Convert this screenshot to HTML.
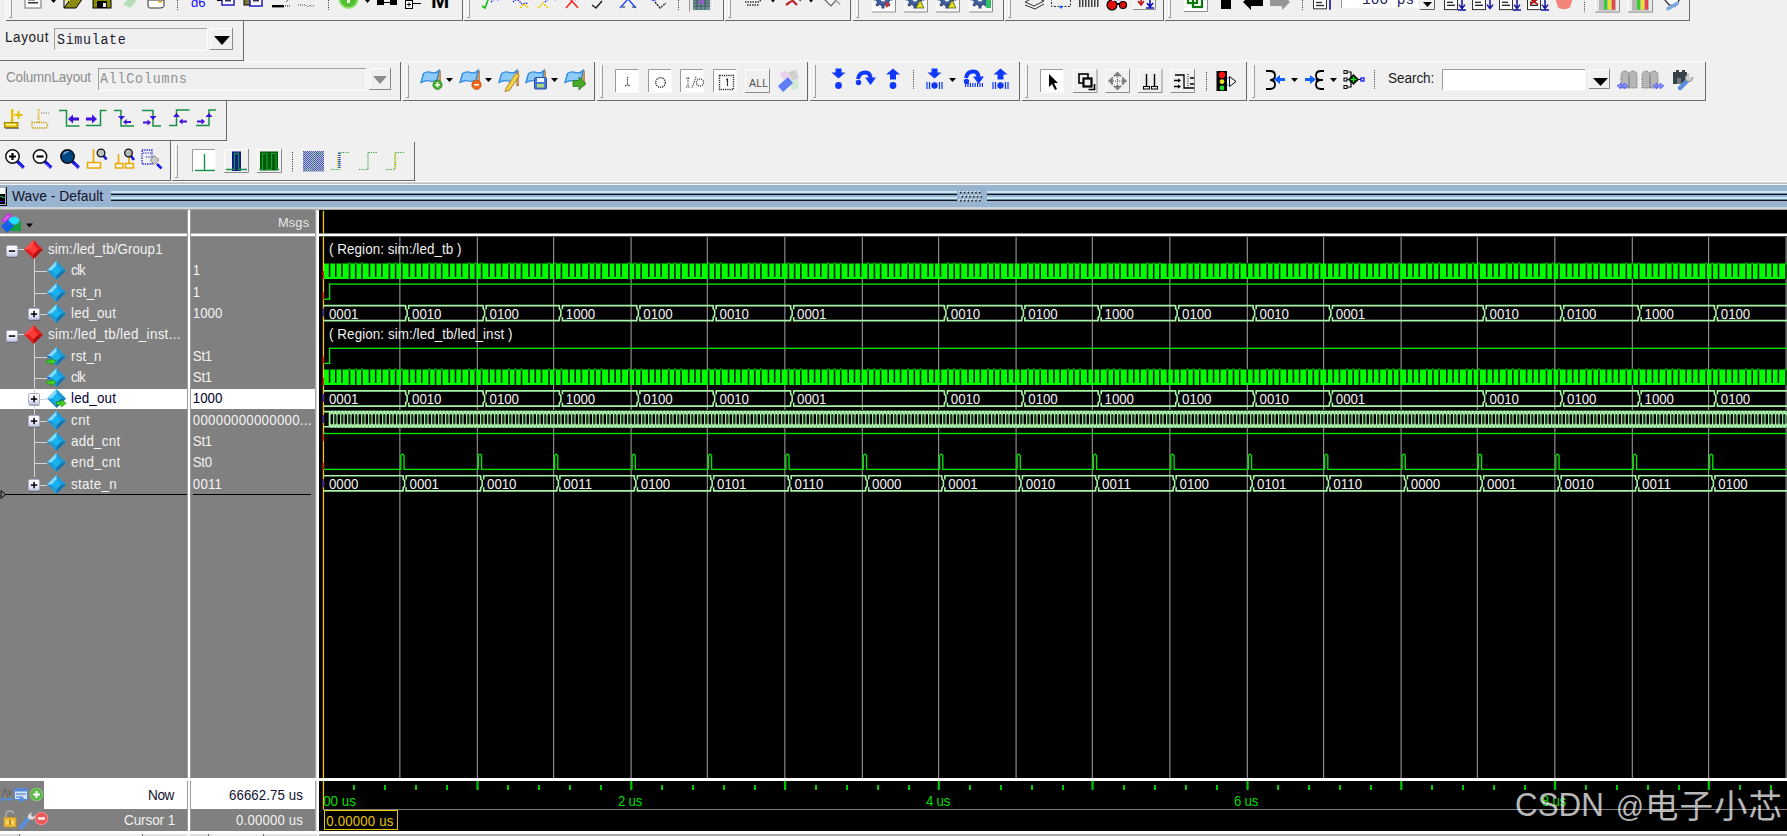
<!DOCTYPE html>
<html><head><meta charset="utf-8"><title>ModelSim Wave</title>
<style>
html,body{margin:0;padding:0;}
body{width:1787px;height:836px;overflow:hidden;background:#f0f0f0;position:relative;font-family:"Liberation Sans",sans-serif;}
#root{position:absolute;left:0;top:0;width:1787px;height:836px;overflow:hidden;}
#root div,#root span,#root svg{position:absolute;display:block;}
.t{white-space:pre;}
</style></head><body><div id="root">
<div style="left:6px;top:20px;width:457px;height:1px;background:#6a6a6a;"></div>
<div style="left:462px;top:-20px;width:1px;height:41px;background:#6a6a6a;"></div>
<div style="left:6px;top:-20px;width:1px;height:40px;background:#fff;"></div>
<div style="left:9px;top:0px;width:1px;height:18px;background:#fff;"></div>
<div style="left:10px;top:0px;width:1px;height:18px;background:#f0f0f0;"></div>
<div style="left:11px;top:0px;width:1px;height:18px;background:#a0a0a0;"></div>
<div style="left:9px;top:17px;width:3px;height:1px;background:#a0a0a0;"></div>
<div style="left:464px;top:20px;width:260px;height:1px;background:#6a6a6a;"></div>
<div style="left:723px;top:-20px;width:1px;height:41px;background:#6a6a6a;"></div>
<div style="left:464px;top:-20px;width:1px;height:40px;background:#fff;"></div>
<div style="left:467px;top:0px;width:1px;height:18px;background:#fff;"></div>
<div style="left:468px;top:0px;width:1px;height:18px;background:#f0f0f0;"></div>
<div style="left:469px;top:0px;width:1px;height:18px;background:#a0a0a0;"></div>
<div style="left:467px;top:17px;width:3px;height:1px;background:#a0a0a0;"></div>
<div style="left:725px;top:20px;width:126px;height:1px;background:#6a6a6a;"></div>
<div style="left:850px;top:-20px;width:1px;height:41px;background:#6a6a6a;"></div>
<div style="left:725px;top:-20px;width:1px;height:40px;background:#fff;"></div>
<div style="left:728px;top:0px;width:1px;height:18px;background:#fff;"></div>
<div style="left:729px;top:0px;width:1px;height:18px;background:#f0f0f0;"></div>
<div style="left:730px;top:0px;width:1px;height:18px;background:#a0a0a0;"></div>
<div style="left:728px;top:17px;width:3px;height:1px;background:#a0a0a0;"></div>
<div style="left:853px;top:20px;width:151px;height:1px;background:#6a6a6a;"></div>
<div style="left:1003px;top:-20px;width:1px;height:41px;background:#6a6a6a;"></div>
<div style="left:853px;top:-20px;width:1px;height:40px;background:#fff;"></div>
<div style="left:856px;top:0px;width:1px;height:18px;background:#fff;"></div>
<div style="left:857px;top:0px;width:1px;height:18px;background:#f0f0f0;"></div>
<div style="left:858px;top:0px;width:1px;height:18px;background:#a0a0a0;"></div>
<div style="left:856px;top:17px;width:3px;height:1px;background:#a0a0a0;"></div>
<div style="left:1005px;top:20px;width:159px;height:1px;background:#6a6a6a;"></div>
<div style="left:1163px;top:-20px;width:1px;height:41px;background:#6a6a6a;"></div>
<div style="left:1005px;top:-20px;width:1px;height:40px;background:#fff;"></div>
<div style="left:1008px;top:0px;width:1px;height:18px;background:#fff;"></div>
<div style="left:1009px;top:0px;width:1px;height:18px;background:#f0f0f0;"></div>
<div style="left:1010px;top:0px;width:1px;height:18px;background:#a0a0a0;"></div>
<div style="left:1008px;top:17px;width:3px;height:1px;background:#a0a0a0;"></div>
<div style="left:1165px;top:20px;width:525px;height:1px;background:#6a6a6a;"></div>
<div style="left:1689px;top:-20px;width:1px;height:41px;background:#6a6a6a;"></div>
<div style="left:1165px;top:-20px;width:1px;height:40px;background:#fff;"></div>
<div style="left:1168px;top:0px;width:1px;height:18px;background:#fff;"></div>
<div style="left:1169px;top:0px;width:1px;height:18px;background:#f0f0f0;"></div>
<div style="left:1170px;top:0px;width:1px;height:18px;background:#a0a0a0;"></div>
<div style="left:1168px;top:17px;width:3px;height:1px;background:#a0a0a0;"></div>
<div style="left:0px;top:60px;width:244px;height:1px;background:#6a6a6a;"></div>
<div style="left:243px;top:21px;width:1px;height:40px;background:#6a6a6a;"></div>
<div style="left:0px;top:100px;width:401px;height:1px;background:#6a6a6a;"></div>
<div style="left:400px;top:61px;width:1px;height:40px;background:#6a6a6a;"></div>
<div style="left:403px;top:100px;width:192px;height:1px;background:#6a6a6a;"></div>
<div style="left:594px;top:62px;width:1px;height:39px;background:#6a6a6a;"></div>
<div style="left:403px;top:62px;width:1px;height:38px;background:#fff;"></div>
<div style="left:406px;top:65px;width:1px;height:33px;background:#fff;"></div>
<div style="left:407px;top:65px;width:1px;height:33px;background:#f0f0f0;"></div>
<div style="left:408px;top:65px;width:1px;height:33px;background:#a0a0a0;"></div>
<div style="left:406px;top:97px;width:3px;height:1px;background:#a0a0a0;"></div>
<div style="left:597px;top:100px;width:211px;height:1px;background:#6a6a6a;"></div>
<div style="left:807px;top:62px;width:1px;height:39px;background:#6a6a6a;"></div>
<div style="left:597px;top:62px;width:1px;height:38px;background:#fff;"></div>
<div style="left:600px;top:65px;width:1px;height:33px;background:#fff;"></div>
<div style="left:601px;top:65px;width:1px;height:33px;background:#f0f0f0;"></div>
<div style="left:602px;top:65px;width:1px;height:33px;background:#a0a0a0;"></div>
<div style="left:600px;top:97px;width:3px;height:1px;background:#a0a0a0;"></div>
<div style="left:810px;top:100px;width:210px;height:1px;background:#6a6a6a;"></div>
<div style="left:1019px;top:62px;width:1px;height:39px;background:#6a6a6a;"></div>
<div style="left:810px;top:62px;width:1px;height:38px;background:#fff;"></div>
<div style="left:813px;top:65px;width:1px;height:33px;background:#fff;"></div>
<div style="left:814px;top:65px;width:1px;height:33px;background:#f0f0f0;"></div>
<div style="left:815px;top:65px;width:1px;height:33px;background:#a0a0a0;"></div>
<div style="left:813px;top:97px;width:3px;height:1px;background:#a0a0a0;"></div>
<div style="left:1022px;top:100px;width:225px;height:1px;background:#6a6a6a;"></div>
<div style="left:1246px;top:62px;width:1px;height:39px;background:#6a6a6a;"></div>
<div style="left:1022px;top:62px;width:1px;height:38px;background:#fff;"></div>
<div style="left:1025px;top:65px;width:1px;height:33px;background:#fff;"></div>
<div style="left:1026px;top:65px;width:1px;height:33px;background:#f0f0f0;"></div>
<div style="left:1027px;top:65px;width:1px;height:33px;background:#a0a0a0;"></div>
<div style="left:1025px;top:97px;width:3px;height:1px;background:#a0a0a0;"></div>
<div style="left:1249px;top:100px;width:457px;height:1px;background:#6a6a6a;"></div>
<div style="left:1705px;top:62px;width:1px;height:39px;background:#6a6a6a;"></div>
<div style="left:1249px;top:62px;width:1px;height:38px;background:#fff;"></div>
<div style="left:1252px;top:65px;width:1px;height:33px;background:#fff;"></div>
<div style="left:1253px;top:65px;width:1px;height:33px;background:#f0f0f0;"></div>
<div style="left:1254px;top:65px;width:1px;height:33px;background:#a0a0a0;"></div>
<div style="left:1252px;top:97px;width:3px;height:1px;background:#a0a0a0;"></div>
<div style="left:244px;top:61px;width:1462px;height:1px;background:#fbfbfb;"></div>
<div style="left:0px;top:140px;width:227px;height:1px;background:#6a6a6a;"></div>
<div style="left:226px;top:101px;width:1px;height:40px;background:#6a6a6a;"></div>
<div style="left:0px;top:180px;width:171px;height:1px;background:#6a6a6a;"></div>
<div style="left:170px;top:141px;width:1px;height:40px;background:#6a6a6a;"></div>
<div style="left:172px;top:180px;width:243px;height:1px;background:#6a6a6a;"></div>
<div style="left:414px;top:142px;width:1px;height:39px;background:#6a6a6a;"></div>
<div style="left:172px;top:142px;width:1px;height:38px;background:#fff;"></div>
<div style="left:175px;top:145px;width:1px;height:33px;background:#fff;"></div>
<div style="left:176px;top:145px;width:1px;height:33px;background:#f0f0f0;"></div>
<div style="left:177px;top:145px;width:1px;height:33px;background:#a0a0a0;"></div>
<div style="left:175px;top:177px;width:3px;height:1px;background:#a0a0a0;"></div>
<span id="layout" class="t" style="left:5px;top:31.17px;font:13.5px/1 'Liberation Sans',sans-serif;color:#1a1a1a;letter-spacing:0.569px;transform:scale(1.0,1.07);transform-origin:0 11.43px;">Layout</span>
<div style="left:54px;top:28px;width:154px;height:23px;background:#f0f0f0;"></div>
<div style="left:54px;top:28px;width:154px;height:1px;background:#a0a0a0;"></div>
<div style="left:54px;top:28px;width:1px;height:23px;background:#a0a0a0;"></div>
<div style="left:54px;top:50px;width:154px;height:1px;background:#fff;"></div>
<div style="left:207px;top:28px;width:1px;height:23px;background:#fff;"></div>
<span id="simulate" class="t" style="left:57px;top:33.76px;font:13.3px/1 'Liberation Mono',monospace;color:#202030;letter-spacing:0.699px;transform:scale(1.0,1.1);transform-origin:0 11.04px;">Simulate</span>
<div style="left:210px;top:28px;width:23px;height:22px;background:#f0f0f0;"></div>
<div style="left:210px;top:28px;width:23px;height:1px;background:#fff;"></div>
<div style="left:210px;top:28px;width:1px;height:22px;background:#fff;"></div>
<div style="left:210px;top:49px;width:23px;height:1px;background:#8a8a8a;"></div>
<div style="left:232px;top:28px;width:1px;height:22px;background:#8a8a8a;"></div>
<svg style="left:214px;top:36px" width="16" height="9"><path d="M0 0H16L8.0 9Z" fill="#000"/></svg>
<span id="collayout" class="t" style="left:6px;top:70.77px;font:13.5px/1 'Liberation Sans',sans-serif;color:#8c8c8c;letter-spacing:-0.181px;transform:scale(1.0,1.07);transform-origin:0 11.43px;">ColumnLayout</span>
<div style="left:98px;top:68px;width:269px;height:23px;background:#f0f0f0;"></div>
<div style="left:98px;top:68px;width:269px;height:1px;background:#a0a0a0;"></div>
<div style="left:98px;top:68px;width:1px;height:23px;background:#a0a0a0;"></div>
<div style="left:98px;top:90px;width:269px;height:1px;background:#fff;"></div>
<div style="left:366px;top:68px;width:1px;height:23px;background:#fff;"></div>
<span id="allcols" class="t" style="left:100px;top:73.26px;font:13.3px/1 'Liberation Mono',monospace;color:#909090;letter-spacing:0.799px;transform:scale(1.0,1.1);transform-origin:0 11.04px;">AllColumns</span>
<div style="left:369px;top:68px;width:22px;height:22px;background:#f0f0f0;"></div>
<div style="left:369px;top:68px;width:22px;height:1px;background:#fff;"></div>
<div style="left:369px;top:68px;width:1px;height:22px;background:#fff;"></div>
<div style="left:369px;top:89px;width:22px;height:1px;background:#8a8a8a;"></div>
<div style="left:390px;top:68px;width:1px;height:22px;background:#8a8a8a;"></div>
<svg style="left:373px;top:76px" width="14" height="8"><path d="M0 0H14L7.0 8Z" fill="#8a8a8a"/></svg>
<div style="left:0px;top:181px;width:1787px;height:1px;background:#ffffff;"></div>
<div style="left:0px;top:182px;width:1787px;height:1px;background:#d0d0d0;"></div>
<div style="left:0px;top:183px;width:1787px;height:1px;background:#c0c0c0;"></div>
<div style="left:0px;top:184px;width:1787px;height:1px;background:#f4f4f4;"></div>
<div style="left:0px;top:185px;width:1787px;height:22px;background:#99b4d1;"></div>
<div style="left:0px;top:207px;width:1787px;height:1px;background:#cdd5df;"></div>
<div style="left:0px;top:208px;width:1787px;height:1px;background:#d6d6d6;"></div>
<div style="left:0px;top:209px;width:1787px;height:1px;background:#a4a4a4;"></div>
<div style="left:111px;top:191px;width:846px;height:2px;background:#c4e7f3;"></div>
<div style="left:111px;top:193px;width:846px;height:1px;background:#6f8aa0;"></div>
<div style="left:111px;top:194px;width:846px;height:1px;background:#101418;"></div>
<div style="left:111px;top:197px;width:846px;height:2px;background:#c4e7f3;"></div>
<div style="left:111px;top:199px;width:846px;height:1px;background:#6f8aa0;"></div>
<div style="left:111px;top:200px;width:846px;height:1px;background:#101418;"></div>
<div style="left:987px;top:191px;width:800px;height:2px;background:#c4e7f3;"></div>
<div style="left:987px;top:193px;width:800px;height:1px;background:#6f8aa0;"></div>
<div style="left:987px;top:194px;width:800px;height:1px;background:#101418;"></div>
<div style="left:987px;top:197px;width:800px;height:2px;background:#c4e7f3;"></div>
<div style="left:987px;top:199px;width:800px;height:1px;background:#6f8aa0;"></div>
<div style="left:987px;top:200px;width:800px;height:1px;background:#101418;"></div>
<svg style="left:0;top:0" width="1787" height="210"><rect x="960.0" y="192" width="1.5" height="1.5" fill="#222"/><rect x="959.0" y="191" width="1.2" height="1.2" fill="#fff"/><rect x="963.8" y="192" width="1.5" height="1.5" fill="#222"/><rect x="962.8" y="191" width="1.2" height="1.2" fill="#fff"/><rect x="967.6" y="192" width="1.5" height="1.5" fill="#222"/><rect x="966.6" y="191" width="1.2" height="1.2" fill="#fff"/><rect x="971.4" y="192" width="1.5" height="1.5" fill="#222"/><rect x="970.4" y="191" width="1.2" height="1.2" fill="#fff"/><rect x="975.2" y="192" width="1.5" height="1.5" fill="#222"/><rect x="974.2" y="191" width="1.2" height="1.2" fill="#fff"/><rect x="979.0" y="192" width="1.5" height="1.5" fill="#222"/><rect x="978.0" y="191" width="1.2" height="1.2" fill="#fff"/><rect x="961.5" y="196" width="1.5" height="1.5" fill="#222"/><rect x="960.5" y="195" width="1.2" height="1.2" fill="#fff"/><rect x="965.3" y="196" width="1.5" height="1.5" fill="#222"/><rect x="964.3" y="195" width="1.2" height="1.2" fill="#fff"/><rect x="969.1" y="196" width="1.5" height="1.5" fill="#222"/><rect x="968.1" y="195" width="1.2" height="1.2" fill="#fff"/><rect x="972.9" y="196" width="1.5" height="1.5" fill="#222"/><rect x="971.9" y="195" width="1.2" height="1.2" fill="#fff"/><rect x="976.7" y="196" width="1.5" height="1.5" fill="#222"/><rect x="975.7" y="195" width="1.2" height="1.2" fill="#fff"/><rect x="980.5" y="196" width="1.5" height="1.5" fill="#222"/><rect x="979.5" y="195" width="1.2" height="1.2" fill="#fff"/><rect x="960.0" y="200" width="1.5" height="1.5" fill="#222"/><rect x="959.0" y="199" width="1.2" height="1.2" fill="#fff"/><rect x="963.8" y="200" width="1.5" height="1.5" fill="#222"/><rect x="962.8" y="199" width="1.2" height="1.2" fill="#fff"/><rect x="967.6" y="200" width="1.5" height="1.5" fill="#222"/><rect x="966.6" y="199" width="1.2" height="1.2" fill="#fff"/><rect x="971.4" y="200" width="1.5" height="1.5" fill="#222"/><rect x="970.4" y="199" width="1.2" height="1.2" fill="#fff"/><rect x="975.2" y="200" width="1.5" height="1.5" fill="#222"/><rect x="974.2" y="199" width="1.2" height="1.2" fill="#fff"/><rect x="979.0" y="200" width="1.5" height="1.5" fill="#222"/><rect x="978.0" y="199" width="1.2" height="1.2" fill="#fff"/></svg>
<span id="wavedef" class="t" style="left:12px;top:190.22px;font:13.8px/1 'Liberation Sans',sans-serif;color:#10132a;letter-spacing:0.030px;transform:scale(1.0,1.07);transform-origin:0 11.68px;">Wave - Default</span>
<div style="left:0px;top:187px;width:7px;height:19px;background:#101010;"></div>
<div style="left:0px;top:187px;width:6px;height:18px;background:#b0b0b0;"></div>
<div style="left:0px;top:188px;width:5px;height:6px;background:#fafafa;"></div>
<div style="left:0px;top:194px;width:5px;height:10px;background:#000;"></div>
<div style="left:0px;top:196px;width:3px;height:1px;background:#10a048;"></div>
<div style="left:2px;top:197px;width:3px;height:1px;background:#10a048;"></div>
<div style="left:0px;top:201px;width:5px;height:1px;background:#4010c0;"></div>
<div style="left:0px;top:210px;width:188px;height:621px;background:#808080;"></div>
<div style="left:191px;top:210px;width:124px;height:621px;background:#808080;"></div>
<div style="left:187px;top:210px;width:1px;height:621px;background:#9c9c9c;"></div>
<div style="left:188px;top:210px;width:2px;height:626px;background:#fff;"></div>
<div style="left:190px;top:210px;width:1px;height:626px;background:#9a9a9a;"></div>
<div style="left:315px;top:210px;width:1px;height:626px;background:#a8a8a8;"></div>
<div style="left:316px;top:210px;width:1px;height:626px;background:#dcdcdc;"></div>
<div style="left:317px;top:210px;width:2px;height:626px;background:#fff;"></div>
<div style="left:319px;top:210px;width:1468px;height:621px;background:#000;"></div>
<div style="left:0px;top:233px;width:187px;height:1px;background:#c0c0c0;"></div>
<div style="left:0px;top:234px;width:187px;height:2px;background:#fff;"></div>
<div style="left:0px;top:236px;width:187px;height:1px;background:#989898;"></div>
<div style="left:191px;top:233px;width:124px;height:1px;background:#c0c0c0;"></div>
<div style="left:191px;top:234px;width:124px;height:2px;background:#fff;"></div>
<div style="left:191px;top:236px;width:124px;height:1px;background:#989898;"></div>
<div style="left:319px;top:233px;width:1468px;height:1px;background:#8a8a8a;"></div>
<div style="left:319px;top:234px;width:1468px;height:2px;background:#fff;"></div>
<div style="left:319px;top:236px;width:1468px;height:1px;background:#484848;"></div>
<div style="left:0px;top:778px;width:1787px;height:3px;background:#fff;"></div>
<div style="left:44px;top:781px;width:143px;height:28px;background:#fff;"></div>
<div style="left:191px;top:781px;width:124px;height:28px;background:#fff;"></div>
<div style="left:0px;top:831px;width:1787px;height:3px;background:#fff;"></div>
<div style="left:0px;top:834px;width:19px;height:2px;background:#dcdcdc;"></div>
<div style="left:19px;top:834px;width:1px;height:2px;background:#707070;"></div>
<div style="left:20px;top:834px;width:122px;height:2px;background:#f0f0f0;"></div>
<div style="left:142px;top:834px;width:1px;height:2px;background:#707070;"></div>
<div style="left:143px;top:834px;width:44px;height:2px;background:#e4e4e4;"></div>
<div style="left:190px;top:834px;width:18px;height:2px;background:#dcdcdc;"></div>
<div style="left:208px;top:834px;width:1px;height:2px;background:#707070;"></div>
<div style="left:209px;top:834px;width:3px;height:2px;background:#e4e4e4;"></div>
<div style="left:212px;top:834px;width:51px;height:2px;background:#f0f0f0;"></div>
<div style="left:263px;top:834px;width:1px;height:2px;background:#707070;"></div>
<div style="left:264px;top:834px;width:52px;height:2px;background:#e4e4e4;"></div>
<div style="left:319px;top:834px;width:1468px;height:2px;background:#a8a8a8;"></div>
<div style="left:0px;top:389px;width:187px;height:20px;background:#fff;"></div>
<div style="left:191px;top:389px;width:124px;height:20px;background:#fff;"></div>
<div style="left:4px;top:494px;width:183px;height:1px;background:#000;"></div>
<div style="left:193px;top:494px;width:118px;height:1px;background:#000;"></div>
<svg style="left:0;top:490px" width="7" height="9"><path d="M1 0.5L5.5 4.5L1 8.5Z" fill="#808080" stroke="#000" stroke-width="1"/></svg>
<span id="msgs" class="t" style="left:278px;top:216.76px;font:12.8px/1 'Liberation Sans',sans-serif;color:#eaeaea;letter-spacing:0.157px;transform:scale(1.0,1.07);transform-origin:0 10.84px;">Msgs</span>
<div style="left:34px;top:258px;width:1px;height:49px;background:#d4d4d4;"></div>
<div style="left:34px;top:343px;width:1px;height:134px;background:#d4d4d4;"></div>
<div style="left:17px;top:249px;width:8px;height:1px;background:#d4d4d4;"></div>
<svg style="left:5.5px;top:244.5px" width="14" height="14"><defs><linearGradient id="eg5_244" x1="0" y1="0" x2="0" y2="1"><stop offset="0" stop-color="#fff"/><stop offset=".5" stop-color="#f4f4fc"/><stop offset="1" stop-color="#c0c4e4"/></linearGradient></defs><rect x="0.5" y="0.5" width="11" height="11" rx="1.5" fill="url(#eg5_244)" stroke="#a8acc4"/><rect x="1" y="12" width="11" height="1" fill="#505060" opacity=".45"/><rect x="2.800" y="5.300" width="6.400" height="1.500" fill="#000"/></svg>
<svg style="left:23.0px;top:238.5px" width="21.0" height="21.0"><path d="M10.5 1.0L20.0 10.5L10.5 20.0L1.0 10.5Z" fill="#e02020"/><path d="M10.5 1.0L1.0 10.5L5.75 10.5L10.5 5.75Z" fill="#ff5050"/><path d="M10.5 20.0L20.0 10.5L15.25 10.5L10.5 15.25Z" fill="#b01010"/><path d="M10.5 5.75L15.25 10.5L10.5 15.25L5.75 10.5Z" fill="#ff3838"/></svg>
<span id="n0" class="t" style="left:48px;top:242.66px;font:13.4px/1 'Liberation Sans',sans-serif;color:#f2f2f2;letter-spacing:0.086px;transform:scale(1.0,1.07);transform-origin:0 11.34px;">sim:/led_tb/Group1</span>
<div style="left:35px;top:271px;width:12px;height:1px;background:#d4d4d4;"></div>
<svg style="left:45.5px;top:259.5px" width="21.0" height="21.0"><path d="M10.5 1.0L20.0 10.5L10.5 20.0L1.0 10.5Z" fill="#1e9ad6"/><path d="M10.5 1.0L1.0 10.5L5.75 10.5L10.5 5.75Z" fill="#7fdcff"/><path d="M10.5 20.0L20.0 10.5L15.25 10.5L10.5 15.25Z" fill="#1577b0"/><path d="M10.5 5.75L15.25 10.5L10.5 15.25L5.75 10.5Z" fill="#19b4f0"/></svg>
<span id="n1" class="t" style="left:71px;top:263.66px;font:13.4px/1 'Liberation Sans',sans-serif;color:#f2f2f2;letter-spacing:-0.819px;transform:scale(1.0,1.07);transform-origin:0 11.34px;">clk</span>
<span id="v1" class="t" style="left:192.8px;top:263.74px;font:13.3px/1 'Liberation Sans',sans-serif;color:#f2f2f2;letter-spacing:-1.125px;transform:scale(1.0,1.07);transform-origin:0 11.26px;">1</span>
<div style="left:35px;top:293px;width:12px;height:1px;background:#d4d4d4;"></div>
<svg style="left:45.5px;top:281.5px" width="21.0" height="21.0"><path d="M10.5 1.0L20.0 10.5L10.5 20.0L1.0 10.5Z" fill="#1e9ad6"/><path d="M10.5 1.0L1.0 10.5L5.75 10.5L10.5 5.75Z" fill="#7fdcff"/><path d="M10.5 20.0L20.0 10.5L15.25 10.5L10.5 15.25Z" fill="#1577b0"/><path d="M10.5 5.75L15.25 10.5L10.5 15.25L5.75 10.5Z" fill="#19b4f0"/></svg>
<span id="n2" class="t" style="left:71px;top:285.66px;font:13.4px/1 'Liberation Sans',sans-serif;color:#f2f2f2;letter-spacing:0.196px;transform:scale(1.0,1.07);transform-origin:0 11.34px;">rst_n</span>
<span id="v2" class="t" style="left:192.8px;top:285.74px;font:13.3px/1 'Liberation Sans',sans-serif;color:#f2f2f2;letter-spacing:-1.125px;transform:scale(1.0,1.07);transform-origin:0 11.26px;">1</span>
<div style="left:40px;top:314px;width:7px;height:1px;background:#d4d4d4;"></div>
<svg style="left:28.4px;top:307.5px" width="14" height="14"><defs><linearGradient id="eg28_307" x1="0" y1="0" x2="0" y2="1"><stop offset="0" stop-color="#fff"/><stop offset=".5" stop-color="#f4f4fc"/><stop offset="1" stop-color="#c0c4e4"/></linearGradient></defs><rect x="0.5" y="0.5" width="11" height="11" rx="1.5" fill="url(#eg28_307)" stroke="#a8acc4"/><rect x="1" y="12" width="11" height="1" fill="#505060" opacity=".45"/><rect x="2.800" y="5.300" width="6.400" height="1.500" fill="#000"/><rect x="5.300" y="2.800" width="1.500" height="6.400" fill="#000"/></svg>
<svg style="left:45.5px;top:302.5px" width="21.0" height="21.0"><path d="M10.5 1.0L20.0 10.5L10.5 20.0L1.0 10.5Z" fill="#1e9ad6"/><path d="M10.5 1.0L1.0 10.5L5.75 10.5L10.5 5.75Z" fill="#7fdcff"/><path d="M10.5 20.0L20.0 10.5L15.25 10.5L10.5 15.25Z" fill="#1577b0"/><path d="M10.5 5.75L15.25 10.5L10.5 15.25L5.75 10.5Z" fill="#19b4f0"/></svg>
<span id="n3" class="t" style="left:71px;top:306.66px;font:13.4px/1 'Liberation Sans',sans-serif;color:#f2f2f2;letter-spacing:0.160px;transform:scale(1.0,1.07);transform-origin:0 11.34px;">led_out</span>
<span id="v3" class="t" style="left:192.8px;top:306.74px;font:13.3px/1 'Liberation Sans',sans-serif;color:#f2f2f2;letter-spacing:-0.025px;transform:scale(1.0,1.07);transform-origin:0 11.26px;">1000</span>
<div style="left:17px;top:334px;width:8px;height:1px;background:#d4d4d4;"></div>
<svg style="left:5.5px;top:329.5px" width="14" height="14"><defs><linearGradient id="eg5_329" x1="0" y1="0" x2="0" y2="1"><stop offset="0" stop-color="#fff"/><stop offset=".5" stop-color="#f4f4fc"/><stop offset="1" stop-color="#c0c4e4"/></linearGradient></defs><rect x="0.5" y="0.5" width="11" height="11" rx="1.5" fill="url(#eg5_329)" stroke="#a8acc4"/><rect x="1" y="12" width="11" height="1" fill="#505060" opacity=".45"/><rect x="2.800" y="5.300" width="6.400" height="1.500" fill="#000"/></svg>
<svg style="left:23.0px;top:323.5px" width="21.0" height="21.0"><path d="M10.5 1.0L20.0 10.5L10.5 20.0L1.0 10.5Z" fill="#e02020"/><path d="M10.5 1.0L1.0 10.5L5.75 10.5L10.5 5.75Z" fill="#ff5050"/><path d="M10.5 20.0L20.0 10.5L15.25 10.5L10.5 15.25Z" fill="#b01010"/><path d="M10.5 5.75L15.25 10.5L10.5 15.25L5.75 10.5Z" fill="#ff3838"/></svg>
<span id="n4" class="t" style="left:48px;top:327.66px;font:13.4px/1 'Liberation Sans',sans-serif;color:#f2f2f2;letter-spacing:0.301px;transform:scale(1.0,1.07);transform-origin:0 11.34px;">sim:/led_tb/led_inst...</span>
<div style="left:35px;top:357px;width:12px;height:1px;background:#d4d4d4;"></div>
<svg style="left:45.5px;top:345.5px" width="21.0" height="21.0"><path d="M10.5 1.0L20.0 10.5L10.5 20.0L1.0 10.5Z" fill="#1e9ad6"/><path d="M10.5 1.0L1.0 10.5L5.75 10.5L10.5 5.75Z" fill="#7fdcff"/><path d="M10.5 20.0L20.0 10.5L15.25 10.5L10.5 15.25Z" fill="#1577b0"/><path d="M10.5 5.75L15.25 10.5L10.5 15.25L5.75 10.5Z" fill="#19b4f0"/><path d="M0.8 14.1H5.3V11.9L10 15.6L5.3 19.3V17.1H0.8Z" fill="#44d424" stroke="#208010" stroke-width=".6"/><rect x="1.5" y="10.0" width="3" height="1.6" fill="#1060d0"/></svg>
<span id="n5" class="t" style="left:71px;top:349.66px;font:13.4px/1 'Liberation Sans',sans-serif;color:#f2f2f2;letter-spacing:0.196px;transform:scale(1.0,1.07);transform-origin:0 11.34px;">rst_n</span>
<span id="v5" class="t" style="left:192.8px;top:349.74px;font:13.3px/1 'Liberation Sans',sans-serif;color:#f2f2f2;letter-spacing:-0.269px;transform:scale(1.0,1.07);transform-origin:0 11.26px;">St1</span>
<div style="left:35px;top:378px;width:12px;height:1px;background:#d4d4d4;"></div>
<svg style="left:45.5px;top:366.5px" width="21.0" height="21.0"><path d="M10.5 1.0L20.0 10.5L10.5 20.0L1.0 10.5Z" fill="#1e9ad6"/><path d="M10.5 1.0L1.0 10.5L5.75 10.5L10.5 5.75Z" fill="#7fdcff"/><path d="M10.5 20.0L20.0 10.5L15.25 10.5L10.5 15.25Z" fill="#1577b0"/><path d="M10.5 5.75L15.25 10.5L10.5 15.25L5.75 10.5Z" fill="#19b4f0"/><path d="M0.8 14.1H5.3V11.9L10 15.6L5.3 19.3V17.1H0.8Z" fill="#44d424" stroke="#208010" stroke-width=".6"/><rect x="1.5" y="10.0" width="3" height="1.6" fill="#1060d0"/></svg>
<span id="n6" class="t" style="left:71px;top:370.66px;font:13.4px/1 'Liberation Sans',sans-serif;color:#f2f2f2;letter-spacing:-0.819px;transform:scale(1.0,1.07);transform-origin:0 11.34px;">clk</span>
<span id="v6" class="t" style="left:192.8px;top:370.74px;font:13.3px/1 'Liberation Sans',sans-serif;color:#f2f2f2;letter-spacing:-0.269px;transform:scale(1.0,1.07);transform-origin:0 11.26px;">St1</span>
<div style="left:40px;top:399px;width:7px;height:1px;background:#d4d4d4;"></div>
<svg style="left:28.4px;top:392.5px" width="14" height="14"><defs><linearGradient id="eg28_392" x1="0" y1="0" x2="0" y2="1"><stop offset="0" stop-color="#fff"/><stop offset=".5" stop-color="#f4f4fc"/><stop offset="1" stop-color="#c0c4e4"/></linearGradient></defs><rect x="0.5" y="0.5" width="11" height="11" rx="1.5" fill="url(#eg28_392)" stroke="#a8acc4"/><rect x="1" y="12" width="11" height="1" fill="#505060" opacity=".45"/><rect x="2.800" y="5.300" width="6.400" height="1.500" fill="#000"/><rect x="5.300" y="2.800" width="1.500" height="6.400" fill="#000"/></svg>
<svg style="left:45.5px;top:387.5px" width="21.0" height="21.0"><path d="M10.5 1.0L20.0 10.5L10.5 20.0L1.0 10.5Z" fill="#1e9ad6"/><path d="M10.5 1.0L1.0 10.5L5.75 10.5L10.5 5.75Z" fill="#7fdcff"/><path d="M10.5 20.0L20.0 10.5L15.25 10.5L10.5 15.25Z" fill="#1577b0"/><path d="M10.5 5.75L15.25 10.5L10.5 15.25L5.75 10.5Z" fill="#19b4f0"/><path d="M10.5 13.7H15.2V11.5L20.1 15.3L15.2 19.1V16.9H10.5Z" fill="#44d424" stroke="#208010" stroke-width=".6"/></svg>
<span id="n7" class="t" style="left:71px;top:391.66px;font:13.4px/1 'Liberation Sans',sans-serif;color:#000030;letter-spacing:0.160px;transform:scale(1.0,1.07);transform-origin:0 11.34px;">led_out</span>
<span id="v7" class="t" style="left:192.8px;top:391.74px;font:13.3px/1 'Liberation Sans',sans-serif;color:#000030;letter-spacing:-0.025px;transform:scale(1.0,1.07);transform-origin:0 11.26px;">1000</span>
<div style="left:40px;top:421px;width:7px;height:1px;background:#d4d4d4;"></div>
<svg style="left:28.4px;top:414.5px" width="14" height="14"><defs><linearGradient id="eg28_414" x1="0" y1="0" x2="0" y2="1"><stop offset="0" stop-color="#fff"/><stop offset=".5" stop-color="#f4f4fc"/><stop offset="1" stop-color="#c0c4e4"/></linearGradient></defs><rect x="0.5" y="0.5" width="11" height="11" rx="1.5" fill="url(#eg28_414)" stroke="#a8acc4"/><rect x="1" y="12" width="11" height="1" fill="#505060" opacity=".45"/><rect x="2.800" y="5.300" width="6.400" height="1.500" fill="#000"/><rect x="5.300" y="2.800" width="1.500" height="6.400" fill="#000"/></svg>
<svg style="left:45.5px;top:409.5px" width="21.0" height="21.0"><path d="M10.5 1.0L20.0 10.5L10.5 20.0L1.0 10.5Z" fill="#1e9ad6"/><path d="M10.5 1.0L1.0 10.5L5.75 10.5L10.5 5.75Z" fill="#7fdcff"/><path d="M10.5 20.0L20.0 10.5L15.25 10.5L10.5 15.25Z" fill="#1577b0"/><path d="M10.5 5.75L15.25 10.5L10.5 15.25L5.75 10.5Z" fill="#19b4f0"/></svg>
<span id="n8" class="t" style="left:71px;top:413.66px;font:13.4px/1 'Liberation Sans',sans-serif;color:#f2f2f2;letter-spacing:0.484px;transform:scale(1.0,1.07);transform-origin:0 11.34px;">cnt</span>
<span id="v8" class="t" style="left:192.8px;top:413.74px;font:13.3px/1 'Liberation Sans',sans-serif;color:#f2f2f2;letter-spacing:0.250px;transform:scale(1.0,1.07);transform-origin:0 11.26px;">00000000000000...</span>
<div style="left:35px;top:442px;width:12px;height:1px;background:#d4d4d4;"></div>
<svg style="left:45.5px;top:430.5px" width="21.0" height="21.0"><path d="M10.5 1.0L20.0 10.5L10.5 20.0L1.0 10.5Z" fill="#1e9ad6"/><path d="M10.5 1.0L1.0 10.5L5.75 10.5L10.5 5.75Z" fill="#7fdcff"/><path d="M10.5 20.0L20.0 10.5L15.25 10.5L10.5 15.25Z" fill="#1577b0"/><path d="M10.5 5.75L15.25 10.5L10.5 15.25L5.75 10.5Z" fill="#19b4f0"/></svg>
<span id="n9" class="t" style="left:71px;top:434.66px;font:13.4px/1 'Liberation Sans',sans-serif;color:#f2f2f2;letter-spacing:0.253px;transform:scale(1.0,1.07);transform-origin:0 11.34px;">add_cnt</span>
<span id="v9" class="t" style="left:192.8px;top:434.74px;font:13.3px/1 'Liberation Sans',sans-serif;color:#f2f2f2;letter-spacing:-0.269px;transform:scale(1.0,1.07);transform-origin:0 11.26px;">St1</span>
<div style="left:35px;top:463px;width:12px;height:1px;background:#d4d4d4;"></div>
<svg style="left:45.5px;top:451.5px" width="21.0" height="21.0"><path d="M10.5 1.0L20.0 10.5L10.5 20.0L1.0 10.5Z" fill="#1e9ad6"/><path d="M10.5 1.0L1.0 10.5L5.75 10.5L10.5 5.75Z" fill="#7fdcff"/><path d="M10.5 20.0L20.0 10.5L15.25 10.5L10.5 15.25Z" fill="#1577b0"/><path d="M10.5 5.75L15.25 10.5L10.5 15.25L5.75 10.5Z" fill="#19b4f0"/></svg>
<span id="n10" class="t" style="left:71px;top:455.66px;font:13.4px/1 'Liberation Sans',sans-serif;color:#f2f2f2;letter-spacing:0.253px;transform:scale(1.0,1.07);transform-origin:0 11.34px;">end_cnt</span>
<span id="v10" class="t" style="left:192.8px;top:455.74px;font:13.3px/1 'Liberation Sans',sans-serif;color:#f2f2f2;letter-spacing:-0.331px;transform:scale(1.0,1.07);transform-origin:0 11.26px;">St0</span>
<div style="left:40px;top:485px;width:7px;height:1px;background:#d4d4d4;"></div>
<svg style="left:28.4px;top:478.5px" width="14" height="14"><defs><linearGradient id="eg28_478" x1="0" y1="0" x2="0" y2="1"><stop offset="0" stop-color="#fff"/><stop offset=".5" stop-color="#f4f4fc"/><stop offset="1" stop-color="#c0c4e4"/></linearGradient></defs><rect x="0.5" y="0.5" width="11" height="11" rx="1.5" fill="url(#eg28_478)" stroke="#a8acc4"/><rect x="1" y="12" width="11" height="1" fill="#505060" opacity=".45"/><rect x="2.800" y="5.300" width="6.400" height="1.500" fill="#000"/><rect x="5.300" y="2.800" width="1.500" height="6.400" fill="#000"/></svg>
<svg style="left:45.5px;top:473.5px" width="21.0" height="21.0"><path d="M10.5 1.0L20.0 10.5L10.5 20.0L1.0 10.5Z" fill="#1e9ad6"/><path d="M10.5 1.0L1.0 10.5L5.75 10.5L10.5 5.75Z" fill="#7fdcff"/><path d="M10.5 20.0L20.0 10.5L15.25 10.5L10.5 15.25Z" fill="#1577b0"/><path d="M10.5 5.75L15.25 10.5L10.5 15.25L5.75 10.5Z" fill="#19b4f0"/></svg>
<span id="n11" class="t" style="left:71px;top:477.66px;font:13.4px/1 'Liberation Sans',sans-serif;color:#f2f2f2;letter-spacing:0.312px;transform:scale(1.0,1.07);transform-origin:0 11.34px;">state_n</span>
<span id="v11" class="t" style="left:192.8px;top:477.74px;font:13.3px/1 'Liberation Sans',sans-serif;color:#f2f2f2;letter-spacing:0.208px;transform:scale(1.0,1.07);transform-origin:0 11.26px;">0011</span>
<svg style="left:0;top:212px" width="34" height="22"><path d="M1 9L8 1L13 4L6 11Z" fill="#c030e0"/><path d="M3 8L8 3L10 4L5 9Z" fill="#e060f0"/><rect x="9" y="9" width="12" height="10" fill="#10a040"/><ellipse cx="14" cy="8.5" rx="5.5" ry="4" fill="#20e0ff" stroke="#7090a0" stroke-width=".7"/><path d="M1 14L8 8L14 14L7 21Z" fill="#1060e8"/><path d="M26 11.500H33L29.500 15.500Z" fill="#000"/></svg>
<span id="now" class="t" style="left:148px;top:789.09px;font:13.6px/1 'Liberation Sans',sans-serif;color:#101030;letter-spacing:-0.400px;transform:scale(1.0,1.07);transform-origin:0 11.51px;">Now</span>
<span id="nowv" class="t" style="left:229px;top:789.43px;font:13.2px/1 'Liberation Sans',sans-serif;color:#101030;letter-spacing:0.116px;transform:scale(1.0,1.07);transform-origin:0 11.17px;">66662.75 us</span>
<span id="cur1" class="t" style="left:124px;top:814.09px;font:13.6px/1 'Liberation Sans',sans-serif;color:#f0f0f0;letter-spacing:-0.131px;transform:scale(1.0,1.07);transform-origin:0 11.51px;">Cursor 1</span>
<span id="cur1v" class="t" style="left:236px;top:814.43px;font:13.2px/1 'Liberation Sans',sans-serif;color:#f0f0f0;letter-spacing:0.189px;transform:scale(1.0,1.07);transform-origin:0 11.17px;">0.00000 us</span>
<svg style="left:0;top:784px" width="50" height="48" viewBox="0 784 50 48"><path d="M2 797l3 -8l3 8M8 790l2 5l2 -5" fill="none" stroke="#606060" stroke-width="1.3" opacity=".8"/><path d="M1 799.500h11M1 799.500l2.500 -2M1 799.500l2.500 2M12 799.500l-2.500 -2M12 799.500l-2.500 2" stroke="#4890e8" stroke-width="1.2" fill="none"/><rect x="14.500" y="788.500" width="13" height="11" fill="#d8e4f4" stroke="#5888d0"/><rect x="15" y="789" width="12" height="2.500" fill="#5888d0"/><path d="M16 794h10M16 797h7" stroke="#7098d8" stroke-width="1.400"/><circle cx="21.500" cy="799.500" r="2.500" fill="#5890e0"/><circle cx="36.500" cy="794.500" r="6.300" fill="#58b848" stroke="#88d078" stroke-width="1"/><path d="M33 794.500h7M36.500 791v7" stroke="#fff" stroke-width="2"/><path d="M6 818v-3.500q0 -3.500 4 -3.500q3 0 3.500 2.500" fill="none" stroke="#a8a8a8" stroke-width="1.800"/><rect x="4" y="817.500" width="12" height="9.500" fill="#e8b838" stroke="#c89820" stroke-width=".8"/><rect x="6" y="820.500" width="8" height="4" fill="#f8d870"/><rect x="9" y="820" width="2" height="5" fill="#b88818"/><path d="M21 827.500l8 -9.500" stroke="#5890e8" stroke-width="3.600" stroke-linecap="round"/><path d="M28 818.500q-1 -4.500 4 -6l-1 3l2 1.500l2.500 -2q0 5 -5.500 4.500Z" fill="#e0e0e0" stroke="#b0b0b0" stroke-width=".6"/><circle cx="41.500" cy="818.500" r="6.300" fill="#f05858" stroke="#f89090" stroke-width="1"/><rect x="38" y="817.300" width="7" height="2.400" fill="#fff"/></svg>
<span id="la0" class="t" style="left:329px;top:307.64px;font:13.3px/1 'Liberation Sans',sans-serif;color:#f4f4f4;letter-spacing:-0.043px;transform:scale(1.0,1.1);transform-origin:0 11.26px;">0001</span>
<span id="la1" class="t" style="left:412.04999999999995px;top:307.64px;font:13.3px/1 'Liberation Sans',sans-serif;color:#f4f4f4;letter-spacing:-0.043px;transform:scale(1.0,1.1);transform-origin:0 11.26px;">0010</span>
<span id="la2" class="t" style="left:489.54999999999995px;top:307.64px;font:13.3px/1 'Liberation Sans',sans-serif;color:#f4f4f4;letter-spacing:-0.043px;transform:scale(1.0,1.1);transform-origin:0 11.26px;">0100</span>
<span id="la3" class="t" style="left:565.8px;top:307.64px;font:13.3px/1 'Liberation Sans',sans-serif;color:#f4f4f4;letter-spacing:-0.043px;transform:scale(1.0,1.1);transform-origin:0 11.26px;">1000</span>
<span id="la4" class="t" style="left:643.3px;top:307.64px;font:13.3px/1 'Liberation Sans',sans-serif;color:#f4f4f4;letter-spacing:-0.043px;transform:scale(1.0,1.1);transform-origin:0 11.26px;">0100</span>
<span id="la5" class="t" style="left:719.55px;top:307.64px;font:13.3px/1 'Liberation Sans',sans-serif;color:#f4f4f4;letter-spacing:-0.043px;transform:scale(1.0,1.1);transform-origin:0 11.26px;">0010</span>
<span id="la6" class="t" style="left:797.05px;top:307.64px;font:13.3px/1 'Liberation Sans',sans-serif;color:#f4f4f4;letter-spacing:-0.043px;transform:scale(1.0,1.1);transform-origin:0 11.26px;">0001</span>
<span id="la7" class="t" style="left:950.8px;top:307.64px;font:13.3px/1 'Liberation Sans',sans-serif;color:#f4f4f4;letter-spacing:-0.043px;transform:scale(1.0,1.1);transform-origin:0 11.26px;">0010</span>
<span id="la8" class="t" style="left:1028.3px;top:307.64px;font:13.3px/1 'Liberation Sans',sans-serif;color:#f4f4f4;letter-spacing:-0.043px;transform:scale(1.0,1.1);transform-origin:0 11.26px;">0100</span>
<span id="la9" class="t" style="left:1104.5500000000002px;top:307.64px;font:13.3px/1 'Liberation Sans',sans-serif;color:#f4f4f4;letter-spacing:-0.043px;transform:scale(1.0,1.1);transform-origin:0 11.26px;">1000</span>
<span id="la10" class="t" style="left:1182.0500000000002px;top:307.64px;font:13.3px/1 'Liberation Sans',sans-serif;color:#f4f4f4;letter-spacing:-0.043px;transform:scale(1.0,1.1);transform-origin:0 11.26px;">0100</span>
<span id="la11" class="t" style="left:1259.5500000000002px;top:307.64px;font:13.3px/1 'Liberation Sans',sans-serif;color:#f4f4f4;letter-spacing:-0.043px;transform:scale(1.0,1.1);transform-origin:0 11.26px;">0010</span>
<span id="la12" class="t" style="left:1335.8000000000002px;top:307.64px;font:13.3px/1 'Liberation Sans',sans-serif;color:#f4f4f4;letter-spacing:-0.043px;transform:scale(1.0,1.1);transform-origin:0 11.26px;">0001</span>
<span id="la13" class="t" style="left:1489.5500000000002px;top:307.64px;font:13.3px/1 'Liberation Sans',sans-serif;color:#f4f4f4;letter-spacing:-0.043px;transform:scale(1.0,1.1);transform-origin:0 11.26px;">0010</span>
<span id="la14" class="t" style="left:1567.0500000000002px;top:307.64px;font:13.3px/1 'Liberation Sans',sans-serif;color:#f4f4f4;letter-spacing:-0.043px;transform:scale(1.0,1.1);transform-origin:0 11.26px;">0100</span>
<span id="la15" class="t" style="left:1644.5500000000002px;top:307.64px;font:13.3px/1 'Liberation Sans',sans-serif;color:#f4f4f4;letter-spacing:-0.043px;transform:scale(1.0,1.1);transform-origin:0 11.26px;">1000</span>
<span id="la16" class="t" style="left:1720.8000000000002px;top:307.64px;font:13.3px/1 'Liberation Sans',sans-serif;color:#f4f4f4;letter-spacing:-0.043px;transform:scale(1.0,1.1);transform-origin:0 11.26px;">0100</span>
<span id="lb0" class="t" style="left:329px;top:393.14px;font:13.3px/1 'Liberation Sans',sans-serif;color:#f4f4f4;letter-spacing:-0.043px;transform:scale(1.0,1.1);transform-origin:0 11.26px;">0001</span>
<span id="lb1" class="t" style="left:412.04999999999995px;top:393.14px;font:13.3px/1 'Liberation Sans',sans-serif;color:#f4f4f4;letter-spacing:-0.043px;transform:scale(1.0,1.1);transform-origin:0 11.26px;">0010</span>
<span id="lb2" class="t" style="left:489.54999999999995px;top:393.14px;font:13.3px/1 'Liberation Sans',sans-serif;color:#f4f4f4;letter-spacing:-0.043px;transform:scale(1.0,1.1);transform-origin:0 11.26px;">0100</span>
<span id="lb3" class="t" style="left:565.8px;top:393.14px;font:13.3px/1 'Liberation Sans',sans-serif;color:#f4f4f4;letter-spacing:-0.043px;transform:scale(1.0,1.1);transform-origin:0 11.26px;">1000</span>
<span id="lb4" class="t" style="left:643.3px;top:393.14px;font:13.3px/1 'Liberation Sans',sans-serif;color:#f4f4f4;letter-spacing:-0.043px;transform:scale(1.0,1.1);transform-origin:0 11.26px;">0100</span>
<span id="lb5" class="t" style="left:719.55px;top:393.14px;font:13.3px/1 'Liberation Sans',sans-serif;color:#f4f4f4;letter-spacing:-0.043px;transform:scale(1.0,1.1);transform-origin:0 11.26px;">0010</span>
<span id="lb6" class="t" style="left:797.05px;top:393.14px;font:13.3px/1 'Liberation Sans',sans-serif;color:#f4f4f4;letter-spacing:-0.043px;transform:scale(1.0,1.1);transform-origin:0 11.26px;">0001</span>
<span id="lb7" class="t" style="left:950.8px;top:393.14px;font:13.3px/1 'Liberation Sans',sans-serif;color:#f4f4f4;letter-spacing:-0.043px;transform:scale(1.0,1.1);transform-origin:0 11.26px;">0010</span>
<span id="lb8" class="t" style="left:1028.3px;top:393.14px;font:13.3px/1 'Liberation Sans',sans-serif;color:#f4f4f4;letter-spacing:-0.043px;transform:scale(1.0,1.1);transform-origin:0 11.26px;">0100</span>
<span id="lb9" class="t" style="left:1104.5500000000002px;top:393.14px;font:13.3px/1 'Liberation Sans',sans-serif;color:#f4f4f4;letter-spacing:-0.043px;transform:scale(1.0,1.1);transform-origin:0 11.26px;">1000</span>
<span id="lb10" class="t" style="left:1182.0500000000002px;top:393.14px;font:13.3px/1 'Liberation Sans',sans-serif;color:#f4f4f4;letter-spacing:-0.043px;transform:scale(1.0,1.1);transform-origin:0 11.26px;">0100</span>
<span id="lb11" class="t" style="left:1259.5500000000002px;top:393.14px;font:13.3px/1 'Liberation Sans',sans-serif;color:#f4f4f4;letter-spacing:-0.043px;transform:scale(1.0,1.1);transform-origin:0 11.26px;">0010</span>
<span id="lb12" class="t" style="left:1335.8000000000002px;top:393.14px;font:13.3px/1 'Liberation Sans',sans-serif;color:#f4f4f4;letter-spacing:-0.043px;transform:scale(1.0,1.1);transform-origin:0 11.26px;">0001</span>
<span id="lb13" class="t" style="left:1489.5500000000002px;top:393.14px;font:13.3px/1 'Liberation Sans',sans-serif;color:#f4f4f4;letter-spacing:-0.043px;transform:scale(1.0,1.1);transform-origin:0 11.26px;">0010</span>
<span id="lb14" class="t" style="left:1567.0500000000002px;top:393.14px;font:13.3px/1 'Liberation Sans',sans-serif;color:#f4f4f4;letter-spacing:-0.043px;transform:scale(1.0,1.1);transform-origin:0 11.26px;">0100</span>
<span id="lb15" class="t" style="left:1644.5500000000002px;top:393.14px;font:13.3px/1 'Liberation Sans',sans-serif;color:#f4f4f4;letter-spacing:-0.043px;transform:scale(1.0,1.1);transform-origin:0 11.26px;">1000</span>
<span id="lb16" class="t" style="left:1720.8000000000002px;top:393.14px;font:13.3px/1 'Liberation Sans',sans-serif;color:#f4f4f4;letter-spacing:-0.043px;transform:scale(1.0,1.1);transform-origin:0 11.26px;">0100</span>
<span id="st0" class="t" style="left:329px;top:477.94px;font:13.3px/1 'Liberation Sans',sans-serif;color:#f4f4f4;letter-spacing:-0.043px;transform:scale(1.0,1.1);transform-origin:0 11.26px;">0000</span>
<span id="st1" class="t" style="left:409.54999999999995px;top:477.94px;font:13.3px/1 'Liberation Sans',sans-serif;color:#f4f4f4;letter-spacing:-0.043px;transform:scale(1.0,1.1);transform-origin:0 11.26px;">0001</span>
<span id="st2" class="t" style="left:487.04999999999995px;top:477.94px;font:13.3px/1 'Liberation Sans',sans-serif;color:#f4f4f4;letter-spacing:-0.043px;transform:scale(1.0,1.1);transform-origin:0 11.26px;">0010</span>
<span id="st3" class="t" style="left:563.3px;top:477.94px;font:13.3px/1 'Liberation Sans',sans-serif;color:#f4f4f4;letter-spacing:0.109px;transform:scale(1.0,1.1);transform-origin:0 11.26px;">0011</span>
<span id="st4" class="t" style="left:640.8px;top:477.94px;font:13.3px/1 'Liberation Sans',sans-serif;color:#f4f4f4;letter-spacing:-0.043px;transform:scale(1.0,1.1);transform-origin:0 11.26px;">0100</span>
<span id="st5" class="t" style="left:717.05px;top:477.94px;font:13.3px/1 'Liberation Sans',sans-serif;color:#f4f4f4;letter-spacing:-0.043px;transform:scale(1.0,1.1);transform-origin:0 11.26px;">0101</span>
<span id="st6" class="t" style="left:794.55px;top:477.94px;font:13.3px/1 'Liberation Sans',sans-serif;color:#f4f4f4;letter-spacing:0.109px;transform:scale(1.0,1.1);transform-origin:0 11.26px;">0110</span>
<span id="st7" class="t" style="left:872.05px;top:477.94px;font:13.3px/1 'Liberation Sans',sans-serif;color:#f4f4f4;letter-spacing:-0.043px;transform:scale(1.0,1.1);transform-origin:0 11.26px;">0000</span>
<span id="st8" class="t" style="left:948.3px;top:477.94px;font:13.3px/1 'Liberation Sans',sans-serif;color:#f4f4f4;letter-spacing:-0.043px;transform:scale(1.0,1.1);transform-origin:0 11.26px;">0001</span>
<span id="st9" class="t" style="left:1025.8px;top:477.94px;font:13.3px/1 'Liberation Sans',sans-serif;color:#f4f4f4;letter-spacing:-0.043px;transform:scale(1.0,1.1);transform-origin:0 11.26px;">0010</span>
<span id="st10" class="t" style="left:1102.0500000000002px;top:477.94px;font:13.3px/1 'Liberation Sans',sans-serif;color:#f4f4f4;letter-spacing:0.109px;transform:scale(1.0,1.1);transform-origin:0 11.26px;">0011</span>
<span id="st11" class="t" style="left:1179.5500000000002px;top:477.94px;font:13.3px/1 'Liberation Sans',sans-serif;color:#f4f4f4;letter-spacing:-0.043px;transform:scale(1.0,1.1);transform-origin:0 11.26px;">0100</span>
<span id="st12" class="t" style="left:1257.0500000000002px;top:477.94px;font:13.3px/1 'Liberation Sans',sans-serif;color:#f4f4f4;letter-spacing:-0.043px;transform:scale(1.0,1.1);transform-origin:0 11.26px;">0101</span>
<span id="st13" class="t" style="left:1333.3000000000002px;top:477.94px;font:13.3px/1 'Liberation Sans',sans-serif;color:#f4f4f4;letter-spacing:0.109px;transform:scale(1.0,1.1);transform-origin:0 11.26px;">0110</span>
<span id="st14" class="t" style="left:1410.8000000000002px;top:477.94px;font:13.3px/1 'Liberation Sans',sans-serif;color:#f4f4f4;letter-spacing:-0.043px;transform:scale(1.0,1.1);transform-origin:0 11.26px;">0000</span>
<span id="st15" class="t" style="left:1487.0500000000002px;top:477.94px;font:13.3px/1 'Liberation Sans',sans-serif;color:#f4f4f4;letter-spacing:-0.043px;transform:scale(1.0,1.1);transform-origin:0 11.26px;">0001</span>
<span id="st16" class="t" style="left:1564.5500000000002px;top:477.94px;font:13.3px/1 'Liberation Sans',sans-serif;color:#f4f4f4;letter-spacing:-0.043px;transform:scale(1.0,1.1);transform-origin:0 11.26px;">0010</span>
<span id="st17" class="t" style="left:1642.0500000000002px;top:477.94px;font:13.3px/1 'Liberation Sans',sans-serif;color:#f4f4f4;letter-spacing:0.109px;transform:scale(1.0,1.1);transform-origin:0 11.26px;">0011</span>
<span id="st18" class="t" style="left:1718.3000000000002px;top:477.94px;font:13.3px/1 'Liberation Sans',sans-serif;color:#f4f4f4;letter-spacing:-0.043px;transform:scale(1.0,1.1);transform-origin:0 11.26px;">0100</span>
<svg style="left:0;top:0" width="1787" height="836" viewBox="0 0 1787 836"><g shape-rendering="crispEdges"><rect x="326" y="242" width="146" height="20" fill="#000"/><rect x="326" y="327" width="200" height="20" fill="#000"/><rect x="323" y="809" width="1464" height="1" fill="#808080"/><rect x="353" y="785" width="2" height="5" fill="#00c800"/><rect x="384" y="785" width="2" height="5" fill="#00c800"/><rect x="415" y="785" width="2" height="5" fill="#00c800"/><rect x="446" y="785" width="2" height="5" fill="#00c800"/><rect x="507" y="785" width="2" height="5" fill="#00c800"/><rect x="538" y="785" width="2" height="5" fill="#00c800"/><rect x="569" y="785" width="2" height="5" fill="#00c800"/><rect x="600" y="785" width="2" height="5" fill="#00c800"/><rect x="661" y="785" width="2" height="5" fill="#00c800"/><rect x="692" y="785" width="2" height="5" fill="#00c800"/><rect x="723" y="785" width="2" height="5" fill="#00c800"/><rect x="754" y="785" width="2" height="5" fill="#00c800"/><rect x="815" y="785" width="2" height="5" fill="#00c800"/><rect x="846" y="785" width="2" height="5" fill="#00c800"/><rect x="877" y="785" width="2" height="5" fill="#00c800"/><rect x="908" y="785" width="2" height="5" fill="#00c800"/><rect x="969" y="785" width="2" height="5" fill="#00c800"/><rect x="1000" y="785" width="2" height="5" fill="#00c800"/><rect x="1031" y="785" width="2" height="5" fill="#00c800"/><rect x="1062" y="785" width="2" height="5" fill="#00c800"/><rect x="1123" y="785" width="2" height="5" fill="#00c800"/><rect x="1154" y="785" width="2" height="5" fill="#00c800"/><rect x="1185" y="785" width="2" height="5" fill="#00c800"/><rect x="1216" y="785" width="2" height="5" fill="#00c800"/><rect x="1277" y="785" width="2" height="5" fill="#00c800"/><rect x="1308" y="785" width="2" height="5" fill="#00c800"/><rect x="1339" y="785" width="2" height="5" fill="#00c800"/><rect x="1370" y="785" width="2" height="5" fill="#00c800"/><rect x="1431" y="785" width="2" height="5" fill="#00c800"/><rect x="1462" y="785" width="2" height="5" fill="#00c800"/><rect x="1493" y="785" width="2" height="5" fill="#00c800"/><rect x="1524" y="785" width="2" height="5" fill="#00c800"/><rect x="1585" y="785" width="2" height="5" fill="#00c800"/><rect x="1616" y="785" width="2" height="5" fill="#00c800"/><rect x="1647" y="785" width="2" height="5" fill="#00c800"/><rect x="1678" y="785" width="2" height="5" fill="#00c800"/><rect x="1739" y="785" width="2" height="5" fill="#00c800"/><rect x="1770" y="785" width="2" height="5" fill="#00c800"/><rect x="324.5" y="810.5" width="73" height="19" fill="none" stroke="#f0c400" stroke-width="1.2"/></g><g><rect x="399.25" y="237" width="1.2" height="541" fill="#8a8a8a"/><rect x="476.75" y="237" width="1.2" height="541" fill="#8a8a8a"/><rect x="553.0" y="237" width="1.2" height="541" fill="#8a8a8a"/><rect x="630.5" y="237" width="1.2" height="541" fill="#8a8a8a"/><rect x="706.75" y="237" width="1.2" height="541" fill="#8a8a8a"/><rect x="784.25" y="237" width="1.2" height="541" fill="#8a8a8a"/><rect x="861.75" y="237" width="1.2" height="541" fill="#8a8a8a"/><rect x="938.0" y="237" width="1.2" height="541" fill="#8a8a8a"/><rect x="1015.5" y="237" width="1.2" height="541" fill="#8a8a8a"/><rect x="1091.75" y="237" width="1.2" height="541" fill="#8a8a8a"/><rect x="1169.25" y="237" width="1.2" height="541" fill="#8a8a8a"/><rect x="1246.75" y="237" width="1.2" height="541" fill="#8a8a8a"/><rect x="1323.0" y="237" width="1.2" height="541" fill="#8a8a8a"/><rect x="1400.5" y="237" width="1.2" height="541" fill="#8a8a8a"/><rect x="1476.75" y="237" width="1.2" height="541" fill="#8a8a8a"/><rect x="1554.25" y="237" width="1.2" height="541" fill="#8a8a8a"/><rect x="1631.75" y="237" width="1.2" height="541" fill="#8a8a8a"/><rect x="1708.0" y="237" width="1.2" height="541" fill="#8a8a8a"/><rect x="1785.5" y="237" width="1.2" height="541" fill="#8a8a8a"/><rect x="324" y="263.5" width="1463" height="15.5" fill="#00ff00"/><rect x="328.77" y="263.2" width="1.6" height="13.7" fill="#001a00"/><rect x="334.97" y="263.2" width="1.6" height="13.7" fill="#001a00"/><rect x="341.17" y="263.2" width="1.6" height="13.7" fill="#001a00"/><rect x="348.72" y="264.2" width="1.6" height="15.0" fill="#001a00"/><rect x="348.62" y="262.2" width="1.8" height="1.6" fill="#009c00"/><rect x="354.92" y="264.2" width="1.6" height="15.0" fill="#001a00"/><rect x="354.82" y="262.2" width="1.8" height="1.6" fill="#009c00"/><rect x="361.12" y="264.2" width="1.6" height="15.0" fill="#001a00"/><rect x="361.02" y="262.2" width="1.8" height="1.6" fill="#009c00"/><rect x="368.67" y="263.2" width="1.6" height="13.7" fill="#001a00"/><rect x="374.87" y="263.2" width="1.6" height="13.7" fill="#001a00"/><rect x="381.07" y="263.2" width="1.6" height="13.7" fill="#001a00"/><rect x="388.62" y="264.2" width="1.6" height="15.0" fill="#001a00"/><rect x="388.52" y="262.2" width="1.8" height="1.6" fill="#009c00"/><rect x="394.82" y="264.2" width="1.6" height="15.0" fill="#001a00"/><rect x="394.72" y="262.2" width="1.8" height="1.6" fill="#009c00"/><rect x="401.02" y="264.2" width="1.6" height="15.0" fill="#001a00"/><rect x="400.92" y="262.2" width="1.8" height="1.6" fill="#009c00"/><rect x="408.57" y="263.2" width="1.6" height="13.7" fill="#001a00"/><rect x="414.77" y="263.2" width="1.6" height="13.7" fill="#001a00"/><rect x="420.97" y="263.2" width="1.6" height="13.7" fill="#001a00"/><rect x="428.52" y="264.2" width="1.6" height="15.0" fill="#001a00"/><rect x="428.42" y="262.2" width="1.8" height="1.6" fill="#009c00"/><rect x="434.72" y="264.2" width="1.6" height="15.0" fill="#001a00"/><rect x="434.62" y="262.2" width="1.8" height="1.6" fill="#009c00"/><rect x="440.92" y="264.2" width="1.6" height="15.0" fill="#001a00"/><rect x="440.82" y="262.2" width="1.8" height="1.6" fill="#009c00"/><rect x="448.47" y="263.2" width="1.6" height="13.7" fill="#001a00"/><rect x="454.67" y="263.2" width="1.6" height="13.7" fill="#001a00"/><rect x="460.87" y="263.2" width="1.6" height="13.7" fill="#001a00"/><rect x="468.42" y="264.2" width="1.6" height="15.0" fill="#001a00"/><rect x="468.32" y="262.2" width="1.8" height="1.6" fill="#009c00"/><rect x="474.62" y="264.2" width="1.6" height="15.0" fill="#001a00"/><rect x="474.52" y="262.2" width="1.8" height="1.6" fill="#009c00"/><rect x="480.82" y="264.2" width="1.6" height="15.0" fill="#001a00"/><rect x="480.72" y="262.2" width="1.8" height="1.6" fill="#009c00"/><rect x="488.37" y="263.2" width="1.6" height="13.7" fill="#001a00"/><rect x="494.57" y="263.2" width="1.6" height="13.7" fill="#001a00"/><rect x="500.77" y="263.2" width="1.6" height="13.7" fill="#001a00"/><rect x="508.32" y="264.2" width="1.6" height="15.0" fill="#001a00"/><rect x="508.22" y="262.2" width="1.8" height="1.6" fill="#009c00"/><rect x="514.52" y="264.2" width="1.6" height="15.0" fill="#001a00"/><rect x="514.42" y="262.2" width="1.8" height="1.6" fill="#009c00"/><rect x="520.72" y="264.2" width="1.6" height="15.0" fill="#001a00"/><rect x="520.62" y="262.2" width="1.8" height="1.6" fill="#009c00"/><rect x="528.27" y="263.2" width="1.6" height="13.7" fill="#001a00"/><rect x="534.47" y="263.2" width="1.6" height="13.7" fill="#001a00"/><rect x="540.67" y="263.2" width="1.6" height="13.7" fill="#001a00"/><rect x="548.22" y="264.2" width="1.6" height="15.0" fill="#001a00"/><rect x="548.12" y="262.2" width="1.8" height="1.6" fill="#009c00"/><rect x="554.42" y="264.2" width="1.6" height="15.0" fill="#001a00"/><rect x="554.32" y="262.2" width="1.8" height="1.6" fill="#009c00"/><rect x="560.62" y="264.2" width="1.6" height="15.0" fill="#001a00"/><rect x="560.52" y="262.2" width="1.8" height="1.6" fill="#009c00"/><rect x="568.17" y="263.2" width="1.6" height="13.7" fill="#001a00"/><rect x="574.37" y="263.2" width="1.6" height="13.7" fill="#001a00"/><rect x="580.57" y="263.2" width="1.6" height="13.7" fill="#001a00"/><rect x="588.12" y="264.2" width="1.6" height="15.0" fill="#001a00"/><rect x="588.02" y="262.2" width="1.8" height="1.6" fill="#009c00"/><rect x="594.32" y="264.2" width="1.6" height="15.0" fill="#001a00"/><rect x="594.22" y="262.2" width="1.8" height="1.6" fill="#009c00"/><rect x="600.52" y="264.2" width="1.6" height="15.0" fill="#001a00"/><rect x="600.42" y="262.2" width="1.8" height="1.6" fill="#009c00"/><rect x="608.07" y="263.2" width="1.6" height="13.7" fill="#001a00"/><rect x="614.27" y="263.2" width="1.6" height="13.7" fill="#001a00"/><rect x="620.47" y="263.2" width="1.6" height="13.7" fill="#001a00"/><rect x="628.02" y="264.2" width="1.6" height="15.0" fill="#001a00"/><rect x="627.92" y="262.2" width="1.8" height="1.6" fill="#009c00"/><rect x="634.22" y="264.2" width="1.6" height="15.0" fill="#001a00"/><rect x="634.12" y="262.2" width="1.8" height="1.6" fill="#009c00"/><rect x="640.42" y="264.2" width="1.6" height="15.0" fill="#001a00"/><rect x="640.32" y="262.2" width="1.8" height="1.6" fill="#009c00"/><rect x="647.97" y="263.2" width="1.6" height="13.7" fill="#001a00"/><rect x="654.17" y="263.2" width="1.6" height="13.7" fill="#001a00"/><rect x="660.37" y="263.2" width="1.6" height="13.7" fill="#001a00"/><rect x="667.92" y="264.2" width="1.6" height="15.0" fill="#001a00"/><rect x="667.82" y="262.2" width="1.8" height="1.6" fill="#009c00"/><rect x="674.12" y="264.2" width="1.6" height="15.0" fill="#001a00"/><rect x="674.02" y="262.2" width="1.8" height="1.6" fill="#009c00"/><rect x="680.32" y="264.2" width="1.6" height="15.0" fill="#001a00"/><rect x="680.22" y="262.2" width="1.8" height="1.6" fill="#009c00"/><rect x="687.87" y="263.2" width="1.6" height="13.7" fill="#001a00"/><rect x="694.07" y="263.2" width="1.6" height="13.7" fill="#001a00"/><rect x="700.27" y="263.2" width="1.6" height="13.7" fill="#001a00"/><rect x="707.82" y="264.2" width="1.6" height="15.0" fill="#001a00"/><rect x="707.72" y="262.2" width="1.8" height="1.6" fill="#009c00"/><rect x="714.02" y="264.2" width="1.6" height="15.0" fill="#001a00"/><rect x="713.92" y="262.2" width="1.8" height="1.6" fill="#009c00"/><rect x="720.22" y="264.2" width="1.6" height="15.0" fill="#001a00"/><rect x="720.12" y="262.2" width="1.8" height="1.6" fill="#009c00"/><rect x="727.77" y="263.2" width="1.6" height="13.7" fill="#001a00"/><rect x="733.97" y="263.2" width="1.6" height="13.7" fill="#001a00"/><rect x="740.17" y="263.2" width="1.6" height="13.7" fill="#001a00"/><rect x="747.72" y="264.2" width="1.6" height="15.0" fill="#001a00"/><rect x="747.62" y="262.2" width="1.8" height="1.6" fill="#009c00"/><rect x="753.92" y="264.2" width="1.6" height="15.0" fill="#001a00"/><rect x="753.82" y="262.2" width="1.8" height="1.6" fill="#009c00"/><rect x="760.12" y="264.2" width="1.6" height="15.0" fill="#001a00"/><rect x="760.02" y="262.2" width="1.8" height="1.6" fill="#009c00"/><rect x="767.67" y="263.2" width="1.6" height="13.7" fill="#001a00"/><rect x="773.87" y="263.2" width="1.6" height="13.7" fill="#001a00"/><rect x="780.07" y="263.2" width="1.6" height="13.7" fill="#001a00"/><rect x="787.62" y="264.2" width="1.6" height="15.0" fill="#001a00"/><rect x="787.52" y="262.2" width="1.8" height="1.6" fill="#009c00"/><rect x="793.82" y="264.2" width="1.6" height="15.0" fill="#001a00"/><rect x="793.72" y="262.2" width="1.8" height="1.6" fill="#009c00"/><rect x="800.02" y="264.2" width="1.6" height="15.0" fill="#001a00"/><rect x="799.92" y="262.2" width="1.8" height="1.6" fill="#009c00"/><rect x="807.57" y="263.2" width="1.6" height="13.7" fill="#001a00"/><rect x="813.77" y="263.2" width="1.6" height="13.7" fill="#001a00"/><rect x="819.97" y="263.2" width="1.6" height="13.7" fill="#001a00"/><rect x="827.52" y="264.2" width="1.6" height="15.0" fill="#001a00"/><rect x="827.42" y="262.2" width="1.8" height="1.6" fill="#009c00"/><rect x="833.72" y="264.2" width="1.6" height="15.0" fill="#001a00"/><rect x="833.62" y="262.2" width="1.8" height="1.6" fill="#009c00"/><rect x="839.92" y="264.2" width="1.6" height="15.0" fill="#001a00"/><rect x="839.82" y="262.2" width="1.8" height="1.6" fill="#009c00"/><rect x="847.47" y="263.2" width="1.6" height="13.7" fill="#001a00"/><rect x="853.67" y="263.2" width="1.6" height="13.7" fill="#001a00"/><rect x="859.87" y="263.2" width="1.6" height="13.7" fill="#001a00"/><rect x="867.42" y="264.2" width="1.6" height="15.0" fill="#001a00"/><rect x="867.32" y="262.2" width="1.8" height="1.6" fill="#009c00"/><rect x="873.62" y="264.2" width="1.6" height="15.0" fill="#001a00"/><rect x="873.52" y="262.2" width="1.8" height="1.6" fill="#009c00"/><rect x="879.82" y="264.2" width="1.6" height="15.0" fill="#001a00"/><rect x="879.72" y="262.2" width="1.8" height="1.6" fill="#009c00"/><rect x="887.37" y="263.2" width="1.6" height="13.7" fill="#001a00"/><rect x="893.57" y="263.2" width="1.6" height="13.7" fill="#001a00"/><rect x="899.77" y="263.2" width="1.6" height="13.7" fill="#001a00"/><rect x="907.32" y="264.2" width="1.6" height="15.0" fill="#001a00"/><rect x="907.22" y="262.2" width="1.8" height="1.6" fill="#009c00"/><rect x="913.52" y="264.2" width="1.6" height="15.0" fill="#001a00"/><rect x="913.42" y="262.2" width="1.8" height="1.6" fill="#009c00"/><rect x="919.72" y="264.2" width="1.6" height="15.0" fill="#001a00"/><rect x="919.62" y="262.2" width="1.8" height="1.6" fill="#009c00"/><rect x="927.27" y="263.2" width="1.6" height="13.7" fill="#001a00"/><rect x="933.47" y="263.2" width="1.6" height="13.7" fill="#001a00"/><rect x="939.67" y="263.2" width="1.6" height="13.7" fill="#001a00"/><rect x="947.22" y="264.2" width="1.6" height="15.0" fill="#001a00"/><rect x="947.12" y="262.2" width="1.8" height="1.6" fill="#009c00"/><rect x="953.42" y="264.2" width="1.6" height="15.0" fill="#001a00"/><rect x="953.32" y="262.2" width="1.8" height="1.6" fill="#009c00"/><rect x="959.62" y="264.2" width="1.6" height="15.0" fill="#001a00"/><rect x="959.52" y="262.2" width="1.8" height="1.6" fill="#009c00"/><rect x="967.17" y="263.2" width="1.6" height="13.7" fill="#001a00"/><rect x="973.37" y="263.2" width="1.6" height="13.7" fill="#001a00"/><rect x="979.57" y="263.2" width="1.6" height="13.7" fill="#001a00"/><rect x="987.12" y="264.2" width="1.6" height="15.0" fill="#001a00"/><rect x="987.02" y="262.2" width="1.8" height="1.6" fill="#009c00"/><rect x="993.32" y="264.2" width="1.6" height="15.0" fill="#001a00"/><rect x="993.22" y="262.2" width="1.8" height="1.6" fill="#009c00"/><rect x="999.52" y="264.2" width="1.6" height="15.0" fill="#001a00"/><rect x="999.42" y="262.2" width="1.8" height="1.6" fill="#009c00"/><rect x="1007.07" y="263.2" width="1.6" height="13.7" fill="#001a00"/><rect x="1013.27" y="263.2" width="1.6" height="13.7" fill="#001a00"/><rect x="1019.47" y="263.2" width="1.6" height="13.7" fill="#001a00"/><rect x="1027.02" y="264.2" width="1.6" height="15.0" fill="#001a00"/><rect x="1026.92" y="262.2" width="1.8" height="1.6" fill="#009c00"/><rect x="1033.22" y="264.2" width="1.6" height="15.0" fill="#001a00"/><rect x="1033.12" y="262.2" width="1.8" height="1.6" fill="#009c00"/><rect x="1039.42" y="264.2" width="1.6" height="15.0" fill="#001a00"/><rect x="1039.32" y="262.2" width="1.8" height="1.6" fill="#009c00"/><rect x="1046.97" y="263.2" width="1.6" height="13.7" fill="#001a00"/><rect x="1053.17" y="263.2" width="1.6" height="13.7" fill="#001a00"/><rect x="1059.37" y="263.2" width="1.6" height="13.7" fill="#001a00"/><rect x="1066.92" y="264.2" width="1.6" height="15.0" fill="#001a00"/><rect x="1066.82" y="262.2" width="1.8" height="1.6" fill="#009c00"/><rect x="1073.12" y="264.2" width="1.6" height="15.0" fill="#001a00"/><rect x="1073.02" y="262.2" width="1.8" height="1.6" fill="#009c00"/><rect x="1079.32" y="264.2" width="1.6" height="15.0" fill="#001a00"/><rect x="1079.22" y="262.2" width="1.8" height="1.6" fill="#009c00"/><rect x="1086.87" y="263.2" width="1.6" height="13.7" fill="#001a00"/><rect x="1093.07" y="263.2" width="1.6" height="13.7" fill="#001a00"/><rect x="1099.27" y="263.2" width="1.6" height="13.7" fill="#001a00"/><rect x="1106.82" y="264.2" width="1.6" height="15.0" fill="#001a00"/><rect x="1106.72" y="262.2" width="1.8" height="1.6" fill="#009c00"/><rect x="1113.02" y="264.2" width="1.6" height="15.0" fill="#001a00"/><rect x="1112.92" y="262.2" width="1.8" height="1.6" fill="#009c00"/><rect x="1119.22" y="264.2" width="1.6" height="15.0" fill="#001a00"/><rect x="1119.12" y="262.2" width="1.8" height="1.6" fill="#009c00"/><rect x="1126.77" y="263.2" width="1.6" height="13.7" fill="#001a00"/><rect x="1132.97" y="263.2" width="1.6" height="13.7" fill="#001a00"/><rect x="1139.17" y="263.2" width="1.6" height="13.7" fill="#001a00"/><rect x="1146.72" y="264.2" width="1.6" height="15.0" fill="#001a00"/><rect x="1146.62" y="262.2" width="1.8" height="1.6" fill="#009c00"/><rect x="1152.92" y="264.2" width="1.6" height="15.0" fill="#001a00"/><rect x="1152.82" y="262.2" width="1.8" height="1.6" fill="#009c00"/><rect x="1159.12" y="264.2" width="1.6" height="15.0" fill="#001a00"/><rect x="1159.02" y="262.2" width="1.8" height="1.6" fill="#009c00"/><rect x="1166.67" y="263.2" width="1.6" height="13.7" fill="#001a00"/><rect x="1172.87" y="263.2" width="1.6" height="13.7" fill="#001a00"/><rect x="1179.07" y="263.2" width="1.6" height="13.7" fill="#001a00"/><rect x="1186.62" y="264.2" width="1.6" height="15.0" fill="#001a00"/><rect x="1186.52" y="262.2" width="1.8" height="1.6" fill="#009c00"/><rect x="1192.82" y="264.2" width="1.6" height="15.0" fill="#001a00"/><rect x="1192.72" y="262.2" width="1.8" height="1.6" fill="#009c00"/><rect x="1199.02" y="264.2" width="1.6" height="15.0" fill="#001a00"/><rect x="1198.92" y="262.2" width="1.8" height="1.6" fill="#009c00"/><rect x="1206.57" y="263.2" width="1.6" height="13.7" fill="#001a00"/><rect x="1212.77" y="263.2" width="1.6" height="13.7" fill="#001a00"/><rect x="1218.97" y="263.2" width="1.6" height="13.7" fill="#001a00"/><rect x="1226.52" y="264.2" width="1.6" height="15.0" fill="#001a00"/><rect x="1226.42" y="262.2" width="1.8" height="1.6" fill="#009c00"/><rect x="1232.72" y="264.2" width="1.6" height="15.0" fill="#001a00"/><rect x="1232.62" y="262.2" width="1.8" height="1.6" fill="#009c00"/><rect x="1238.92" y="264.2" width="1.6" height="15.0" fill="#001a00"/><rect x="1238.82" y="262.2" width="1.8" height="1.6" fill="#009c00"/><rect x="1246.47" y="263.2" width="1.6" height="13.7" fill="#001a00"/><rect x="1252.67" y="263.2" width="1.6" height="13.7" fill="#001a00"/><rect x="1258.87" y="263.2" width="1.6" height="13.7" fill="#001a00"/><rect x="1266.42" y="264.2" width="1.6" height="15.0" fill="#001a00"/><rect x="1266.32" y="262.2" width="1.8" height="1.6" fill="#009c00"/><rect x="1272.62" y="264.2" width="1.6" height="15.0" fill="#001a00"/><rect x="1272.52" y="262.2" width="1.8" height="1.6" fill="#009c00"/><rect x="1278.82" y="264.2" width="1.6" height="15.0" fill="#001a00"/><rect x="1278.72" y="262.2" width="1.8" height="1.6" fill="#009c00"/><rect x="1286.37" y="263.2" width="1.6" height="13.7" fill="#001a00"/><rect x="1292.57" y="263.2" width="1.6" height="13.7" fill="#001a00"/><rect x="1298.77" y="263.2" width="1.6" height="13.7" fill="#001a00"/><rect x="1306.32" y="264.2" width="1.6" height="15.0" fill="#001a00"/><rect x="1306.22" y="262.2" width="1.8" height="1.6" fill="#009c00"/><rect x="1312.52" y="264.2" width="1.6" height="15.0" fill="#001a00"/><rect x="1312.42" y="262.2" width="1.8" height="1.6" fill="#009c00"/><rect x="1318.72" y="264.2" width="1.6" height="15.0" fill="#001a00"/><rect x="1318.62" y="262.2" width="1.8" height="1.6" fill="#009c00"/><rect x="1326.27" y="263.2" width="1.6" height="13.7" fill="#001a00"/><rect x="1332.47" y="263.2" width="1.6" height="13.7" fill="#001a00"/><rect x="1338.67" y="263.2" width="1.6" height="13.7" fill="#001a00"/><rect x="1346.22" y="264.2" width="1.6" height="15.0" fill="#001a00"/><rect x="1346.12" y="262.2" width="1.8" height="1.6" fill="#009c00"/><rect x="1352.42" y="264.2" width="1.6" height="15.0" fill="#001a00"/><rect x="1352.32" y="262.2" width="1.8" height="1.6" fill="#009c00"/><rect x="1358.62" y="264.2" width="1.6" height="15.0" fill="#001a00"/><rect x="1358.52" y="262.2" width="1.8" height="1.6" fill="#009c00"/><rect x="1366.17" y="263.2" width="1.6" height="13.7" fill="#001a00"/><rect x="1372.37" y="263.2" width="1.6" height="13.7" fill="#001a00"/><rect x="1378.57" y="263.2" width="1.6" height="13.7" fill="#001a00"/><rect x="1386.12" y="264.2" width="1.6" height="15.0" fill="#001a00"/><rect x="1386.02" y="262.2" width="1.8" height="1.6" fill="#009c00"/><rect x="1392.32" y="264.2" width="1.6" height="15.0" fill="#001a00"/><rect x="1392.22" y="262.2" width="1.8" height="1.6" fill="#009c00"/><rect x="1398.52" y="264.2" width="1.6" height="15.0" fill="#001a00"/><rect x="1398.42" y="262.2" width="1.8" height="1.6" fill="#009c00"/><rect x="1406.07" y="263.2" width="1.6" height="13.7" fill="#001a00"/><rect x="1412.27" y="263.2" width="1.6" height="13.7" fill="#001a00"/><rect x="1418.47" y="263.2" width="1.6" height="13.7" fill="#001a00"/><rect x="1426.02" y="264.2" width="1.6" height="15.0" fill="#001a00"/><rect x="1425.92" y="262.2" width="1.8" height="1.6" fill="#009c00"/><rect x="1432.22" y="264.2" width="1.6" height="15.0" fill="#001a00"/><rect x="1432.12" y="262.2" width="1.8" height="1.6" fill="#009c00"/><rect x="1438.42" y="264.2" width="1.6" height="15.0" fill="#001a00"/><rect x="1438.32" y="262.2" width="1.8" height="1.6" fill="#009c00"/><rect x="1445.97" y="263.2" width="1.6" height="13.7" fill="#001a00"/><rect x="1452.17" y="263.2" width="1.6" height="13.7" fill="#001a00"/><rect x="1458.37" y="263.2" width="1.6" height="13.7" fill="#001a00"/><rect x="1465.92" y="264.2" width="1.6" height="15.0" fill="#001a00"/><rect x="1465.82" y="262.2" width="1.8" height="1.6" fill="#009c00"/><rect x="1472.12" y="264.2" width="1.6" height="15.0" fill="#001a00"/><rect x="1472.02" y="262.2" width="1.8" height="1.6" fill="#009c00"/><rect x="1478.32" y="264.2" width="1.6" height="15.0" fill="#001a00"/><rect x="1478.22" y="262.2" width="1.8" height="1.6" fill="#009c00"/><rect x="1485.87" y="263.2" width="1.6" height="13.7" fill="#001a00"/><rect x="1492.07" y="263.2" width="1.6" height="13.7" fill="#001a00"/><rect x="1498.27" y="263.2" width="1.6" height="13.7" fill="#001a00"/><rect x="1505.82" y="264.2" width="1.6" height="15.0" fill="#001a00"/><rect x="1505.72" y="262.2" width="1.8" height="1.6" fill="#009c00"/><rect x="1512.02" y="264.2" width="1.6" height="15.0" fill="#001a00"/><rect x="1511.92" y="262.2" width="1.8" height="1.6" fill="#009c00"/><rect x="1518.22" y="264.2" width="1.6" height="15.0" fill="#001a00"/><rect x="1518.12" y="262.2" width="1.8" height="1.6" fill="#009c00"/><rect x="1525.77" y="263.2" width="1.6" height="13.7" fill="#001a00"/><rect x="1531.97" y="263.2" width="1.6" height="13.7" fill="#001a00"/><rect x="1538.17" y="263.2" width="1.6" height="13.7" fill="#001a00"/><rect x="1545.72" y="264.2" width="1.6" height="15.0" fill="#001a00"/><rect x="1545.62" y="262.2" width="1.8" height="1.6" fill="#009c00"/><rect x="1551.92" y="264.2" width="1.6" height="15.0" fill="#001a00"/><rect x="1551.82" y="262.2" width="1.8" height="1.6" fill="#009c00"/><rect x="1558.12" y="264.2" width="1.6" height="15.0" fill="#001a00"/><rect x="1558.02" y="262.2" width="1.8" height="1.6" fill="#009c00"/><rect x="1565.67" y="263.2" width="1.6" height="13.7" fill="#001a00"/><rect x="1571.87" y="263.2" width="1.6" height="13.7" fill="#001a00"/><rect x="1578.07" y="263.2" width="1.6" height="13.7" fill="#001a00"/><rect x="1585.62" y="264.2" width="1.6" height="15.0" fill="#001a00"/><rect x="1585.52" y="262.2" width="1.8" height="1.6" fill="#009c00"/><rect x="1591.82" y="264.2" width="1.6" height="15.0" fill="#001a00"/><rect x="1591.72" y="262.2" width="1.8" height="1.6" fill="#009c00"/><rect x="1598.02" y="264.2" width="1.6" height="15.0" fill="#001a00"/><rect x="1597.92" y="262.2" width="1.8" height="1.6" fill="#009c00"/><rect x="1605.57" y="263.2" width="1.6" height="13.7" fill="#001a00"/><rect x="1611.77" y="263.2" width="1.6" height="13.7" fill="#001a00"/><rect x="1617.97" y="263.2" width="1.6" height="13.7" fill="#001a00"/><rect x="1625.52" y="264.2" width="1.6" height="15.0" fill="#001a00"/><rect x="1625.42" y="262.2" width="1.8" height="1.6" fill="#009c00"/><rect x="1631.72" y="264.2" width="1.6" height="15.0" fill="#001a00"/><rect x="1631.62" y="262.2" width="1.8" height="1.6" fill="#009c00"/><rect x="1637.92" y="264.2" width="1.6" height="15.0" fill="#001a00"/><rect x="1637.82" y="262.2" width="1.8" height="1.6" fill="#009c00"/><rect x="1645.47" y="263.2" width="1.6" height="13.7" fill="#001a00"/><rect x="1651.67" y="263.2" width="1.6" height="13.7" fill="#001a00"/><rect x="1657.87" y="263.2" width="1.6" height="13.7" fill="#001a00"/><rect x="1665.42" y="264.2" width="1.6" height="15.0" fill="#001a00"/><rect x="1665.32" y="262.2" width="1.8" height="1.6" fill="#009c00"/><rect x="1671.62" y="264.2" width="1.6" height="15.0" fill="#001a00"/><rect x="1671.52" y="262.2" width="1.8" height="1.6" fill="#009c00"/><rect x="1677.82" y="264.2" width="1.6" height="15.0" fill="#001a00"/><rect x="1677.72" y="262.2" width="1.8" height="1.6" fill="#009c00"/><rect x="1685.37" y="263.2" width="1.6" height="13.7" fill="#001a00"/><rect x="1691.57" y="263.2" width="1.6" height="13.7" fill="#001a00"/><rect x="1697.77" y="263.2" width="1.6" height="13.7" fill="#001a00"/><rect x="1705.32" y="264.2" width="1.6" height="15.0" fill="#001a00"/><rect x="1705.22" y="262.2" width="1.8" height="1.6" fill="#009c00"/><rect x="1711.52" y="264.2" width="1.6" height="15.0" fill="#001a00"/><rect x="1711.42" y="262.2" width="1.8" height="1.6" fill="#009c00"/><rect x="1717.72" y="264.2" width="1.6" height="15.0" fill="#001a00"/><rect x="1717.62" y="262.2" width="1.8" height="1.6" fill="#009c00"/><rect x="1725.27" y="263.2" width="1.6" height="13.7" fill="#001a00"/><rect x="1731.47" y="263.2" width="1.6" height="13.7" fill="#001a00"/><rect x="1737.67" y="263.2" width="1.6" height="13.7" fill="#001a00"/><rect x="1745.22" y="264.2" width="1.6" height="15.0" fill="#001a00"/><rect x="1745.12" y="262.2" width="1.8" height="1.6" fill="#009c00"/><rect x="1751.42" y="264.2" width="1.6" height="15.0" fill="#001a00"/><rect x="1751.32" y="262.2" width="1.8" height="1.6" fill="#009c00"/><rect x="1757.62" y="264.2" width="1.6" height="15.0" fill="#001a00"/><rect x="1757.52" y="262.2" width="1.8" height="1.6" fill="#009c00"/><rect x="1765.17" y="263.2" width="1.6" height="13.7" fill="#001a00"/><rect x="1771.37" y="263.2" width="1.6" height="13.7" fill="#001a00"/><rect x="1777.57" y="263.2" width="1.6" height="13.7" fill="#001a00"/><rect x="1785.12" y="264.2" width="1.6" height="15.0" fill="#001a00"/><rect x="1785.02" y="262.2" width="1.8" height="1.6" fill="#009c00"/><rect x="324" y="369.5" width="1463" height="15.5" fill="#00ff00"/><rect x="328.77" y="369.2" width="1.6" height="13.7" fill="#001a00"/><rect x="334.97" y="369.2" width="1.6" height="13.7" fill="#001a00"/><rect x="341.17" y="369.2" width="1.6" height="13.7" fill="#001a00"/><rect x="348.72" y="370.2" width="1.6" height="15.0" fill="#001a00"/><rect x="348.62" y="368.2" width="1.8" height="1.6" fill="#009c00"/><rect x="354.92" y="370.2" width="1.6" height="15.0" fill="#001a00"/><rect x="354.82" y="368.2" width="1.8" height="1.6" fill="#009c00"/><rect x="361.12" y="370.2" width="1.6" height="15.0" fill="#001a00"/><rect x="361.02" y="368.2" width="1.8" height="1.6" fill="#009c00"/><rect x="368.67" y="369.2" width="1.6" height="13.7" fill="#001a00"/><rect x="374.87" y="369.2" width="1.6" height="13.7" fill="#001a00"/><rect x="381.07" y="369.2" width="1.6" height="13.7" fill="#001a00"/><rect x="388.62" y="370.2" width="1.6" height="15.0" fill="#001a00"/><rect x="388.52" y="368.2" width="1.8" height="1.6" fill="#009c00"/><rect x="394.82" y="370.2" width="1.6" height="15.0" fill="#001a00"/><rect x="394.72" y="368.2" width="1.8" height="1.6" fill="#009c00"/><rect x="401.02" y="370.2" width="1.6" height="15.0" fill="#001a00"/><rect x="400.92" y="368.2" width="1.8" height="1.6" fill="#009c00"/><rect x="408.57" y="369.2" width="1.6" height="13.7" fill="#001a00"/><rect x="414.77" y="369.2" width="1.6" height="13.7" fill="#001a00"/><rect x="420.97" y="369.2" width="1.6" height="13.7" fill="#001a00"/><rect x="428.52" y="370.2" width="1.6" height="15.0" fill="#001a00"/><rect x="428.42" y="368.2" width="1.8" height="1.6" fill="#009c00"/><rect x="434.72" y="370.2" width="1.6" height="15.0" fill="#001a00"/><rect x="434.62" y="368.2" width="1.8" height="1.6" fill="#009c00"/><rect x="440.92" y="370.2" width="1.6" height="15.0" fill="#001a00"/><rect x="440.82" y="368.2" width="1.8" height="1.6" fill="#009c00"/><rect x="448.47" y="369.2" width="1.6" height="13.7" fill="#001a00"/><rect x="454.67" y="369.2" width="1.6" height="13.7" fill="#001a00"/><rect x="460.87" y="369.2" width="1.6" height="13.7" fill="#001a00"/><rect x="468.42" y="370.2" width="1.6" height="15.0" fill="#001a00"/><rect x="468.32" y="368.2" width="1.8" height="1.6" fill="#009c00"/><rect x="474.62" y="370.2" width="1.6" height="15.0" fill="#001a00"/><rect x="474.52" y="368.2" width="1.8" height="1.6" fill="#009c00"/><rect x="480.82" y="370.2" width="1.6" height="15.0" fill="#001a00"/><rect x="480.72" y="368.2" width="1.8" height="1.6" fill="#009c00"/><rect x="488.37" y="369.2" width="1.6" height="13.7" fill="#001a00"/><rect x="494.57" y="369.2" width="1.6" height="13.7" fill="#001a00"/><rect x="500.77" y="369.2" width="1.6" height="13.7" fill="#001a00"/><rect x="508.32" y="370.2" width="1.6" height="15.0" fill="#001a00"/><rect x="508.22" y="368.2" width="1.8" height="1.6" fill="#009c00"/><rect x="514.52" y="370.2" width="1.6" height="15.0" fill="#001a00"/><rect x="514.42" y="368.2" width="1.8" height="1.6" fill="#009c00"/><rect x="520.72" y="370.2" width="1.6" height="15.0" fill="#001a00"/><rect x="520.62" y="368.2" width="1.8" height="1.6" fill="#009c00"/><rect x="528.27" y="369.2" width="1.6" height="13.7" fill="#001a00"/><rect x="534.47" y="369.2" width="1.6" height="13.7" fill="#001a00"/><rect x="540.67" y="369.2" width="1.6" height="13.7" fill="#001a00"/><rect x="548.22" y="370.2" width="1.6" height="15.0" fill="#001a00"/><rect x="548.12" y="368.2" width="1.8" height="1.6" fill="#009c00"/><rect x="554.42" y="370.2" width="1.6" height="15.0" fill="#001a00"/><rect x="554.32" y="368.2" width="1.8" height="1.6" fill="#009c00"/><rect x="560.62" y="370.2" width="1.6" height="15.0" fill="#001a00"/><rect x="560.52" y="368.2" width="1.8" height="1.6" fill="#009c00"/><rect x="568.17" y="369.2" width="1.6" height="13.7" fill="#001a00"/><rect x="574.37" y="369.2" width="1.6" height="13.7" fill="#001a00"/><rect x="580.57" y="369.2" width="1.6" height="13.7" fill="#001a00"/><rect x="588.12" y="370.2" width="1.6" height="15.0" fill="#001a00"/><rect x="588.02" y="368.2" width="1.8" height="1.6" fill="#009c00"/><rect x="594.32" y="370.2" width="1.6" height="15.0" fill="#001a00"/><rect x="594.22" y="368.2" width="1.8" height="1.6" fill="#009c00"/><rect x="600.52" y="370.2" width="1.6" height="15.0" fill="#001a00"/><rect x="600.42" y="368.2" width="1.8" height="1.6" fill="#009c00"/><rect x="608.07" y="369.2" width="1.6" height="13.7" fill="#001a00"/><rect x="614.27" y="369.2" width="1.6" height="13.7" fill="#001a00"/><rect x="620.47" y="369.2" width="1.6" height="13.7" fill="#001a00"/><rect x="628.02" y="370.2" width="1.6" height="15.0" fill="#001a00"/><rect x="627.92" y="368.2" width="1.8" height="1.6" fill="#009c00"/><rect x="634.22" y="370.2" width="1.6" height="15.0" fill="#001a00"/><rect x="634.12" y="368.2" width="1.8" height="1.6" fill="#009c00"/><rect x="640.42" y="370.2" width="1.6" height="15.0" fill="#001a00"/><rect x="640.32" y="368.2" width="1.8" height="1.6" fill="#009c00"/><rect x="647.97" y="369.2" width="1.6" height="13.7" fill="#001a00"/><rect x="654.17" y="369.2" width="1.6" height="13.7" fill="#001a00"/><rect x="660.37" y="369.2" width="1.6" height="13.7" fill="#001a00"/><rect x="667.92" y="370.2" width="1.6" height="15.0" fill="#001a00"/><rect x="667.82" y="368.2" width="1.8" height="1.6" fill="#009c00"/><rect x="674.12" y="370.2" width="1.6" height="15.0" fill="#001a00"/><rect x="674.02" y="368.2" width="1.8" height="1.6" fill="#009c00"/><rect x="680.32" y="370.2" width="1.6" height="15.0" fill="#001a00"/><rect x="680.22" y="368.2" width="1.8" height="1.6" fill="#009c00"/><rect x="687.87" y="369.2" width="1.6" height="13.7" fill="#001a00"/><rect x="694.07" y="369.2" width="1.6" height="13.7" fill="#001a00"/><rect x="700.27" y="369.2" width="1.6" height="13.7" fill="#001a00"/><rect x="707.82" y="370.2" width="1.6" height="15.0" fill="#001a00"/><rect x="707.72" y="368.2" width="1.8" height="1.6" fill="#009c00"/><rect x="714.02" y="370.2" width="1.6" height="15.0" fill="#001a00"/><rect x="713.92" y="368.2" width="1.8" height="1.6" fill="#009c00"/><rect x="720.22" y="370.2" width="1.6" height="15.0" fill="#001a00"/><rect x="720.12" y="368.2" width="1.8" height="1.6" fill="#009c00"/><rect x="727.77" y="369.2" width="1.6" height="13.7" fill="#001a00"/><rect x="733.97" y="369.2" width="1.6" height="13.7" fill="#001a00"/><rect x="740.17" y="369.2" width="1.6" height="13.7" fill="#001a00"/><rect x="747.72" y="370.2" width="1.6" height="15.0" fill="#001a00"/><rect x="747.62" y="368.2" width="1.8" height="1.6" fill="#009c00"/><rect x="753.92" y="370.2" width="1.6" height="15.0" fill="#001a00"/><rect x="753.82" y="368.2" width="1.8" height="1.6" fill="#009c00"/><rect x="760.12" y="370.2" width="1.6" height="15.0" fill="#001a00"/><rect x="760.02" y="368.2" width="1.8" height="1.6" fill="#009c00"/><rect x="767.67" y="369.2" width="1.6" height="13.7" fill="#001a00"/><rect x="773.87" y="369.2" width="1.6" height="13.7" fill="#001a00"/><rect x="780.07" y="369.2" width="1.6" height="13.7" fill="#001a00"/><rect x="787.62" y="370.2" width="1.6" height="15.0" fill="#001a00"/><rect x="787.52" y="368.2" width="1.8" height="1.6" fill="#009c00"/><rect x="793.82" y="370.2" width="1.6" height="15.0" fill="#001a00"/><rect x="793.72" y="368.2" width="1.8" height="1.6" fill="#009c00"/><rect x="800.02" y="370.2" width="1.6" height="15.0" fill="#001a00"/><rect x="799.92" y="368.2" width="1.8" height="1.6" fill="#009c00"/><rect x="807.57" y="369.2" width="1.6" height="13.7" fill="#001a00"/><rect x="813.77" y="369.2" width="1.6" height="13.7" fill="#001a00"/><rect x="819.97" y="369.2" width="1.6" height="13.7" fill="#001a00"/><rect x="827.52" y="370.2" width="1.6" height="15.0" fill="#001a00"/><rect x="827.42" y="368.2" width="1.8" height="1.6" fill="#009c00"/><rect x="833.72" y="370.2" width="1.6" height="15.0" fill="#001a00"/><rect x="833.62" y="368.2" width="1.8" height="1.6" fill="#009c00"/><rect x="839.92" y="370.2" width="1.6" height="15.0" fill="#001a00"/><rect x="839.82" y="368.2" width="1.8" height="1.6" fill="#009c00"/><rect x="847.47" y="369.2" width="1.6" height="13.7" fill="#001a00"/><rect x="853.67" y="369.2" width="1.6" height="13.7" fill="#001a00"/><rect x="859.87" y="369.2" width="1.6" height="13.7" fill="#001a00"/><rect x="867.42" y="370.2" width="1.6" height="15.0" fill="#001a00"/><rect x="867.32" y="368.2" width="1.8" height="1.6" fill="#009c00"/><rect x="873.62" y="370.2" width="1.6" height="15.0" fill="#001a00"/><rect x="873.52" y="368.2" width="1.8" height="1.6" fill="#009c00"/><rect x="879.82" y="370.2" width="1.6" height="15.0" fill="#001a00"/><rect x="879.72" y="368.2" width="1.8" height="1.6" fill="#009c00"/><rect x="887.37" y="369.2" width="1.6" height="13.7" fill="#001a00"/><rect x="893.57" y="369.2" width="1.6" height="13.7" fill="#001a00"/><rect x="899.77" y="369.2" width="1.6" height="13.7" fill="#001a00"/><rect x="907.32" y="370.2" width="1.6" height="15.0" fill="#001a00"/><rect x="907.22" y="368.2" width="1.8" height="1.6" fill="#009c00"/><rect x="913.52" y="370.2" width="1.6" height="15.0" fill="#001a00"/><rect x="913.42" y="368.2" width="1.8" height="1.6" fill="#009c00"/><rect x="919.72" y="370.2" width="1.6" height="15.0" fill="#001a00"/><rect x="919.62" y="368.2" width="1.8" height="1.6" fill="#009c00"/><rect x="927.27" y="369.2" width="1.6" height="13.7" fill="#001a00"/><rect x="933.47" y="369.2" width="1.6" height="13.7" fill="#001a00"/><rect x="939.67" y="369.2" width="1.6" height="13.7" fill="#001a00"/><rect x="947.22" y="370.2" width="1.6" height="15.0" fill="#001a00"/><rect x="947.12" y="368.2" width="1.8" height="1.6" fill="#009c00"/><rect x="953.42" y="370.2" width="1.6" height="15.0" fill="#001a00"/><rect x="953.32" y="368.2" width="1.8" height="1.6" fill="#009c00"/><rect x="959.62" y="370.2" width="1.6" height="15.0" fill="#001a00"/><rect x="959.52" y="368.2" width="1.8" height="1.6" fill="#009c00"/><rect x="967.17" y="369.2" width="1.6" height="13.7" fill="#001a00"/><rect x="973.37" y="369.2" width="1.6" height="13.7" fill="#001a00"/><rect x="979.57" y="369.2" width="1.6" height="13.7" fill="#001a00"/><rect x="987.12" y="370.2" width="1.6" height="15.0" fill="#001a00"/><rect x="987.02" y="368.2" width="1.8" height="1.6" fill="#009c00"/><rect x="993.32" y="370.2" width="1.6" height="15.0" fill="#001a00"/><rect x="993.22" y="368.2" width="1.8" height="1.6" fill="#009c00"/><rect x="999.52" y="370.2" width="1.6" height="15.0" fill="#001a00"/><rect x="999.42" y="368.2" width="1.8" height="1.6" fill="#009c00"/><rect x="1007.07" y="369.2" width="1.6" height="13.7" fill="#001a00"/><rect x="1013.27" y="369.2" width="1.6" height="13.7" fill="#001a00"/><rect x="1019.47" y="369.2" width="1.6" height="13.7" fill="#001a00"/><rect x="1027.02" y="370.2" width="1.6" height="15.0" fill="#001a00"/><rect x="1026.92" y="368.2" width="1.8" height="1.6" fill="#009c00"/><rect x="1033.22" y="370.2" width="1.6" height="15.0" fill="#001a00"/><rect x="1033.12" y="368.2" width="1.8" height="1.6" fill="#009c00"/><rect x="1039.42" y="370.2" width="1.6" height="15.0" fill="#001a00"/><rect x="1039.32" y="368.2" width="1.8" height="1.6" fill="#009c00"/><rect x="1046.97" y="369.2" width="1.6" height="13.7" fill="#001a00"/><rect x="1053.17" y="369.2" width="1.6" height="13.7" fill="#001a00"/><rect x="1059.37" y="369.2" width="1.6" height="13.7" fill="#001a00"/><rect x="1066.92" y="370.2" width="1.6" height="15.0" fill="#001a00"/><rect x="1066.82" y="368.2" width="1.8" height="1.6" fill="#009c00"/><rect x="1073.12" y="370.2" width="1.6" height="15.0" fill="#001a00"/><rect x="1073.02" y="368.2" width="1.8" height="1.6" fill="#009c00"/><rect x="1079.32" y="370.2" width="1.6" height="15.0" fill="#001a00"/><rect x="1079.22" y="368.2" width="1.8" height="1.6" fill="#009c00"/><rect x="1086.87" y="369.2" width="1.6" height="13.7" fill="#001a00"/><rect x="1093.07" y="369.2" width="1.6" height="13.7" fill="#001a00"/><rect x="1099.27" y="369.2" width="1.6" height="13.7" fill="#001a00"/><rect x="1106.82" y="370.2" width="1.6" height="15.0" fill="#001a00"/><rect x="1106.72" y="368.2" width="1.8" height="1.6" fill="#009c00"/><rect x="1113.02" y="370.2" width="1.6" height="15.0" fill="#001a00"/><rect x="1112.92" y="368.2" width="1.8" height="1.6" fill="#009c00"/><rect x="1119.22" y="370.2" width="1.6" height="15.0" fill="#001a00"/><rect x="1119.12" y="368.2" width="1.8" height="1.6" fill="#009c00"/><rect x="1126.77" y="369.2" width="1.6" height="13.7" fill="#001a00"/><rect x="1132.97" y="369.2" width="1.6" height="13.7" fill="#001a00"/><rect x="1139.17" y="369.2" width="1.6" height="13.7" fill="#001a00"/><rect x="1146.72" y="370.2" width="1.6" height="15.0" fill="#001a00"/><rect x="1146.62" y="368.2" width="1.8" height="1.6" fill="#009c00"/><rect x="1152.92" y="370.2" width="1.6" height="15.0" fill="#001a00"/><rect x="1152.82" y="368.2" width="1.8" height="1.6" fill="#009c00"/><rect x="1159.12" y="370.2" width="1.6" height="15.0" fill="#001a00"/><rect x="1159.02" y="368.2" width="1.8" height="1.6" fill="#009c00"/><rect x="1166.67" y="369.2" width="1.6" height="13.7" fill="#001a00"/><rect x="1172.87" y="369.2" width="1.6" height="13.7" fill="#001a00"/><rect x="1179.07" y="369.2" width="1.6" height="13.7" fill="#001a00"/><rect x="1186.62" y="370.2" width="1.6" height="15.0" fill="#001a00"/><rect x="1186.52" y="368.2" width="1.8" height="1.6" fill="#009c00"/><rect x="1192.82" y="370.2" width="1.6" height="15.0" fill="#001a00"/><rect x="1192.72" y="368.2" width="1.8" height="1.6" fill="#009c00"/><rect x="1199.02" y="370.2" width="1.6" height="15.0" fill="#001a00"/><rect x="1198.92" y="368.2" width="1.8" height="1.6" fill="#009c00"/><rect x="1206.57" y="369.2" width="1.6" height="13.7" fill="#001a00"/><rect x="1212.77" y="369.2" width="1.6" height="13.7" fill="#001a00"/><rect x="1218.97" y="369.2" width="1.6" height="13.7" fill="#001a00"/><rect x="1226.52" y="370.2" width="1.6" height="15.0" fill="#001a00"/><rect x="1226.42" y="368.2" width="1.8" height="1.6" fill="#009c00"/><rect x="1232.72" y="370.2" width="1.6" height="15.0" fill="#001a00"/><rect x="1232.62" y="368.2" width="1.8" height="1.6" fill="#009c00"/><rect x="1238.92" y="370.2" width="1.6" height="15.0" fill="#001a00"/><rect x="1238.82" y="368.2" width="1.8" height="1.6" fill="#009c00"/><rect x="1246.47" y="369.2" width="1.6" height="13.7" fill="#001a00"/><rect x="1252.67" y="369.2" width="1.6" height="13.7" fill="#001a00"/><rect x="1258.87" y="369.2" width="1.6" height="13.7" fill="#001a00"/><rect x="1266.42" y="370.2" width="1.6" height="15.0" fill="#001a00"/><rect x="1266.32" y="368.2" width="1.8" height="1.6" fill="#009c00"/><rect x="1272.62" y="370.2" width="1.6" height="15.0" fill="#001a00"/><rect x="1272.52" y="368.2" width="1.8" height="1.6" fill="#009c00"/><rect x="1278.82" y="370.2" width="1.6" height="15.0" fill="#001a00"/><rect x="1278.72" y="368.2" width="1.8" height="1.6" fill="#009c00"/><rect x="1286.37" y="369.2" width="1.6" height="13.7" fill="#001a00"/><rect x="1292.57" y="369.2" width="1.6" height="13.7" fill="#001a00"/><rect x="1298.77" y="369.2" width="1.6" height="13.7" fill="#001a00"/><rect x="1306.32" y="370.2" width="1.6" height="15.0" fill="#001a00"/><rect x="1306.22" y="368.2" width="1.8" height="1.6" fill="#009c00"/><rect x="1312.52" y="370.2" width="1.6" height="15.0" fill="#001a00"/><rect x="1312.42" y="368.2" width="1.8" height="1.6" fill="#009c00"/><rect x="1318.72" y="370.2" width="1.6" height="15.0" fill="#001a00"/><rect x="1318.62" y="368.2" width="1.8" height="1.6" fill="#009c00"/><rect x="1326.27" y="369.2" width="1.6" height="13.7" fill="#001a00"/><rect x="1332.47" y="369.2" width="1.6" height="13.7" fill="#001a00"/><rect x="1338.67" y="369.2" width="1.6" height="13.7" fill="#001a00"/><rect x="1346.22" y="370.2" width="1.6" height="15.0" fill="#001a00"/><rect x="1346.12" y="368.2" width="1.8" height="1.6" fill="#009c00"/><rect x="1352.42" y="370.2" width="1.6" height="15.0" fill="#001a00"/><rect x="1352.32" y="368.2" width="1.8" height="1.6" fill="#009c00"/><rect x="1358.62" y="370.2" width="1.6" height="15.0" fill="#001a00"/><rect x="1358.52" y="368.2" width="1.8" height="1.6" fill="#009c00"/><rect x="1366.17" y="369.2" width="1.6" height="13.7" fill="#001a00"/><rect x="1372.37" y="369.2" width="1.6" height="13.7" fill="#001a00"/><rect x="1378.57" y="369.2" width="1.6" height="13.7" fill="#001a00"/><rect x="1386.12" y="370.2" width="1.6" height="15.0" fill="#001a00"/><rect x="1386.02" y="368.2" width="1.8" height="1.6" fill="#009c00"/><rect x="1392.32" y="370.2" width="1.6" height="15.0" fill="#001a00"/><rect x="1392.22" y="368.2" width="1.8" height="1.6" fill="#009c00"/><rect x="1398.52" y="370.2" width="1.6" height="15.0" fill="#001a00"/><rect x="1398.42" y="368.2" width="1.8" height="1.6" fill="#009c00"/><rect x="1406.07" y="369.2" width="1.6" height="13.7" fill="#001a00"/><rect x="1412.27" y="369.2" width="1.6" height="13.7" fill="#001a00"/><rect x="1418.47" y="369.2" width="1.6" height="13.7" fill="#001a00"/><rect x="1426.02" y="370.2" width="1.6" height="15.0" fill="#001a00"/><rect x="1425.92" y="368.2" width="1.8" height="1.6" fill="#009c00"/><rect x="1432.22" y="370.2" width="1.6" height="15.0" fill="#001a00"/><rect x="1432.12" y="368.2" width="1.8" height="1.6" fill="#009c00"/><rect x="1438.42" y="370.2" width="1.6" height="15.0" fill="#001a00"/><rect x="1438.32" y="368.2" width="1.8" height="1.6" fill="#009c00"/><rect x="1445.97" y="369.2" width="1.6" height="13.7" fill="#001a00"/><rect x="1452.17" y="369.2" width="1.6" height="13.7" fill="#001a00"/><rect x="1458.37" y="369.2" width="1.6" height="13.7" fill="#001a00"/><rect x="1465.92" y="370.2" width="1.6" height="15.0" fill="#001a00"/><rect x="1465.82" y="368.2" width="1.8" height="1.6" fill="#009c00"/><rect x="1472.12" y="370.2" width="1.6" height="15.0" fill="#001a00"/><rect x="1472.02" y="368.2" width="1.8" height="1.6" fill="#009c00"/><rect x="1478.32" y="370.2" width="1.6" height="15.0" fill="#001a00"/><rect x="1478.22" y="368.2" width="1.8" height="1.6" fill="#009c00"/><rect x="1485.87" y="369.2" width="1.6" height="13.7" fill="#001a00"/><rect x="1492.07" y="369.2" width="1.6" height="13.7" fill="#001a00"/><rect x="1498.27" y="369.2" width="1.6" height="13.7" fill="#001a00"/><rect x="1505.82" y="370.2" width="1.6" height="15.0" fill="#001a00"/><rect x="1505.72" y="368.2" width="1.8" height="1.6" fill="#009c00"/><rect x="1512.02" y="370.2" width="1.6" height="15.0" fill="#001a00"/><rect x="1511.92" y="368.2" width="1.8" height="1.6" fill="#009c00"/><rect x="1518.22" y="370.2" width="1.6" height="15.0" fill="#001a00"/><rect x="1518.12" y="368.2" width="1.8" height="1.6" fill="#009c00"/><rect x="1525.77" y="369.2" width="1.6" height="13.7" fill="#001a00"/><rect x="1531.97" y="369.2" width="1.6" height="13.7" fill="#001a00"/><rect x="1538.17" y="369.2" width="1.6" height="13.7" fill="#001a00"/><rect x="1545.72" y="370.2" width="1.6" height="15.0" fill="#001a00"/><rect x="1545.62" y="368.2" width="1.8" height="1.6" fill="#009c00"/><rect x="1551.92" y="370.2" width="1.6" height="15.0" fill="#001a00"/><rect x="1551.82" y="368.2" width="1.8" height="1.6" fill="#009c00"/><rect x="1558.12" y="370.2" width="1.6" height="15.0" fill="#001a00"/><rect x="1558.02" y="368.2" width="1.8" height="1.6" fill="#009c00"/><rect x="1565.67" y="369.2" width="1.6" height="13.7" fill="#001a00"/><rect x="1571.87" y="369.2" width="1.6" height="13.7" fill="#001a00"/><rect x="1578.07" y="369.2" width="1.6" height="13.7" fill="#001a00"/><rect x="1585.62" y="370.2" width="1.6" height="15.0" fill="#001a00"/><rect x="1585.52" y="368.2" width="1.8" height="1.6" fill="#009c00"/><rect x="1591.82" y="370.2" width="1.6" height="15.0" fill="#001a00"/><rect x="1591.72" y="368.2" width="1.8" height="1.6" fill="#009c00"/><rect x="1598.02" y="370.2" width="1.6" height="15.0" fill="#001a00"/><rect x="1597.92" y="368.2" width="1.8" height="1.6" fill="#009c00"/><rect x="1605.57" y="369.2" width="1.6" height="13.7" fill="#001a00"/><rect x="1611.77" y="369.2" width="1.6" height="13.7" fill="#001a00"/><rect x="1617.97" y="369.2" width="1.6" height="13.7" fill="#001a00"/><rect x="1625.52" y="370.2" width="1.6" height="15.0" fill="#001a00"/><rect x="1625.42" y="368.2" width="1.8" height="1.6" fill="#009c00"/><rect x="1631.72" y="370.2" width="1.6" height="15.0" fill="#001a00"/><rect x="1631.62" y="368.2" width="1.8" height="1.6" fill="#009c00"/><rect x="1637.92" y="370.2" width="1.6" height="15.0" fill="#001a00"/><rect x="1637.82" y="368.2" width="1.8" height="1.6" fill="#009c00"/><rect x="1645.47" y="369.2" width="1.6" height="13.7" fill="#001a00"/><rect x="1651.67" y="369.2" width="1.6" height="13.7" fill="#001a00"/><rect x="1657.87" y="369.2" width="1.6" height="13.7" fill="#001a00"/><rect x="1665.42" y="370.2" width="1.6" height="15.0" fill="#001a00"/><rect x="1665.32" y="368.2" width="1.8" height="1.6" fill="#009c00"/><rect x="1671.62" y="370.2" width="1.6" height="15.0" fill="#001a00"/><rect x="1671.52" y="368.2" width="1.8" height="1.6" fill="#009c00"/><rect x="1677.82" y="370.2" width="1.6" height="15.0" fill="#001a00"/><rect x="1677.72" y="368.2" width="1.8" height="1.6" fill="#009c00"/><rect x="1685.37" y="369.2" width="1.6" height="13.7" fill="#001a00"/><rect x="1691.57" y="369.2" width="1.6" height="13.7" fill="#001a00"/><rect x="1697.77" y="369.2" width="1.6" height="13.7" fill="#001a00"/><rect x="1705.32" y="370.2" width="1.6" height="15.0" fill="#001a00"/><rect x="1705.22" y="368.2" width="1.8" height="1.6" fill="#009c00"/><rect x="1711.52" y="370.2" width="1.6" height="15.0" fill="#001a00"/><rect x="1711.42" y="368.2" width="1.8" height="1.6" fill="#009c00"/><rect x="1717.72" y="370.2" width="1.6" height="15.0" fill="#001a00"/><rect x="1717.62" y="368.2" width="1.8" height="1.6" fill="#009c00"/><rect x="1725.27" y="369.2" width="1.6" height="13.7" fill="#001a00"/><rect x="1731.47" y="369.2" width="1.6" height="13.7" fill="#001a00"/><rect x="1737.67" y="369.2" width="1.6" height="13.7" fill="#001a00"/><rect x="1745.22" y="370.2" width="1.6" height="15.0" fill="#001a00"/><rect x="1745.12" y="368.2" width="1.8" height="1.6" fill="#009c00"/><rect x="1751.42" y="370.2" width="1.6" height="15.0" fill="#001a00"/><rect x="1751.32" y="368.2" width="1.8" height="1.6" fill="#009c00"/><rect x="1757.62" y="370.2" width="1.6" height="15.0" fill="#001a00"/><rect x="1757.52" y="368.2" width="1.8" height="1.6" fill="#009c00"/><rect x="1765.17" y="369.2" width="1.6" height="13.7" fill="#001a00"/><rect x="1771.37" y="369.2" width="1.6" height="13.7" fill="#001a00"/><rect x="1777.57" y="369.2" width="1.6" height="13.7" fill="#001a00"/><rect x="1785.12" y="370.2" width="1.6" height="15.0" fill="#001a00"/><rect x="1785.02" y="368.2" width="1.8" height="1.6" fill="#009c00"/><rect x="324" y="298.52" width="6" height="1.35" fill="#00e400"/><rect x="328.93" y="283.425" width="1.35" height="16.44999999999999" fill="#00e400"/><rect x="329.6" y="283.43" width="1457.4" height="1.35" fill="#00e400"/><rect x="324" y="362.72" width="6" height="1.35" fill="#00e400"/><rect x="328.93" y="347.625" width="1.35" height="16.44999999999999" fill="#00e400"/><rect x="329.6" y="347.62" width="1457.4" height="1.35" fill="#00e400"/><rect x="324" y="432.82" width="1463" height="1.35" fill="#00e400"/><rect x="324" y="468.72" width="76.85000000000002" height="1.35" fill="#00e400"/><rect x="400.18" y="455.2" width="1.35" height="14.875" fill="#00e400"/><rect x="403.38" y="455.2" width="1.35" height="14.875" fill="#00e400"/><path d="M400.85 455.5Q402.45000000000005 453.0 404.05 455.5" fill="none" stroke="#00e400" stroke-width="1.35"/><rect x="404.05" y="468.72" width="74.30000000000001" height="1.35" fill="#00e400"/><rect x="477.68" y="455.2" width="1.35" height="14.875" fill="#00e400"/><rect x="480.88" y="455.2" width="1.35" height="14.875" fill="#00e400"/><path d="M478.35 455.5Q479.95000000000005 453.0 481.55 455.5" fill="none" stroke="#00e400" stroke-width="1.35"/><rect x="481.55" y="468.72" width="73.05000000000001" height="1.35" fill="#00e400"/><rect x="553.93" y="455.2" width="1.35" height="14.875" fill="#00e400"/><rect x="557.12" y="455.2" width="1.35" height="14.875" fill="#00e400"/><path d="M554.6 455.5Q556.2 453.0 557.8 455.5" fill="none" stroke="#00e400" stroke-width="1.35"/><rect x="557.8" y="468.72" width="74.30000000000007" height="1.35" fill="#00e400"/><rect x="631.43" y="455.2" width="1.35" height="14.875" fill="#00e400"/><rect x="634.62" y="455.2" width="1.35" height="14.875" fill="#00e400"/><path d="M632.1 455.5Q633.7 453.0 635.3 455.5" fill="none" stroke="#00e400" stroke-width="1.35"/><rect x="635.3" y="468.72" width="73.05000000000007" height="1.35" fill="#00e400"/><rect x="707.68" y="455.2" width="1.35" height="14.875" fill="#00e400"/><rect x="710.88" y="455.2" width="1.35" height="14.875" fill="#00e400"/><path d="M708.35 455.5Q709.95 453.0 711.55 455.5" fill="none" stroke="#00e400" stroke-width="1.35"/><rect x="711.55" y="468.72" width="74.30000000000007" height="1.35" fill="#00e400"/><rect x="785.18" y="455.2" width="1.35" height="14.875" fill="#00e400"/><rect x="788.38" y="455.2" width="1.35" height="14.875" fill="#00e400"/><path d="M785.85 455.5Q787.45 453.0 789.05 455.5" fill="none" stroke="#00e400" stroke-width="1.35"/><rect x="789.05" y="468.72" width="74.30000000000007" height="1.35" fill="#00e400"/><rect x="862.68" y="455.2" width="1.35" height="14.875" fill="#00e400"/><rect x="865.88" y="455.2" width="1.35" height="14.875" fill="#00e400"/><path d="M863.35 455.5Q864.95 453.0 866.55 455.5" fill="none" stroke="#00e400" stroke-width="1.35"/><rect x="866.55" y="468.72" width="73.05000000000007" height="1.35" fill="#00e400"/><rect x="938.93" y="455.2" width="1.35" height="14.875" fill="#00e400"/><rect x="942.12" y="455.2" width="1.35" height="14.875" fill="#00e400"/><path d="M939.6 455.5Q941.2 453.0 942.8 455.5" fill="none" stroke="#00e400" stroke-width="1.35"/><rect x="942.8" y="468.72" width="74.30000000000007" height="1.35" fill="#00e400"/><rect x="1016.43" y="455.2" width="1.35" height="14.875" fill="#00e400"/><rect x="1019.62" y="455.2" width="1.35" height="14.875" fill="#00e400"/><path d="M1017.1 455.5Q1018.7 453.0 1020.3 455.5" fill="none" stroke="#00e400" stroke-width="1.35"/><rect x="1020.3" y="468.72" width="73.04999999999995" height="1.35" fill="#00e400"/><rect x="1092.67" y="455.2" width="1.35" height="14.875" fill="#00e400"/><rect x="1095.88" y="455.2" width="1.35" height="14.875" fill="#00e400"/><path d="M1093.35 455.5Q1094.9499999999998 453.0 1096.55 455.5" fill="none" stroke="#00e400" stroke-width="1.35"/><rect x="1096.55" y="468.72" width="74.29999999999995" height="1.35" fill="#00e400"/><rect x="1170.17" y="455.2" width="1.35" height="14.875" fill="#00e400"/><rect x="1173.38" y="455.2" width="1.35" height="14.875" fill="#00e400"/><path d="M1170.85 455.5Q1172.4499999999998 453.0 1174.05 455.5" fill="none" stroke="#00e400" stroke-width="1.35"/><rect x="1174.05" y="468.72" width="74.29999999999995" height="1.35" fill="#00e400"/><rect x="1247.67" y="455.2" width="1.35" height="14.875" fill="#00e400"/><rect x="1250.88" y="455.2" width="1.35" height="14.875" fill="#00e400"/><path d="M1248.35 455.5Q1249.9499999999998 453.0 1251.55 455.5" fill="none" stroke="#00e400" stroke-width="1.35"/><rect x="1251.55" y="468.72" width="73.04999999999995" height="1.35" fill="#00e400"/><rect x="1323.92" y="455.2" width="1.35" height="14.875" fill="#00e400"/><rect x="1327.12" y="455.2" width="1.35" height="14.875" fill="#00e400"/><path d="M1324.6 455.5Q1326.1999999999998 453.0 1327.8 455.5" fill="none" stroke="#00e400" stroke-width="1.35"/><rect x="1327.8" y="468.72" width="74.29999999999995" height="1.35" fill="#00e400"/><rect x="1401.42" y="455.2" width="1.35" height="14.875" fill="#00e400"/><rect x="1404.62" y="455.2" width="1.35" height="14.875" fill="#00e400"/><path d="M1402.1 455.5Q1403.6999999999998 453.0 1405.3 455.5" fill="none" stroke="#00e400" stroke-width="1.35"/><rect x="1405.3" y="468.72" width="73.04999999999995" height="1.35" fill="#00e400"/><rect x="1477.67" y="455.2" width="1.35" height="14.875" fill="#00e400"/><rect x="1480.88" y="455.2" width="1.35" height="14.875" fill="#00e400"/><path d="M1478.35 455.5Q1479.9499999999998 453.0 1481.55 455.5" fill="none" stroke="#00e400" stroke-width="1.35"/><rect x="1481.55" y="468.72" width="74.29999999999995" height="1.35" fill="#00e400"/><rect x="1555.17" y="455.2" width="1.35" height="14.875" fill="#00e400"/><rect x="1558.38" y="455.2" width="1.35" height="14.875" fill="#00e400"/><path d="M1555.85 455.5Q1557.4499999999998 453.0 1559.05 455.5" fill="none" stroke="#00e400" stroke-width="1.35"/><rect x="1559.05" y="468.72" width="74.29999999999995" height="1.35" fill="#00e400"/><rect x="1632.67" y="455.2" width="1.35" height="14.875" fill="#00e400"/><rect x="1635.88" y="455.2" width="1.35" height="14.875" fill="#00e400"/><path d="M1633.35 455.5Q1634.9499999999998 453.0 1636.55 455.5" fill="none" stroke="#00e400" stroke-width="1.35"/><rect x="1636.55" y="468.72" width="73.04999999999995" height="1.35" fill="#00e400"/><rect x="1708.92" y="455.2" width="1.35" height="14.875" fill="#00e400"/><rect x="1712.12" y="455.2" width="1.35" height="14.875" fill="#00e400"/><path d="M1709.6 455.5Q1711.1999999999998 453.0 1712.8 455.5" fill="none" stroke="#00e400" stroke-width="1.35"/><rect x="1712.8" y="468.72" width="74.20000000000005" height="1.35" fill="#00e400"/><path d="M324 305.6H405.65M324 320.6H405.65" fill="none" stroke="#a8f4a8" stroke-width="1.6"/><path d="M405.65 305.0V308.8L407.15 310.40000000000003V315.8L405.65 317.40000000000003V321.20000000000005" fill="none" stroke="#a8f4a8" stroke-width="1.6"/><path d="M408.15 305.6H483.15M408.15 320.6H483.15" fill="none" stroke="#a8f4a8" stroke-width="1.6"/><path d="M408.65 305.0V309.20000000000005M408.65 317.0V321.20000000000005" fill="none" stroke="#a8f4a8" stroke-width="1.6"/><path d="M483.15 305.0V308.8L484.65 310.40000000000003V315.8L483.15 317.40000000000003V321.20000000000005" fill="none" stroke="#a8f4a8" stroke-width="1.6"/><path d="M485.65 305.6H559.4M485.65 320.6H559.4" fill="none" stroke="#a8f4a8" stroke-width="1.6"/><path d="M486.15 305.0V309.20000000000005M486.15 317.0V321.20000000000005" fill="none" stroke="#a8f4a8" stroke-width="1.6"/><path d="M559.4 305.0V308.8L560.9 310.40000000000003V315.8L559.4 317.40000000000003V321.20000000000005" fill="none" stroke="#a8f4a8" stroke-width="1.6"/><path d="M561.9 305.6H636.9M561.9 320.6H636.9" fill="none" stroke="#a8f4a8" stroke-width="1.6"/><path d="M562.4 305.0V309.20000000000005M562.4 317.0V321.20000000000005" fill="none" stroke="#a8f4a8" stroke-width="1.6"/><path d="M636.9 305.0V308.8L638.4 310.40000000000003V315.8L636.9 317.40000000000003V321.20000000000005" fill="none" stroke="#a8f4a8" stroke-width="1.6"/><path d="M639.4 305.6H713.15M639.4 320.6H713.15" fill="none" stroke="#a8f4a8" stroke-width="1.6"/><path d="M639.9 305.0V309.20000000000005M639.9 317.0V321.20000000000005" fill="none" stroke="#a8f4a8" stroke-width="1.6"/><path d="M713.15 305.0V308.8L714.65 310.40000000000003V315.8L713.15 317.40000000000003V321.20000000000005" fill="none" stroke="#a8f4a8" stroke-width="1.6"/><path d="M715.65 305.6H790.65M715.65 320.6H790.65" fill="none" stroke="#a8f4a8" stroke-width="1.6"/><path d="M716.15 305.0V309.20000000000005M716.15 317.0V321.20000000000005" fill="none" stroke="#a8f4a8" stroke-width="1.6"/><path d="M790.65 305.0V308.8L792.15 310.40000000000003V315.8L790.65 317.40000000000003V321.20000000000005" fill="none" stroke="#a8f4a8" stroke-width="1.6"/><path d="M793.15 305.6H944.4M793.15 320.6H944.4" fill="none" stroke="#a8f4a8" stroke-width="1.6"/><path d="M793.65 305.0V309.20000000000005M793.65 317.0V321.20000000000005" fill="none" stroke="#a8f4a8" stroke-width="1.6"/><path d="M944.4 305.0V308.8L945.9 310.40000000000003V315.8L944.4 317.40000000000003V321.20000000000005" fill="none" stroke="#a8f4a8" stroke-width="1.6"/><path d="M946.9 305.6H1021.9M946.9 320.6H1021.9" fill="none" stroke="#a8f4a8" stroke-width="1.6"/><path d="M947.4 305.0V309.20000000000005M947.4 317.0V321.20000000000005" fill="none" stroke="#a8f4a8" stroke-width="1.6"/><path d="M1021.9 305.0V308.8L1023.4 310.40000000000003V315.8L1021.9 317.40000000000003V321.20000000000005" fill="none" stroke="#a8f4a8" stroke-width="1.6"/><path d="M1024.4 305.6H1098.15M1024.4 320.6H1098.15" fill="none" stroke="#a8f4a8" stroke-width="1.6"/><path d="M1024.9 305.0V309.20000000000005M1024.9 317.0V321.20000000000005" fill="none" stroke="#a8f4a8" stroke-width="1.6"/><path d="M1098.15 305.0V308.8L1099.65 310.40000000000003V315.8L1098.15 317.40000000000003V321.20000000000005" fill="none" stroke="#a8f4a8" stroke-width="1.6"/><path d="M1100.65 305.6H1175.65M1100.65 320.6H1175.65" fill="none" stroke="#a8f4a8" stroke-width="1.6"/><path d="M1101.15 305.0V309.20000000000005M1101.15 317.0V321.20000000000005" fill="none" stroke="#a8f4a8" stroke-width="1.6"/><path d="M1175.65 305.0V308.8L1177.15 310.40000000000003V315.8L1175.65 317.40000000000003V321.20000000000005" fill="none" stroke="#a8f4a8" stroke-width="1.6"/><path d="M1178.15 305.6H1253.15M1178.15 320.6H1253.15" fill="none" stroke="#a8f4a8" stroke-width="1.6"/><path d="M1178.65 305.0V309.20000000000005M1178.65 317.0V321.20000000000005" fill="none" stroke="#a8f4a8" stroke-width="1.6"/><path d="M1253.15 305.0V308.8L1254.65 310.40000000000003V315.8L1253.15 317.40000000000003V321.20000000000005" fill="none" stroke="#a8f4a8" stroke-width="1.6"/><path d="M1255.65 305.6H1329.4M1255.65 320.6H1329.4" fill="none" stroke="#a8f4a8" stroke-width="1.6"/><path d="M1256.15 305.0V309.20000000000005M1256.15 317.0V321.20000000000005" fill="none" stroke="#a8f4a8" stroke-width="1.6"/><path d="M1329.4 305.0V308.8L1330.9 310.40000000000003V315.8L1329.4 317.40000000000003V321.20000000000005" fill="none" stroke="#a8f4a8" stroke-width="1.6"/><path d="M1331.9 305.6H1483.15M1331.9 320.6H1483.15" fill="none" stroke="#a8f4a8" stroke-width="1.6"/><path d="M1332.4 305.0V309.20000000000005M1332.4 317.0V321.20000000000005" fill="none" stroke="#a8f4a8" stroke-width="1.6"/><path d="M1483.15 305.0V308.8L1484.65 310.40000000000003V315.8L1483.15 317.40000000000003V321.20000000000005" fill="none" stroke="#a8f4a8" stroke-width="1.6"/><path d="M1485.65 305.6H1560.65M1485.65 320.6H1560.65" fill="none" stroke="#a8f4a8" stroke-width="1.6"/><path d="M1486.15 305.0V309.20000000000005M1486.15 317.0V321.20000000000005" fill="none" stroke="#a8f4a8" stroke-width="1.6"/><path d="M1560.65 305.0V308.8L1562.15 310.40000000000003V315.8L1560.65 317.40000000000003V321.20000000000005" fill="none" stroke="#a8f4a8" stroke-width="1.6"/><path d="M1563.15 305.6H1638.15M1563.15 320.6H1638.15" fill="none" stroke="#a8f4a8" stroke-width="1.6"/><path d="M1563.65 305.0V309.20000000000005M1563.65 317.0V321.20000000000005" fill="none" stroke="#a8f4a8" stroke-width="1.6"/><path d="M1638.15 305.0V308.8L1639.65 310.40000000000003V315.8L1638.15 317.40000000000003V321.20000000000005" fill="none" stroke="#a8f4a8" stroke-width="1.6"/><path d="M1640.65 305.6H1714.4M1640.65 320.6H1714.4" fill="none" stroke="#a8f4a8" stroke-width="1.6"/><path d="M1641.15 305.0V309.20000000000005M1641.15 317.0V321.20000000000005" fill="none" stroke="#a8f4a8" stroke-width="1.6"/><path d="M1714.4 305.0V308.8L1715.9 310.40000000000003V315.8L1714.4 317.40000000000003V321.20000000000005" fill="none" stroke="#a8f4a8" stroke-width="1.6"/><path d="M1716.9 305.6H1815.5M1716.9 320.6H1815.5" fill="none" stroke="#a8f4a8" stroke-width="1.6"/><path d="M1717.4 305.0V309.20000000000005M1717.4 317.0V321.20000000000005" fill="none" stroke="#a8f4a8" stroke-width="1.6"/><path d="M324 390.9H405.65M324 406.1H405.65" fill="none" stroke="#a8f4a8" stroke-width="1.6"/><path d="M405.65 390.29999999999995V394.09999999999997L407.15 395.7V401.3L405.65 402.90000000000003V406.70000000000005" fill="none" stroke="#a8f4a8" stroke-width="1.6"/><path d="M408.15 390.9H483.15M408.15 406.1H483.15" fill="none" stroke="#a8f4a8" stroke-width="1.6"/><path d="M408.65 390.29999999999995V394.5M408.65 402.5V406.70000000000005" fill="none" stroke="#a8f4a8" stroke-width="1.6"/><path d="M483.15 390.29999999999995V394.09999999999997L484.65 395.7V401.3L483.15 402.90000000000003V406.70000000000005" fill="none" stroke="#a8f4a8" stroke-width="1.6"/><path d="M485.65 390.9H559.4M485.65 406.1H559.4" fill="none" stroke="#a8f4a8" stroke-width="1.6"/><path d="M486.15 390.29999999999995V394.5M486.15 402.5V406.70000000000005" fill="none" stroke="#a8f4a8" stroke-width="1.6"/><path d="M559.4 390.29999999999995V394.09999999999997L560.9 395.7V401.3L559.4 402.90000000000003V406.70000000000005" fill="none" stroke="#a8f4a8" stroke-width="1.6"/><path d="M561.9 390.9H636.9M561.9 406.1H636.9" fill="none" stroke="#a8f4a8" stroke-width="1.6"/><path d="M562.4 390.29999999999995V394.5M562.4 402.5V406.70000000000005" fill="none" stroke="#a8f4a8" stroke-width="1.6"/><path d="M636.9 390.29999999999995V394.09999999999997L638.4 395.7V401.3L636.9 402.90000000000003V406.70000000000005" fill="none" stroke="#a8f4a8" stroke-width="1.6"/><path d="M639.4 390.9H713.15M639.4 406.1H713.15" fill="none" stroke="#a8f4a8" stroke-width="1.6"/><path d="M639.9 390.29999999999995V394.5M639.9 402.5V406.70000000000005" fill="none" stroke="#a8f4a8" stroke-width="1.6"/><path d="M713.15 390.29999999999995V394.09999999999997L714.65 395.7V401.3L713.15 402.90000000000003V406.70000000000005" fill="none" stroke="#a8f4a8" stroke-width="1.6"/><path d="M715.65 390.9H790.65M715.65 406.1H790.65" fill="none" stroke="#a8f4a8" stroke-width="1.6"/><path d="M716.15 390.29999999999995V394.5M716.15 402.5V406.70000000000005" fill="none" stroke="#a8f4a8" stroke-width="1.6"/><path d="M790.65 390.29999999999995V394.09999999999997L792.15 395.7V401.3L790.65 402.90000000000003V406.70000000000005" fill="none" stroke="#a8f4a8" stroke-width="1.6"/><path d="M793.15 390.9H944.4M793.15 406.1H944.4" fill="none" stroke="#a8f4a8" stroke-width="1.6"/><path d="M793.65 390.29999999999995V394.5M793.65 402.5V406.70000000000005" fill="none" stroke="#a8f4a8" stroke-width="1.6"/><path d="M944.4 390.29999999999995V394.09999999999997L945.9 395.7V401.3L944.4 402.90000000000003V406.70000000000005" fill="none" stroke="#a8f4a8" stroke-width="1.6"/><path d="M946.9 390.9H1021.9M946.9 406.1H1021.9" fill="none" stroke="#a8f4a8" stroke-width="1.6"/><path d="M947.4 390.29999999999995V394.5M947.4 402.5V406.70000000000005" fill="none" stroke="#a8f4a8" stroke-width="1.6"/><path d="M1021.9 390.29999999999995V394.09999999999997L1023.4 395.7V401.3L1021.9 402.90000000000003V406.70000000000005" fill="none" stroke="#a8f4a8" stroke-width="1.6"/><path d="M1024.4 390.9H1098.15M1024.4 406.1H1098.15" fill="none" stroke="#a8f4a8" stroke-width="1.6"/><path d="M1024.9 390.29999999999995V394.5M1024.9 402.5V406.70000000000005" fill="none" stroke="#a8f4a8" stroke-width="1.6"/><path d="M1098.15 390.29999999999995V394.09999999999997L1099.65 395.7V401.3L1098.15 402.90000000000003V406.70000000000005" fill="none" stroke="#a8f4a8" stroke-width="1.6"/><path d="M1100.65 390.9H1175.65M1100.65 406.1H1175.65" fill="none" stroke="#a8f4a8" stroke-width="1.6"/><path d="M1101.15 390.29999999999995V394.5M1101.15 402.5V406.70000000000005" fill="none" stroke="#a8f4a8" stroke-width="1.6"/><path d="M1175.65 390.29999999999995V394.09999999999997L1177.15 395.7V401.3L1175.65 402.90000000000003V406.70000000000005" fill="none" stroke="#a8f4a8" stroke-width="1.6"/><path d="M1178.15 390.9H1253.15M1178.15 406.1H1253.15" fill="none" stroke="#a8f4a8" stroke-width="1.6"/><path d="M1178.65 390.29999999999995V394.5M1178.65 402.5V406.70000000000005" fill="none" stroke="#a8f4a8" stroke-width="1.6"/><path d="M1253.15 390.29999999999995V394.09999999999997L1254.65 395.7V401.3L1253.15 402.90000000000003V406.70000000000005" fill="none" stroke="#a8f4a8" stroke-width="1.6"/><path d="M1255.65 390.9H1329.4M1255.65 406.1H1329.4" fill="none" stroke="#a8f4a8" stroke-width="1.6"/><path d="M1256.15 390.29999999999995V394.5M1256.15 402.5V406.70000000000005" fill="none" stroke="#a8f4a8" stroke-width="1.6"/><path d="M1329.4 390.29999999999995V394.09999999999997L1330.9 395.7V401.3L1329.4 402.90000000000003V406.70000000000005" fill="none" stroke="#a8f4a8" stroke-width="1.6"/><path d="M1331.9 390.9H1483.15M1331.9 406.1H1483.15" fill="none" stroke="#a8f4a8" stroke-width="1.6"/><path d="M1332.4 390.29999999999995V394.5M1332.4 402.5V406.70000000000005" fill="none" stroke="#a8f4a8" stroke-width="1.6"/><path d="M1483.15 390.29999999999995V394.09999999999997L1484.65 395.7V401.3L1483.15 402.90000000000003V406.70000000000005" fill="none" stroke="#a8f4a8" stroke-width="1.6"/><path d="M1485.65 390.9H1560.65M1485.65 406.1H1560.65" fill="none" stroke="#a8f4a8" stroke-width="1.6"/><path d="M1486.15 390.29999999999995V394.5M1486.15 402.5V406.70000000000005" fill="none" stroke="#a8f4a8" stroke-width="1.6"/><path d="M1560.65 390.29999999999995V394.09999999999997L1562.15 395.7V401.3L1560.65 402.90000000000003V406.70000000000005" fill="none" stroke="#a8f4a8" stroke-width="1.6"/><path d="M1563.15 390.9H1638.15M1563.15 406.1H1638.15" fill="none" stroke="#a8f4a8" stroke-width="1.6"/><path d="M1563.65 390.29999999999995V394.5M1563.65 402.5V406.70000000000005" fill="none" stroke="#a8f4a8" stroke-width="1.6"/><path d="M1638.15 390.29999999999995V394.09999999999997L1639.65 395.7V401.3L1638.15 402.90000000000003V406.70000000000005" fill="none" stroke="#a8f4a8" stroke-width="1.6"/><path d="M1640.65 390.9H1714.4M1640.65 406.1H1714.4" fill="none" stroke="#a8f4a8" stroke-width="1.6"/><path d="M1641.15 390.29999999999995V394.5M1641.15 402.5V406.70000000000005" fill="none" stroke="#a8f4a8" stroke-width="1.6"/><path d="M1714.4 390.29999999999995V394.09999999999997L1715.9 395.7V401.3L1714.4 402.90000000000003V406.70000000000005" fill="none" stroke="#a8f4a8" stroke-width="1.6"/><path d="M1716.9 390.9H1815.5M1716.9 406.1H1815.5" fill="none" stroke="#a8f4a8" stroke-width="1.6"/><path d="M1717.4 390.29999999999995V394.5M1717.4 402.5V406.70000000000005" fill="none" stroke="#a8f4a8" stroke-width="1.6"/><path d="M324 475.8H403.15M324 490.9H403.15" fill="none" stroke="#a8f4a8" stroke-width="1.6"/><path d="M403.15 475.2V479.0L404.65 480.6V486.09999999999997L403.15 487.7V491.5" fill="none" stroke="#a8f4a8" stroke-width="1.6"/><path d="M405.65 475.8H480.65M405.65 490.9H480.65" fill="none" stroke="#a8f4a8" stroke-width="1.6"/><path d="M406.15 475.2V479.40000000000003M406.15 487.29999999999995V491.5" fill="none" stroke="#a8f4a8" stroke-width="1.6"/><path d="M480.65 475.2V479.0L482.15 480.6V486.09999999999997L480.65 487.7V491.5" fill="none" stroke="#a8f4a8" stroke-width="1.6"/><path d="M483.15 475.8H556.9M483.15 490.9H556.9" fill="none" stroke="#a8f4a8" stroke-width="1.6"/><path d="M483.65 475.2V479.40000000000003M483.65 487.29999999999995V491.5" fill="none" stroke="#a8f4a8" stroke-width="1.6"/><path d="M556.9 475.2V479.0L558.4 480.6V486.09999999999997L556.9 487.7V491.5" fill="none" stroke="#a8f4a8" stroke-width="1.6"/><path d="M559.4 475.8H634.4M559.4 490.9H634.4" fill="none" stroke="#a8f4a8" stroke-width="1.6"/><path d="M559.9 475.2V479.40000000000003M559.9 487.29999999999995V491.5" fill="none" stroke="#a8f4a8" stroke-width="1.6"/><path d="M634.4 475.2V479.0L635.9 480.6V486.09999999999997L634.4 487.7V491.5" fill="none" stroke="#a8f4a8" stroke-width="1.6"/><path d="M636.9 475.8H710.65M636.9 490.9H710.65" fill="none" stroke="#a8f4a8" stroke-width="1.6"/><path d="M637.4 475.2V479.40000000000003M637.4 487.29999999999995V491.5" fill="none" stroke="#a8f4a8" stroke-width="1.6"/><path d="M710.65 475.2V479.0L712.15 480.6V486.09999999999997L710.65 487.7V491.5" fill="none" stroke="#a8f4a8" stroke-width="1.6"/><path d="M713.15 475.8H788.15M713.15 490.9H788.15" fill="none" stroke="#a8f4a8" stroke-width="1.6"/><path d="M713.65 475.2V479.40000000000003M713.65 487.29999999999995V491.5" fill="none" stroke="#a8f4a8" stroke-width="1.6"/><path d="M788.15 475.2V479.0L789.65 480.6V486.09999999999997L788.15 487.7V491.5" fill="none" stroke="#a8f4a8" stroke-width="1.6"/><path d="M790.65 475.8H865.65M790.65 490.9H865.65" fill="none" stroke="#a8f4a8" stroke-width="1.6"/><path d="M791.15 475.2V479.40000000000003M791.15 487.29999999999995V491.5" fill="none" stroke="#a8f4a8" stroke-width="1.6"/><path d="M865.65 475.2V479.0L867.15 480.6V486.09999999999997L865.65 487.7V491.5" fill="none" stroke="#a8f4a8" stroke-width="1.6"/><path d="M868.15 475.8H941.9M868.15 490.9H941.9" fill="none" stroke="#a8f4a8" stroke-width="1.6"/><path d="M868.65 475.2V479.40000000000003M868.65 487.29999999999995V491.5" fill="none" stroke="#a8f4a8" stroke-width="1.6"/><path d="M941.9 475.2V479.0L943.4 480.6V486.09999999999997L941.9 487.7V491.5" fill="none" stroke="#a8f4a8" stroke-width="1.6"/><path d="M944.4 475.8H1019.4M944.4 490.9H1019.4" fill="none" stroke="#a8f4a8" stroke-width="1.6"/><path d="M944.9 475.2V479.40000000000003M944.9 487.29999999999995V491.5" fill="none" stroke="#a8f4a8" stroke-width="1.6"/><path d="M1019.4 475.2V479.0L1020.9 480.6V486.09999999999997L1019.4 487.7V491.5" fill="none" stroke="#a8f4a8" stroke-width="1.6"/><path d="M1021.9 475.8H1095.65M1021.9 490.9H1095.65" fill="none" stroke="#a8f4a8" stroke-width="1.6"/><path d="M1022.4 475.2V479.40000000000003M1022.4 487.29999999999995V491.5" fill="none" stroke="#a8f4a8" stroke-width="1.6"/><path d="M1095.65 475.2V479.0L1097.15 480.6V486.09999999999997L1095.65 487.7V491.5" fill="none" stroke="#a8f4a8" stroke-width="1.6"/><path d="M1098.15 475.8H1173.15M1098.15 490.9H1173.15" fill="none" stroke="#a8f4a8" stroke-width="1.6"/><path d="M1098.65 475.2V479.40000000000003M1098.65 487.29999999999995V491.5" fill="none" stroke="#a8f4a8" stroke-width="1.6"/><path d="M1173.15 475.2V479.0L1174.65 480.6V486.09999999999997L1173.15 487.7V491.5" fill="none" stroke="#a8f4a8" stroke-width="1.6"/><path d="M1175.65 475.8H1250.65M1175.65 490.9H1250.65" fill="none" stroke="#a8f4a8" stroke-width="1.6"/><path d="M1176.15 475.2V479.40000000000003M1176.15 487.29999999999995V491.5" fill="none" stroke="#a8f4a8" stroke-width="1.6"/><path d="M1250.65 475.2V479.0L1252.15 480.6V486.09999999999997L1250.65 487.7V491.5" fill="none" stroke="#a8f4a8" stroke-width="1.6"/><path d="M1253.15 475.8H1326.9M1253.15 490.9H1326.9" fill="none" stroke="#a8f4a8" stroke-width="1.6"/><path d="M1253.65 475.2V479.40000000000003M1253.65 487.29999999999995V491.5" fill="none" stroke="#a8f4a8" stroke-width="1.6"/><path d="M1326.9 475.2V479.0L1328.4 480.6V486.09999999999997L1326.9 487.7V491.5" fill="none" stroke="#a8f4a8" stroke-width="1.6"/><path d="M1329.4 475.8H1404.4M1329.4 490.9H1404.4" fill="none" stroke="#a8f4a8" stroke-width="1.6"/><path d="M1329.9 475.2V479.40000000000003M1329.9 487.29999999999995V491.5" fill="none" stroke="#a8f4a8" stroke-width="1.6"/><path d="M1404.4 475.2V479.0L1405.9 480.6V486.09999999999997L1404.4 487.7V491.5" fill="none" stroke="#a8f4a8" stroke-width="1.6"/><path d="M1406.9 475.8H1480.65M1406.9 490.9H1480.65" fill="none" stroke="#a8f4a8" stroke-width="1.6"/><path d="M1407.4 475.2V479.40000000000003M1407.4 487.29999999999995V491.5" fill="none" stroke="#a8f4a8" stroke-width="1.6"/><path d="M1480.65 475.2V479.0L1482.15 480.6V486.09999999999997L1480.65 487.7V491.5" fill="none" stroke="#a8f4a8" stroke-width="1.6"/><path d="M1483.15 475.8H1558.15M1483.15 490.9H1558.15" fill="none" stroke="#a8f4a8" stroke-width="1.6"/><path d="M1483.65 475.2V479.40000000000003M1483.65 487.29999999999995V491.5" fill="none" stroke="#a8f4a8" stroke-width="1.6"/><path d="M1558.15 475.2V479.0L1559.65 480.6V486.09999999999997L1558.15 487.7V491.5" fill="none" stroke="#a8f4a8" stroke-width="1.6"/><path d="M1560.65 475.8H1635.65M1560.65 490.9H1635.65" fill="none" stroke="#a8f4a8" stroke-width="1.6"/><path d="M1561.15 475.2V479.40000000000003M1561.15 487.29999999999995V491.5" fill="none" stroke="#a8f4a8" stroke-width="1.6"/><path d="M1635.65 475.2V479.0L1637.15 480.6V486.09999999999997L1635.65 487.7V491.5" fill="none" stroke="#a8f4a8" stroke-width="1.6"/><path d="M1638.15 475.8H1711.9M1638.15 490.9H1711.9" fill="none" stroke="#a8f4a8" stroke-width="1.6"/><path d="M1638.65 475.2V479.40000000000003M1638.65 487.29999999999995V491.5" fill="none" stroke="#a8f4a8" stroke-width="1.6"/><path d="M1711.9 475.2V479.0L1713.4 480.6V486.09999999999997L1711.9 487.7V491.5" fill="none" stroke="#a8f4a8" stroke-width="1.6"/><path d="M1714.4 475.8H1815.5M1714.4 490.9H1815.5" fill="none" stroke="#a8f4a8" stroke-width="1.6"/><path d="M1714.9 475.2V479.40000000000003M1714.9 487.29999999999995V491.5" fill="none" stroke="#a8f4a8" stroke-width="1.6"/><path d="M324 411.6H330M324 426.8H330M329.500 410.8V427.6" fill="none" stroke="#aaf8aa" stroke-width="1.6"/><defs><pattern id="cntp" x="330" y="410" width="7" height="18" patternUnits="userSpaceOnUse"><rect x="0" y="0" width="7" height="18" fill="#000"/><rect x="0" y="0.8" width="7" height="2.6" fill="#5c8c5c"/><rect x="0" y="15.000000000000002" width="7" height="2.6" fill="#5c8c5c"/><rect x="0" y="0.8" width="7" height="1.4" fill="#9ce49c"/><rect x="0" y="16.200000000000003" width="7" height="1.4" fill="#9ce49c"/><rect x="4.1" y="3.8" width="2.4" height="10.8" fill="#1c301c"/><path d="M-1.1 1.4V2.2L0 5.2V13.200000000000001L-1.1 16.200000000000003V17.0M1.1 1.4V2.2L0 5.2M0 13.200000000000001L1.1 16.200000000000003V17.0M5.9 1.4V2.2L7 5.2V13.200000000000001L5.9 16.200000000000003V17.0M8.1 1.4V2.2L7 5.2M7 13.200000000000001L8.1 16.200000000000003V17.0M2.5 1.4V2.2L3.6 5.2V13.200000000000001L2.5 16.200000000000003V17.0M4.7 1.4V2.2L3.6 5.2M3.6 13.200000000000001L4.7 16.200000000000003V17.0" fill="none" stroke="#aaf8aa" stroke-width="1.05"/><rect x="1.1" y="0.8" width="1.5" height="3.2" fill="#b6ffb6"/><rect x="4.700" y="0.8" width="1.4" height="3.2" fill="#b6ffb6"/><rect x="1.1" y="14.400000000000002" width="1.5" height="3.2" fill="#b6ffb6"/><rect x="4.700" y="14.400000000000002" width="1.4" height="3.2" fill="#b6ffb6"/></pattern></defs><rect x="330" y="410" width="1457" height="18" fill="url(#cntp)"/><rect x="322.8" y="210.8" width="1.3" height="22.4" fill="#f4c800"/><rect x="322.8" y="236.6" width="1.3" height="541.6" fill="#f4c800"/><rect x="322.8" y="781" width="1.3" height="28.5" fill="#f4c800"/><rect x="322.8" y="271" width="1.3" height="8" fill="#f02000"/><rect x="322.8" y="292.5" width="1.3" height="7.5" fill="#f02000"/><rect x="322.8" y="356.6" width="1.3" height="7.599999999999966" fill="#f02000"/><rect x="322.8" y="377.7" width="1.3" height="7.699999999999989" fill="#f02000"/><rect x="322.8" y="434" width="1.3" height="7.199999999999989" fill="#f02000"/><rect x="322.8" y="462.6" width="1.3" height="7.599999999999966" fill="#f02000"/><rect x="322.8" y="308.5" width="1.3" height="8.199999999999989" fill="#4020c8"/><rect x="322.8" y="393.8" width="1.3" height="8.199999999999989" fill="#4020c8"/><rect x="322.8" y="415" width="1.3" height="8" fill="#4020c8"/><rect x="322.8" y="479.1" width="1.3" height="8.199999999999989" fill="#4020c8"/><rect x="476.45" y="781" width="2.2" height="9" fill="#00c800"/><rect x="630.2" y="781" width="2.2" height="9" fill="#00c800"/><rect x="783.95" y="781" width="2.2" height="9" fill="#00c800"/><rect x="937.7" y="781" width="2.2" height="9" fill="#00c800"/><rect x="1091.45" y="781" width="2.2" height="9" fill="#00c800"/><rect x="1246.45" y="781" width="2.2" height="9" fill="#00c800"/><rect x="1400.2" y="781" width="2.2" height="9" fill="#00c800"/><rect x="1553.95" y="781" width="2.2" height="9" fill="#00c800"/><rect x="1707.7" y="781" width="2.2" height="9" fill="#00c800"/></g></svg>
<span id="reg1" class="t" style="left:329px;top:242.66px;font:13.4px/1 'Liberation Sans',sans-serif;color:#f0f0f0;letter-spacing:0.070px;transform:scale(1.0,1.07);transform-origin:0 11.34px;">( Region: sim:/led_tb )</span>
<span id="reg2" class="t" style="left:329px;top:327.66px;font:13.4px/1 'Liberation Sans',sans-serif;color:#f0f0f0;letter-spacing:0.085px;transform:scale(1.0,1.07);transform-origin:0 11.34px;">( Region: sim:/led_tb/led_inst )</span>
<div style="left:324px;top:792px;width:40px;height:17px;overflow:hidden"><span id="t0" class="t" style="left:-12px;top:2.9px;transform:scaleY(1.07);transform-origin:0 11.3px;font:13.4px/1 'Liberation Sans',sans-serif;color:#00e000">0.00 us</span></div>
<span id="tl2" class="t" style="left:618px;top:794.83px;font:13.2px/1 'Liberation Sans',sans-serif;color:#00dc00;letter-spacing:-0.191px;transform:scale(1.0,1.07);transform-origin:0 11.17px;">2 us</span>
<span id="tl4" class="t" style="left:926px;top:794.83px;font:13.2px/1 'Liberation Sans',sans-serif;color:#00dc00;letter-spacing:-0.191px;transform:scale(1.0,1.07);transform-origin:0 11.17px;">4 us</span>
<span id="tl6" class="t" style="left:1234px;top:794.83px;font:13.2px/1 'Liberation Sans',sans-serif;color:#00dc00;letter-spacing:-0.191px;transform:scale(1.0,1.07);transform-origin:0 11.17px;">6 us</span>
<span id="tl8" class="t" style="left:1542px;top:794.83px;font:13.2px/1 'Liberation Sans',sans-serif;color:#00dc00;letter-spacing:-0.191px;transform:scale(1.0,1.07);transform-origin:0 11.17px;">8 us</span>
<span id="curbox" class="t" style="left:326.3px;top:815.33px;font:13.2px/1 'Liberation Sans',sans-serif;color:#e8c000;letter-spacing:0.202px;transform:scale(1.0,1.07);transform-origin:0 11.17px;">0.00000 us</span>
<span id="wm1" class="t" style="left:1514.5px;top:788.39px;font:33.8px/1 'Liberation Sans',sans-serif;color:rgba(255,255,255,.72);letter-spacing:0.000px;transform:scale(0.9271,1.0);transform-origin:0 28.61px;">CSDN</span>
<span id="wm2" class="t" style="left:1615.5px;top:792.95px;font:29px/1 'Liberation Sans',sans-serif;color:rgba(255,255,255,.72);letter-spacing:0.000px;transform:scale(0.9483,1.0);transform-origin:0 24.55px;">@</span>
<span id="wm3" class="t" style="left:1645px;top:789.64px;font:33.5px/1 'Liberation Sans','Noto Sans CJK SC',sans-serif;color:rgba(255,255,255,.72);letter-spacing:1.000px;">电子小芯</span>
<svg style="left:0;top:0" width="1787" height="182" viewBox="0 0 1787 182"><rect x="25" y="-6" width="16" height="14" fill="#fff" stroke="#707070"/><rect x="28" y="-1" width="7" height="1.5" fill="#303030" /><rect x="28" y="2" width="10" height="1.5" fill="#303030" /><path d="M51 0h5l-2.5 3Z" fill="#000" stroke="none" stroke-width="1" /><path d="M64 8L71 -2H83L76 8Z" fill="#8a8a10" stroke="#000" stroke-width="1" /><path d="M64 8V-4H69" fill="none" stroke="#000" stroke-width="1" /><rect x="65" y="-4" width="5" height="5" fill="#e0e040" /><rect x="93" y="-6" width="18" height="14" fill="#8a8a00" stroke="#000"/><rect x="97" y="1" width="10" height="7" fill="#000" /><rect x="103" y="3" width="3" height="4" fill="#e8e8e8" /><path d="M123 4L131 -3L138 -1L130 8Z" fill="#a8d8a8" stroke="none" stroke-width="1" opacity=".8"/><path d="M148 0H164V6Q164 8 160 8H150Q148 8 148 6Z" fill="#fff" stroke="#303030" stroke-width="1" /><rect x="158" y="1" width="4" height="1.5" fill="#e0c000" /><path d="M177.5 0V10" stroke="#303030" stroke-width="1" stroke-dasharray="1 1.3" fill="none"/><text x="191" y="7" font-family="Liberation Sans,sans-serif" font-size="13" fill="#1010ff">d6</text><rect x="217" y="-2" width="10" height="3" fill="#000" /><rect x="222" y="-4" width="12" height="9" fill="#fff" stroke="#1010c0" stroke-width="1.4"/><rect x="225" y="0" width="6" height="1.5" fill="#303060" /><rect x="244" y="-3" width="10" height="8" fill="#7a7a30" stroke="#000"/><rect x="250" y="-4" width="12" height="10" fill="#fff" stroke="#1010c0" stroke-width="1.4"/><rect x="253" y="0" width="6" height="1.5" fill="#303060" /><rect x="272" y="5" width="12" height="2.4" fill="#000" /><path d="M285 6h6M286 2l3 -3" fill="none" stroke="#202020" stroke-width="1" stroke-dasharray="1 1"/><path d="M298 5h8l2 2l2 -2l2 2l2 -2" fill="none" stroke="#404040" stroke-width="1" stroke-dasharray="1 1"/><path d="M328.5 0V10" stroke="#303030" stroke-width="1" stroke-dasharray="1 1.3" fill="none"/><circle cx="348.5" cy="-1" r="9" fill="#50c030" stroke="#90e070" stroke-width="2" /><rect x="347" y="-4" width="3" height="7" fill="#e8ffe0" /><path d="M365 0h5l-2.5 3Z" fill="#000" stroke="none" stroke-width="1" /><path d="M377 5V-2H384V2H390V-2H397V5H390V3H384V5Z" fill="#000" stroke="none" stroke-width="1" /><rect x="405.5" y="0.5" width="7" height="8" fill="#fff" stroke="#000"/><path d="M407 4.5h4M409 2.5v4M412 3.5h9" fill="none" stroke="#000" stroke-width="1" /><text x="431" y="8" font-family="Liberation Sans,sans-serif" font-size="22" font-weight="bold" fill="#000">M</text><path d="M482 6l3 2l3 -8" fill="none" stroke="#10c010" stroke-width="1.6" /><path d="M491 2l3 -3l5 1" fill="none" stroke="#2020ff" stroke-width="1.4" stroke-dasharray="1.5 1"/><path d="M513 2l5 -4M516 -2l6 6l6 -1" fill="none" stroke="#2020ff" stroke-width="1.4" stroke-dasharray="1.5 1"/><path d="M520 8l4 -4l5 4" fill="none" stroke="#f0d000" stroke-width="1.6" stroke-dasharray="2 1"/><path d="M538 8l5 -5l5 5" fill="none" stroke="#f0d000" stroke-width="1.6" stroke-dasharray="2 1"/><path d="M545 2l4 -4l7 2" fill="none" stroke="#2020ff" stroke-width="1.4" stroke-dasharray="1.5 1"/><path d="M566 8l6 -7l6 7M569 -2l3 3" fill="none" stroke="#ff2020" stroke-width="1.5" /><path d="M575 0l4 -3l4 2" fill="none" stroke="#2020ff" stroke-width="1.4" stroke-dasharray="1.5 1"/><path d="M592 5l4 3l6 -7" fill="none" stroke="#202020" stroke-width="1.5" /><path d="M601 0l4 -3l5 2" fill="none" stroke="#2020ff" stroke-width="1.4" stroke-dasharray="1.5 1"/><path d="M620 8l8 -9M636 8l-8 -9" fill="none" stroke="#2040ff" stroke-width="1.3" /><path d="M622 7h3M632 7h3" fill="none" stroke="#202020" stroke-width="1" /><path d="M648 -2l6 3l3 -3" fill="none" stroke="#2020ff" stroke-width="1.4" stroke-dasharray="1.5 1"/><path d="M655 2l5 6l6 -5" fill="none" stroke="#202020" stroke-width="1.4" stroke-dasharray="2 1"/><path d="M678.5 0V10" stroke="#303030" stroke-width="1" stroke-dasharray="1 1.3" fill="none"/><rect x="689" y="-10" width="24" height="22.5" fill="#e8e8e8" /><path d="M689.5 12.5V-9.5H713" fill="none" stroke="#9a9a9a" stroke-width="1" /><path d="M689 12.0H712.5V-10" fill="none" stroke="#f8f8f8" stroke-width="1" /><rect x="693" y="-4" width="17" height="14" fill="#7090a0" /><path d="M693 0h17M693 3h17M693 6h17M697 -4v14M701 -4v14M705 -4v14" stroke="#305040" stroke-width=".8" fill="none"/><rect x="699" y="-2" width="5" height="6" fill="#9060c0" /><path d="M745 2h14l4 -4M747 5h12" fill="none" stroke="#303030" stroke-width="1.3" stroke-dasharray="1.5 1"/><path d="M771 0h4l-2.0 2.5Z" fill="#000" stroke="none" stroke-width="1" /><path d="M786 5l12 -9M789 -3l8 8" fill="none" stroke="#c02020" stroke-width="2.2" /><path d="M796 -3l5 4" fill="none" stroke="#606060" stroke-width="1.5" /><path d="M809 0h4l-2.0 2.5Z" fill="#000" stroke="none" stroke-width="1" /><path d="M822 -3l9 9l8 -9Z" fill="#f4f4f4" stroke="#606060" stroke-width="1.2" /><path d="M835 0l5 4" fill="none" stroke="#909090" stroke-width="2" stroke-dasharray="1.5 1"/><rect x="872" y="-12" width="24" height="24.5" fill="#fff" /><path d="M872.5 12.5V-11.5H896" fill="none" stroke="#fff" stroke-width="1" /><path d="M872 12.0H895.5V-12" fill="none" stroke="#8c8c8c" stroke-width="1" /><circle cx="883" cy="-1" r="6.5" fill="#4060a0" stroke="#203060" stroke-width="1" /><circle cx="883" cy="-1" r="2.5" fill="#f0f0f0" stroke="none" stroke-width="1" /><rect x="889.5" y="-2.5" width="3" height="3" fill="#35508c" /><rect x="887.2" y="3.2" width="3" height="3" fill="#35508c" /><rect x="881.5" y="5.5" width="3" height="3" fill="#35508c" /><rect x="875.8" y="3.2" width="3" height="3" fill="#35508c" /><rect x="873.5" y="-2.5" width="3" height="3" fill="#35508c" /><rect x="875.8" y="-8.2" width="3" height="3" fill="#35508c" /><rect x="881.5" y="-10.5" width="3" height="3" fill="#35508c" /><rect x="887.2" y="-8.2" width="3" height="3" fill="#35508c" /><path d="M885 1l5 4l-4 3Z" fill="#d03030" stroke="none" stroke-width="1" /><rect x="904" y="-12" width="24" height="24.5" fill="#f6f6f6" /><path d="M904.5 12.5V-11.5H928" fill="none" stroke="#fff" stroke-width="1" /><path d="M904 12.0H927.5V-12" fill="none" stroke="#8c8c8c" stroke-width="1" /><circle cx="915" cy="-1" r="6.5" fill="#4060a0" stroke="#203060" stroke-width="1" /><circle cx="915" cy="-1" r="2.5" fill="#f0f0f0" stroke="none" stroke-width="1" /><rect x="921.5" y="-2.5" width="3" height="3" fill="#35508c" /><rect x="919.2" y="3.2" width="3" height="3" fill="#35508c" /><rect x="913.5" y="5.5" width="3" height="3" fill="#35508c" /><rect x="907.8" y="3.2" width="3" height="3" fill="#35508c" /><rect x="905.5" y="-2.5" width="3" height="3" fill="#35508c" /><rect x="907.8" y="-8.2" width="3" height="3" fill="#35508c" /><rect x="913.5" y="-10.5" width="3" height="3" fill="#35508c" /><rect x="919.2" y="-8.2" width="3" height="3" fill="#35508c" /><path d="M916 8l4 -8l4 8Z" fill="#e0e020" stroke="#303000" stroke-width="0.6" /><rect x="936" y="-12" width="24" height="24.5" fill="#f6f6f6" /><path d="M936.5 12.5V-11.5H960" fill="none" stroke="#fff" stroke-width="1" /><path d="M936 12.0H959.5V-12" fill="none" stroke="#8c8c8c" stroke-width="1" /><circle cx="947" cy="-1" r="6.5" fill="#4060a0" stroke="#203060" stroke-width="1" /><circle cx="947" cy="-1" r="2.5" fill="#f0f0f0" stroke="none" stroke-width="1" /><rect x="953.5" y="-2.5" width="3" height="3" fill="#35508c" /><rect x="951.2" y="3.2" width="3" height="3" fill="#35508c" /><rect x="945.5" y="5.5" width="3" height="3" fill="#35508c" /><rect x="939.8" y="3.2" width="3" height="3" fill="#35508c" /><rect x="937.5" y="-2.5" width="3" height="3" fill="#35508c" /><rect x="939.8" y="-8.2" width="3" height="3" fill="#35508c" /><rect x="945.5" y="-10.5" width="3" height="3" fill="#35508c" /><rect x="951.2" y="-8.2" width="3" height="3" fill="#35508c" /><path d="M948 8l4 -8l4 8Z" fill="#e0e020" stroke="#303000" stroke-width="0.6" /><rect x="969" y="-12" width="24" height="24.5" fill="#f6f6f6" /><path d="M969.5 12.5V-11.5H993" fill="none" stroke="#fff" stroke-width="1" /><path d="M969 12.0H992.5V-12" fill="none" stroke="#8c8c8c" stroke-width="1" /><circle cx="980" cy="-1" r="6.5" fill="#4060a0" stroke="#203060" stroke-width="1" /><circle cx="980" cy="-1" r="2.5" fill="#f0f0f0" stroke="none" stroke-width="1" /><rect x="986.5" y="-2.5" width="3" height="3" fill="#35508c" /><rect x="984.2" y="3.2" width="3" height="3" fill="#35508c" /><rect x="978.5" y="5.5" width="3" height="3" fill="#35508c" /><rect x="972.8" y="3.2" width="3" height="3" fill="#35508c" /><rect x="970.5" y="-2.5" width="3" height="3" fill="#35508c" /><rect x="972.8" y="-8.2" width="3" height="3" fill="#35508c" /><rect x="978.5" y="-10.5" width="3" height="3" fill="#35508c" /><rect x="984.2" y="-8.2" width="3" height="3" fill="#35508c" /><rect x="986" y="0" width="5" height="8" fill="#30c060" /><rect x="986" y="-6" width="5" height="5" fill="#30a0e0" /><path d="M1025 2l10 -5l9 4l-10 5ZM1025 5l10 4l9 -5" fill="#f0f0f0" stroke="#303030" stroke-width="1" /><rect x="1051.5" y="-5.5" width="19" height="12" fill="none" stroke="#303030" stroke-dasharray="2 1.5"/><circle cx="1061" cy="7" r="1.5" fill="#2060ff" stroke="none" stroke-width="1" /><rect x="1079" y="0" width="1.5" height="7" fill="#404040" /><rect x="1082" y="0" width="1.5" height="7" fill="#404040" /><rect x="1085" y="0" width="1.5" height="7" fill="#404040" /><rect x="1088" y="0" width="1.5" height="7" fill="#404040" /><rect x="1091" y="0" width="1.5" height="7" fill="#404040" /><rect x="1094" y="0" width="1.5" height="7" fill="#404040" /><rect x="1097" y="0" width="1.5" height="7" fill="#404040" /><path d="M1111 4H1123" fill="none" stroke="#000" stroke-width="2" /><circle cx="1112" cy="5" r="5" fill="#e01010" stroke="#000" stroke-width="1.2" /><circle cx="1123" cy="5" r="3.5" fill="#e01010" stroke="#000" stroke-width="1.2" /><rect x="1112" y="-3" width="10" height="4" fill="#d8d8f0" /><rect x="1133" y="-12" width="23" height="22" fill="#f4f4f4" /><path d="M1133.5 10V-11.5H1156" fill="none" stroke="#fff" stroke-width="1" /><path d="M1133 9.5H1155.5V-12" fill="none" stroke="#8c8c8c" stroke-width="1" /><path d="M1141 -4v8M1138 1l3 4l3 -4" fill="none" stroke="#c01010" stroke-width="1.6" /><path d="M1150 -4v10M1147 3l3 4l3 -4M1146 8h8" fill="none" stroke="#1010c0" stroke-width="1.6" /><rect x="1184" y="-12" width="24" height="24" fill="#fff" /><path d="M1184.5 12V-11.5H1208" fill="none" stroke="#fff" stroke-width="1" /><path d="M1184 11.5H1207.5V-12" fill="none" stroke="#8c8c8c" stroke-width="1" /><rect x="1188" y="-6" width="9" height="9" fill="none" stroke="#0a7a0a" stroke-width="2.2"/><rect x="1193" y="-2" width="9" height="9" fill="none" stroke="#0a7a0a" stroke-width="2.2"/><rect x="1221" y="-8" width="10" height="17" fill="#000" /><path d="M1243 2l8 -8v5h12v7h-12v4Z" fill="#000" stroke="none" stroke-width="1" /><path d="M1290 2l-8 -8v5h-12v7h12v4Z" fill="#808080" stroke="none" stroke-width="1" opacity=".8"/><path d="M1302.5 0V10" stroke="#303030" stroke-width="1" stroke-dasharray="1 1.3" fill="none"/><g transform="translate(0,1.8)"><rect x="1313.5" y="-6" width="13" height="13" fill="#fff" stroke="#303030"/><rect x="1316" y="0" width="6" height="1.4" fill="#303030" /><rect x="1316" y="3" width="8" height="1.4" fill="#303030" /><path d="M1330 -4v12" fill="none" stroke="#1010a0" stroke-width="1.6" /></g><rect x="1342" y="-10" width="76" height="18" fill="#fff" /><path d="M1341.5 8V-10" fill="none" stroke="#9a9a9a" stroke-width="1" /><rect x="1420" y="-8" width="14" height="17" fill="#f0f0f0" /><path d="M1420 9.5H1434.5V-8" fill="none" stroke="#606060" stroke-width="1" /><path d="M1423 2h9l-4.5 5Z" fill="#000" stroke="none" stroke-width="1" /><g transform="translate(0,1.6)"><rect x="1444.5" y="-6" width="13" height="14" fill="#fff" stroke="#303030"/><rect x="1447" y="0" width="6" height="1.4" fill="#303030" /><rect x="1447" y="3" width="8" height="1.4" fill="#303030" /><path d="M1462 -5v11M1459 3l3 4l3 -4M1458 8.5h8" fill="none" stroke="#1010a0" stroke-width="1.5" /><rect x="1472.5" y="-6" width="13" height="14" fill="#fff" stroke="#303030"/><rect x="1475" y="0" width="6" height="1.4" fill="#303030" /><rect x="1475" y="3" width="8" height="1.4" fill="#303030" /><path d="M1490 -5v11M1487 3l3 4l3 -4" fill="none" stroke="#1010a0" stroke-width="1.5" /><rect x="1499.5" y="-6" width="13" height="14" fill="#fff" stroke="#303030"/><rect x="1502" y="0" width="6" height="1.4" fill="#303030" /><rect x="1502" y="3" width="8" height="1.4" fill="#303030" /><path d="M1517 -5v11M1514 3l3 4l3 -4M1513 8.5h8" fill="none" stroke="#1010a0" stroke-width="1.5" /><rect x="1527.5" y="-6" width="13" height="14" fill="#fff" stroke="#303030"/><rect x="1530" y="0" width="6" height="1.4" fill="#303030" /><rect x="1530" y="3" width="8" height="1.4" fill="#303030" /><path d="M1545 -5v11M1542 3l3 4l3 -4M1541 8.5h8" fill="none" stroke="#1010a0" stroke-width="1.5" /><path d="M1530 -3l8 6M1538 -3l-8 6" fill="none" stroke="#c01010" stroke-width="1.8" /><path d="M1555 -4q9 -6 18 0l-3 10q-6 3.500 -12 0Z" fill="#f06050" stroke="none" stroke-width="1" opacity=".75"/><path d="M1584.5 0V10" stroke="#303030" stroke-width="1" stroke-dasharray="1 1.3" fill="none"/><rect x="1595" y="-12" width="25" height="23" fill="#e8e8e8" /><path d="M1595.5 11V-11.5H1620" fill="none" stroke="#fff" stroke-width="1" /><path d="M1595 10.5H1619.5V-12" fill="none" stroke="#8c8c8c" stroke-width="1" /><rect x="1599" y="-6" width="17" height="15" fill="#a0a0a0" opacity=".7"/><rect x="1604" y="-2" width="3" height="10" fill="#30d030" /><rect x="1608" y="-6" width="3" height="14" fill="#f0e020" /><rect x="1612" y="-4" width="3" height="12" fill="#f04040" /><rect x="1628" y="-12" width="25" height="23" fill="#e8e8e8" /><path d="M1628.5 11V-11.5H1653" fill="none" stroke="#fff" stroke-width="1" /><path d="M1628 10.5H1652.5V-12" fill="none" stroke="#8c8c8c" stroke-width="1" /><rect x="1632" y="-6" width="17" height="15" fill="#a0a0a0" opacity=".7"/><rect x="1637" y="-2" width="3" height="10" fill="#30d030" /><rect x="1641" y="-6" width="3" height="14" fill="#f0e020" /><rect x="1645" y="-4" width="3" height="12" fill="#f04040" /><path d="M1661 -6l8 9l6 2l4 -6l-6 -9Z" fill="#fff" stroke="#303030" stroke-width="1.3" /><path d="M1668 7l9 -5" fill="none" stroke="#80a8e0" stroke-width="3.6" stroke-linecap="round"/></g><path d="M439.5 70.5V86" fill="none" stroke="#b07838" stroke-width="2.6" /><path d="M439 70.5v14" fill="none" stroke="#e8c890" stroke-width="0.8" /><path d="M423.5 73.5q4 -2.500 8 -1t7.500 -2l-2 9.500q-4 2 -7.500 1t-8.500 1.500Z" fill="#8ccaf8" stroke="#2a86e0" stroke-width="1.3" /><circle cx="437.5" cy="84.8" r="4.6" fill="#48b030" stroke="#2a8018" stroke-width="0.8" /><path d="M435 84.8h5M437.5 82.3v5" fill="none" stroke="#fff" stroke-width="1.5" /><path d="M446 78h7l-3.5 4Z" fill="#000" stroke="none" stroke-width="1" /><path d="M478.5 70.5V86" fill="none" stroke="#b07838" stroke-width="2.6" /><path d="M478 70.5v14" fill="none" stroke="#e8c890" stroke-width="0.8" /><path d="M462.5 73.5q4 -2.500 8 -1t7.500 -2l-2 9.500q-4 2 -7.500 1t-8.500 1.500Z" fill="#8ccaf8" stroke="#2a86e0" stroke-width="1.3" /><circle cx="476.5" cy="84.8" r="4.6" fill="#f06818" stroke="#c04808" stroke-width="0.8" /><path d="M474 84.8h5" fill="none" stroke="#fff" stroke-width="1.5" /><path d="M485 78h7l-3.5 4Z" fill="#000" stroke="none" stroke-width="1" /><path d="M517.5 70.5V86" fill="none" stroke="#b07838" stroke-width="2.6" /><path d="M517 70.5v14" fill="none" stroke="#e8c890" stroke-width="0.8" /><path d="M501.5 73.5q4 -2.500 8 -1t7.500 -2l-2 9.500q-4 2 -7.500 1t-8.500 1.500Z" fill="#8ccaf8" stroke="#2a86e0" stroke-width="1.3" /><path d="M506 88l10 -15l3.5 2.5l-10 15l-4.5 1Z" fill="#f0d048" stroke="#b08030" stroke-width="0.9" /><path d="M544.5 70.5V86" fill="none" stroke="#b07838" stroke-width="2.6" /><path d="M544 70.5v14" fill="none" stroke="#e8c890" stroke-width="0.8" /><path d="M528.5 73.5q4 -2.500 8 -1t7.500 -2l-2 9.500q-4 2 -7.500 1t-8.500 1.500Z" fill="#8ccaf8" stroke="#2a86e0" stroke-width="1.3" /><rect x="534.5" y="77.5" width="12" height="11.5" fill="#4878d8" stroke="#2850a8" rx="1"/><rect x="537" y="78" width="7" height="4" fill="#f0f4ff" /><rect x="537" y="84" width="7" height="3.5" fill="#a8d870" /><path d="M551 78h7l-3.5 4Z" fill="#000" stroke="none" stroke-width="1" /><path d="M583.5 70.5V86" fill="none" stroke="#b07838" stroke-width="2.6" /><path d="M583 70.5v14" fill="none" stroke="#e8c890" stroke-width="0.8" /><path d="M567.5 73.5q4 -2.500 8 -1t7.500 -2l-2 9.500q-4 2 -7.500 1t-8.500 1.500Z" fill="#8ccaf8" stroke="#2a86e0" stroke-width="1.3" /><path d="M573 80.5h6v-3.5l7 6.5l-7 6.5v-3.5h-6Z" fill="#48a828" stroke="#2a7818" stroke-width="0.8" /><rect x="615" y="69" width="24" height="24" fill="#fff" /><path d="M615.5 93V69.5H639" fill="none" stroke="#9a9a9a" stroke-width="1" /><path d="M615 92.5H638.5V69" fill="none" stroke="#f8f8f8" stroke-width="1" /><rect x="648" y="69" width="24" height="24" fill="#fff" /><path d="M648.5 93V69.5H672" fill="none" stroke="#9a9a9a" stroke-width="1" /><path d="M648 92.5H671.5V69" fill="none" stroke="#f8f8f8" stroke-width="1" /><rect x="680" y="69" width="24" height="24" fill="#fff" /><path d="M680.5 93V69.5H704" fill="none" stroke="#9a9a9a" stroke-width="1" /><path d="M680 92.5H703.5V69" fill="none" stroke="#f8f8f8" stroke-width="1" /><rect x="713" y="69" width="24" height="24" fill="#fff" /><path d="M713.5 93V69.5H737" fill="none" stroke="#9a9a9a" stroke-width="1" /><path d="M713 92.5H736.5V69" fill="none" stroke="#f8f8f8" stroke-width="1" /><rect x="745" y="69" width="25" height="24" fill="#f0f0f0" /><path d="M745.5 93V69.5H770" fill="none" stroke="#fff" stroke-width="1" /><path d="M745 92.5H769.5V69" fill="none" stroke="#8c8c8c" stroke-width="1" /><path d="M627.5 77v9M625.5 86l2 -2l2 2" fill="none" stroke="#202020" stroke-width="1.2" stroke-dasharray="1.2 1"/><circle cx="660.5" cy="82.5" r="4.8" fill="none" stroke="#202020" stroke-width="1.3" stroke-dasharray="1.2 1"/><path d="M686 78h4M688 78v9M686 87h4M696 77l-4 11" fill="none" stroke="#303030" stroke-width="1.1" stroke-dasharray="1.2 1"/><circle cx="700" cy="82.5" r="3.6" fill="none" stroke="#303030" stroke-width="1.2" stroke-dasharray="1.2 1"/><rect x="719.5" y="75.5" width="14" height="14" fill="none" stroke="#202020" stroke-width="1.4" stroke-dasharray="1.2 1"/><path d="M726 80l1.5 -1v7" fill="none" stroke="#303030" stroke-width="1.1" /><text x="749" y="87" font-family="Liberation Sans,sans-serif" font-size="10.5" fill="#505050" textLength="19">ALL</text><path d="M779 74l6 -4l5 6l-6 4Z" fill="#e8c8e8" stroke="none" stroke-width="1" opacity=".8"/><path d="M788 72l8 -2l3 8l-7 3Z" fill="#c8c8c8" stroke="none" stroke-width="1" opacity=".8"/><path d="M790 82l8 -3l1 9l-7 2Z" fill="#c8e8d0" stroke="none" stroke-width="1" opacity=".8"/><path d="M778 86l10 -9l5 6l-10 9Z" fill="#4868f8" stroke="none" stroke-width="1" opacity=".85"/><path d="M835.5 68.5h6v4h4l-7 6l-7 -6h4Z" fill="#1038f8" stroke="none" stroke-width="1" /><circle cx="838.5" cy="85.5" r="3.4" fill="#1038f8" stroke="none" stroke-width="1" /><path d="M858 79Q859 72.5 865.5 72.5Q870 72.5 870.5 78" fill="none" stroke="#1038f8" stroke-width="4" /><path d="M865 77.5h11l-5.500 7.500Z" fill="#1038f8" stroke="none" stroke-width="1" /><circle cx="858.5" cy="82.5" r="2.7" fill="#1038f8" stroke="none" stroke-width="1" /><path d="M893 68.5l7 6h-4v5h-6v-5h-4Z" fill="#1038f8" stroke="none" stroke-width="1" /><circle cx="893" cy="85.5" r="3.4" fill="#1038f8" stroke="none" stroke-width="1" /><path d="M913.5 70V89" stroke="#303030" stroke-width="1" stroke-dasharray="1 1.3" fill="none"/><path d="M931.5 68.5h6v4h4l-7 6l-7 -6h4Z" fill="#1038f8" stroke="none" stroke-width="1" /><circle cx="934.5" cy="85.5" r="3.2" fill="#1038f8" stroke="none" stroke-width="1" /><path d="M927 82v7M929.5 82v7M939.5 82v7M942 82v7" fill="none" stroke="#1038f8" stroke-width="1.2" /><path d="M949 78h7l-3.5 4Z" fill="#000" stroke="none" stroke-width="1" /><path d="M966 78Q967 71.5 973.5 71.5Q978 71.5 978.5 77" fill="none" stroke="#1038f8" stroke-width="4" /><path d="M973 76.5h11l-5.500 7.500Z" fill="#1038f8" stroke="none" stroke-width="1" /><circle cx="966.5" cy="81.5" r="2.7" fill="#1038f8" stroke="none" stroke-width="1" /><path d="M965 85h19" fill="none" stroke="#1038f8" stroke-width="4" stroke-dasharray="1.2 1.2"/><path d="M1000.5 68.5l7 6h-4v5h-6v-5h-4Z" fill="#1038f8" stroke="none" stroke-width="1" /><circle cx="1000.5" cy="85.5" r="3.2" fill="#1038f8" stroke="none" stroke-width="1" /><path d="M993 82v7M995.5 82v7M1005.5 82v7M1008 82v7" fill="none" stroke="#1038f8" stroke-width="1.2" /><rect x="1040" y="69" width="24" height="24" fill="#fff" /><path d="M1040.5 93V69.5H1064" fill="none" stroke="#9a9a9a" stroke-width="1" /><path d="M1040 92.5H1063.5V69" fill="none" stroke="#f8f8f8" stroke-width="1" /><path d="M1049 74v13l3 -3l3 6l2 -1l-3 -6h4Z" fill="#000" stroke="none" stroke-width="1" /><rect x="1073" y="69" width="24.5" height="24" fill="#f0f0f0" /><path d="M1073.5 93V69.5H1097.5" fill="none" stroke="#fff" stroke-width="1" /><path d="M1073 92.5H1097.0V69" fill="none" stroke="#8c8c8c" stroke-width="1" /><rect x="1105.5" y="69" width="24.5" height="24" fill="#f0f0f0" /><path d="M1106.0 93V69.5H1130.0" fill="none" stroke="#fff" stroke-width="1" /><path d="M1105.5 92.5H1129.5V69" fill="none" stroke="#8c8c8c" stroke-width="1" /><rect x="1138" y="69" width="24.5" height="24" fill="#f0f0f0" /><path d="M1138.5 93V69.5H1162.5" fill="none" stroke="#fff" stroke-width="1" /><path d="M1138 92.5H1162.0V69" fill="none" stroke="#8c8c8c" stroke-width="1" /><rect x="1170.5" y="69" width="24.5" height="24" fill="#f0f0f0" /><path d="M1171.0 93V69.5H1195.0" fill="none" stroke="#fff" stroke-width="1" /><path d="M1170.5 92.5H1194.5V69" fill="none" stroke="#8c8c8c" stroke-width="1" /><rect x="1079" y="74" width="9" height="9" fill="none" stroke="#000" stroke-width="1.6"/><rect x="1083.5" y="78.5" width="8" height="8" fill="#f0f0f0" stroke="#000" stroke-width="2.2"/><path d="M1088.5 89.5h6v-5.500" fill="none" stroke="#000" stroke-width="1.6" /><path d="M1117.5 72l4 4h-8ZM1117.5 90l4 -4h-8ZM1108.5 81l4 -4v8ZM1126.5 81l-4 -4v8ZM1117.5 75v12M1111 81h13" fill="#808080" stroke="#606060" stroke-width="1" stroke-dasharray="1 1"/><path d="M1146.5 74v13M1154.5 74v13" fill="none" stroke="#000" stroke-width="1.4" /><rect x="1143.5" y="86.5" width="6" height="2.5" fill="#f0f0f0" stroke="#000"/><rect x="1151.5" y="86.5" width="6" height="2.5" fill="#f0f0f0" stroke="#000"/><path d="M1175 75h9v13h10" fill="none" stroke="#000" stroke-width="1.3" /><path d="M1174 80.5h6M1174 86.5h6" fill="none" stroke="#000" stroke-width="1.3" /><path d="M1178 78.5l3 2l-3 2ZM1178 84.5l3 2l-3 2Z" fill="#000" stroke="none" stroke-width="1" /><path d="M1188 74v14" fill="none" stroke="#000" stroke-width="1" stroke-dasharray="1 1.2"/><path d="M1190 78h4M1190 84h4" fill="none" stroke="#000" stroke-width="1.6" /><path d="M1206.5 72V91" stroke="#303030" stroke-width="1" stroke-dasharray="1 1.3" fill="none"/><rect x="1216.5" y="71" width="10.5" height="20" fill="#000" /><circle cx="1222" cy="75" r="3.2" fill="#ff1010" stroke="none" stroke-width="1" /><circle cx="1222" cy="81.7" r="2.4" fill="#e8e020" stroke="none" stroke-width="1" /><circle cx="1222" cy="88" r="2.4" fill="#20e030" stroke="none" stroke-width="1" /><path d="M1229.5 76.5v10l6.5 -5Z" fill="#f0f0f0" stroke="#000" stroke-width="1" /><path d="M1227 78h2.5M1227 85h2.5" fill="none" stroke="#30a0f0" stroke-width="1" /><path d="M1266 71h4q5 0 5 4.5t-5 4.5q5 0 5 4.5t-5 4.5h-4" fill="none" stroke="#000" stroke-width="1.8" /><path d="M1285 78h-5v-3l-6 4.500l6 4.5v-3h5Z" fill="#1060ff" stroke="none" stroke-width="1" /><path d="M1291 78h7l-3.5 4Z" fill="#000" stroke="none" stroke-width="1" /><path d="M1305 78h5v-3l6 4.500l-6 4.5v-3h-5Z" fill="#1060ff" stroke="none" stroke-width="1" /><path d="M1324 71h-3q-5 0 -5 4.5t5 4.5q-5 0 -5 4.5t5 4.500h3M1316 80h7" fill="none" stroke="#000" stroke-width="1.8" /><path d="M1330 78h7l-3.5 4Z" fill="#000" stroke="none" stroke-width="1" /><path d="M1346 72h5v15h-5M1346 79.5h16" fill="none" stroke="#000" stroke-width="1.2" /><rect x="1344" y="70.5" width="3" height="3" fill="#f0f0f0" stroke="#000"/><rect x="1344" y="78" width="3" height="3" fill="#f0f0f0" stroke="#000"/><rect x="1344" y="85.5" width="3" height="3" fill="#f0f0f0" stroke="#000"/><path d="M1353.5 74l5.5 5.500l-5.500 5.500l-5.500 -5.500Z" fill="#000" stroke="none" stroke-width="1" /><path d="M1353.5 76.5v6M1350.5 79.5h6" fill="none" stroke="#10f010" stroke-width="1.5" /><rect x="1361" y="78" width="3" height="3" fill="#f0f0f0" stroke="#1010ff" stroke-width="1.3"/><path d="M1374.5 70V89" stroke="#303030" stroke-width="1" stroke-dasharray="1 1.3" fill="none"/><rect x="1442" y="69" width="144" height="22" fill="#fff" /><path d="M1442.5 91V69.5H1586" fill="none" stroke="#9a9a9a" stroke-width="1" /><path d="M1442 90.5H1585.5V69" fill="none" stroke="#f8f8f8" stroke-width="1" /><rect x="1589" y="69" width="21" height="20" fill="#f0f0f0" /><path d="M1589.5 89V69.5H1610" fill="none" stroke="#fff" stroke-width="1" /><path d="M1589 88.5H1609.5V69" fill="none" stroke="#8c8c8c" stroke-width="1" /><path d="M1593 78h15l-7.5 8Z" fill="#000" stroke="none" stroke-width="1" /><path d="M1621 88v-12q0 -5 4 -5t4 5v12ZM1629 88v-12q0 -5 4 -5t4 5v12Z" fill="#b0b0b0" stroke="#606060" stroke-width="1" stroke-dasharray="1 1" opacity=".9"/><path d="M1617 86l4 -3v2h3v-2l4 3l-4 3v-2h-3v2Z" fill="#8090ff" stroke="#2030ff" stroke-width="0.8" stroke-dasharray="1 .8"/><path d="M1642 88v-12q0 -5 4 -5t4 5v12ZM1650 88v-12q0 -5 4 -5t4 5v12Z" fill="#b0b0b0" stroke="#606060" stroke-width="1" stroke-dasharray="1 1" opacity=".9"/><path d="M1653 86l4 -3v2h3v-2l4 3l-4 3v-2h-3v2Z" fill="#8090ff" stroke="#2030ff" stroke-width="0.8" stroke-dasharray="1 .8"/><path d="M1673 72h3v-2h3v2h3v-2h3v2h2v12h-14Z" fill="#384048" stroke="none" stroke-width="1" /><rect x="1677" y="78" width="4" height="6" fill="#707880" /><path d="M1680 88l8 -8" fill="none" stroke="#5890e0" stroke-width="4.5" stroke-linecap="round"/><circle cx="1689" cy="78" r="3.6" fill="#d0d0d0" stroke="#909090" stroke-width="1" /><rect x="1689" y="74" width="4" height="3" fill="#f0f0f0" /><rect x="11" y="109" width="2.4" height="14" fill="#e8c000" /><rect x="4.5" y="122.5" width="13.5" height="5" fill="#e8c000" stroke="#907000" stroke-width=".8"/><rect x="6" y="124" width="10" height="1.5" fill="#fff4a0" /><path d="M14.5 115h8M18.5 111v8" fill="none" stroke="#e8c000" stroke-width="2" /><path d="M5 128.3h14" fill="none" stroke="#404040" stroke-width="0.8" /><path d="M38.5 109v14" fill="none" stroke="#e0b000" stroke-width="2" stroke-dasharray="1.2 1.2"/><path d="M41 113h8" fill="none" stroke="#807040" stroke-width="1.2" stroke-dasharray="1.2 1.2"/><path d="M32 122.5h14l2 3l-2 2.500h-14Z" fill="none" stroke="#c09800" stroke-width="1.3" stroke-dasharray="1.2 1"/><path d="M59 110.5h7.500v15.500h13" fill="none" stroke="#189048" stroke-width="1.5" /><path d="M79 117.500h-6v-3l-5 4.500l5 4.500v-3h6Z" fill="#4010e0" stroke="none" stroke-width="1" /><path d="M86 125.500h14.500v-15h6" fill="none" stroke="#189048" stroke-width="1.5" /><path d="M86 117.500h6v-3l5 4.500l-5 4.500v-3h-6Z" fill="#4010e0" stroke="none" stroke-width="1" /><path d="M114 110.500h7v15.500h13" fill="none" stroke="#189048" stroke-width="1.5" /><path d="M118 116h7l-3.500 4Z" fill="#4010e0" stroke="none" stroke-width="1" /><path d="M131 121h-4.500v-2l-3.500 3l3.500 3v-2h4.500Z" fill="#4010e0" stroke="none" stroke-width="1" /><path d="M142 110.500h11v15.500h8" fill="none" stroke="#189048" stroke-width="1.5" /><path d="M149.500 116h7l-3.500 4Z" fill="#4010e0" stroke="none" stroke-width="1" /><path d="M143 121.500h4.500v-2l3.500 3l-3.500 3v-2h-4.500Z" fill="#4010e0" stroke="none" stroke-width="1" /><path d="M169 125.500h7.500v-15.500h13" fill="none" stroke="#189048" stroke-width="1.5" /><path d="M173 117h7l-3.500 -4Z" fill="#4010e0" stroke="none" stroke-width="1" /><path d="M187 120.500h-4.500v-2l-3.500 3l3.500 3v-2h4.500Z" fill="#4010e0" stroke="none" stroke-width="1" /><path d="M196 125.500h13v-15.500h7" fill="none" stroke="#189048" stroke-width="1.5" /><path d="M205.500 117h7l-3.500 -4Z" fill="#4010e0" stroke="none" stroke-width="1" /><path d="M197 120.500h4.500v-2l3.500 3l-3.500 3v-2h-4.500Z" fill="#4010e0" stroke="none" stroke-width="1" /><path d="M17.189999999999998 161.19l6.500 6.500" fill="none" stroke="#1818e0" stroke-width="3.4" /><path d="M18.689999999999998 164.19l4 4" fill="none" stroke="#9090ff" stroke-width="0.8" /><circle cx="12.5" cy="156.5" r="6.7" fill="#fff" stroke="#101010" stroke-width="1.5" /><path d="M9.0 156.5h7M12.5 153.0v7" fill="none" stroke="#000" stroke-width="2.2" /><path d="M44.69 161.19l6.500 6.500" fill="none" stroke="#1818e0" stroke-width="3.4" /><path d="M46.19 164.19l4 4" fill="none" stroke="#9090ff" stroke-width="0.8" /><circle cx="40" cy="156.5" r="6.7" fill="#fff" stroke="#101010" stroke-width="1.5" /><path d="M36.5 156.5h7" fill="none" stroke="#000" stroke-width="2.2" /><path d="M72.19 161.19l6.500 6.500" fill="none" stroke="#1818e0" stroke-width="3.4" /><path d="M73.69 164.19l4 4" fill="none" stroke="#9090ff" stroke-width="0.8" /><circle cx="67.5" cy="156.5" r="6.7" fill="#004684" stroke="#101010" stroke-width="1.5" /><path d="M63.5 154.5q2 -3 5 -3" fill="none" stroke="#a0c0e0" stroke-width="1.2" /><path d="M93.500 149v13" fill="none" stroke="#e8a800" stroke-width="1.6" /><rect x="87.5" y="162.5" width="13" height="5.5" fill="#f8f8f0" stroke="#e8a800" stroke-width="1.5"/><path d="M103.500 155.500l3 4" fill="none" stroke="#1818e0" stroke-width="2.6" /><circle cx="101" cy="153" r="3.8" fill="#c0c0c0" stroke="#101010" stroke-width="1.3" /><path d="M118.500 154v9M129 150v13" fill="none" stroke="#e8a800" stroke-width="1.6" /><rect x="115.5" y="163.5" width="7.5" height="4.5" fill="#f8f8f0" stroke="#e8a800" stroke-width="1.5"/><rect x="125.5" y="163.5" width="8" height="4.5" fill="#f8f8f0" stroke="#e8a800" stroke-width="1.5"/><path d="M131 156l3 4" fill="none" stroke="#1818e0" stroke-width="2.6" /><circle cx="128.5" cy="153" r="3.8" fill="#b8b8b8" stroke="#101010" stroke-width="1.3" /><rect x="142" y="150" width="10" height="14" fill="none" stroke="#2020d0" stroke-width="1.3" stroke-dasharray="1.3 1"/><path d="M143 153h8M146 157h5" fill="none" stroke="#2020d0" stroke-width="1" stroke-dasharray="1.3 1"/><path d="M157 164l4.500 4.500" fill="none" stroke="#1818e0" stroke-width="2.6" /><path d="M154.500 155.500l4.500 4.500l-4.500 4.500l-4.500 -4.500Z" fill="#c8c8c8" stroke="#808080" stroke-width="0.8" /><rect x="192" y="149" width="24" height="24" fill="#fff" /><path d="M192.5 173V149.5H216" fill="none" stroke="#9a9a9a" stroke-width="1" /><path d="M192 172.5H215.5V149" fill="none" stroke="#f8f8f8" stroke-width="1" /><path d="M204.500 154v16.500M195 170.500h20" fill="none" stroke="#189048" stroke-width="1.4" /><rect x="224" y="149" width="25" height="24" fill="#f0f0f0" /><path d="M224.5 173V149.5H249" fill="none" stroke="#fff" stroke-width="1" /><path d="M224 172.5H248.5V149" fill="none" stroke="#8c8c8c" stroke-width="1" /><rect x="232" y="151.5" width="9" height="19.5" fill="#101888" /><path d="M226 169.500h8.500v-16h4v16h8.500" fill="none" stroke="#189048" stroke-width="1.3" /><rect x="257" y="149" width="25" height="24" fill="#f0f0f0" /><path d="M257.5 173V149.5H282" fill="none" stroke="#fff" stroke-width="1" /><path d="M257 172.5H281.5V149" fill="none" stroke="#8c8c8c" stroke-width="1" /><rect x="260" y="151.5" width="18" height="19" fill="#005808" /><path d="M259 169.500h3.500v-16h4.500v16h4.500v-16h4.500v16h3.500" fill="none" stroke="#18a038" stroke-width="1.2" /><path d="M292.5 152V172" stroke="#303030" stroke-width="1" stroke-dasharray="1 1.3" fill="none"/><defs><pattern id="hat" width="2" height="2" patternUnits="userSpaceOnUse"><rect width="2" height="2" fill="#b8bcd8"/><rect width="1" height="1" fill="#4858a8"/><rect x="1" y="1" width="1" height="1" fill="#4858a8"/></pattern></defs><rect x="303" y="151" width="21" height="20.5" fill="url(#hat)" /><path d="M304 169.500h9v-16h10" fill="none" stroke="#60c080" stroke-width="1.2" stroke-dasharray="1.5 1"/><path d="M331 169.500h8v-17h10" fill="none" stroke="#30a040" stroke-width="1.2" stroke-dasharray="1.2 1.2"/><path d="M339.500 153v16" fill="none" stroke="#3040c0" stroke-width="2.4" stroke-dasharray="1 1"/><path d="M337.5 155v14" fill="none" stroke="#e0c000" stroke-width="1.2" stroke-dasharray="1 1"/><path d="M359 169.500h9v-17h9" fill="none" stroke="#30a040" stroke-width="1.2" stroke-dasharray="1.2 1.2"/><path d="M386 169.500h9v-17h10" fill="none" stroke="#30a040" stroke-width="1.2" stroke-dasharray="1.2 1.2"/><path d="M395.500 153v16" fill="none" stroke="#e8d000" stroke-width="1.6" stroke-dasharray="1.2 1"/></svg>
<span id="search" class="t" style="left:1388px;top:72.49px;font:13.6px/1 'Liberation Sans',sans-serif;color:#1a1a1a;letter-spacing:-0.083px;transform:scale(1.0,1.07);transform-origin:0 11.51px;">Search:</span>
<div style="left:1342px;top:0;width:76px;height:9px;overflow:hidden"><span id="ps100" class="t" style="left:20px;top:-7px;font:14.5px/1 'Liberation Mono',monospace;color:#202060">100 ps</span></div>
</div></body></html>
